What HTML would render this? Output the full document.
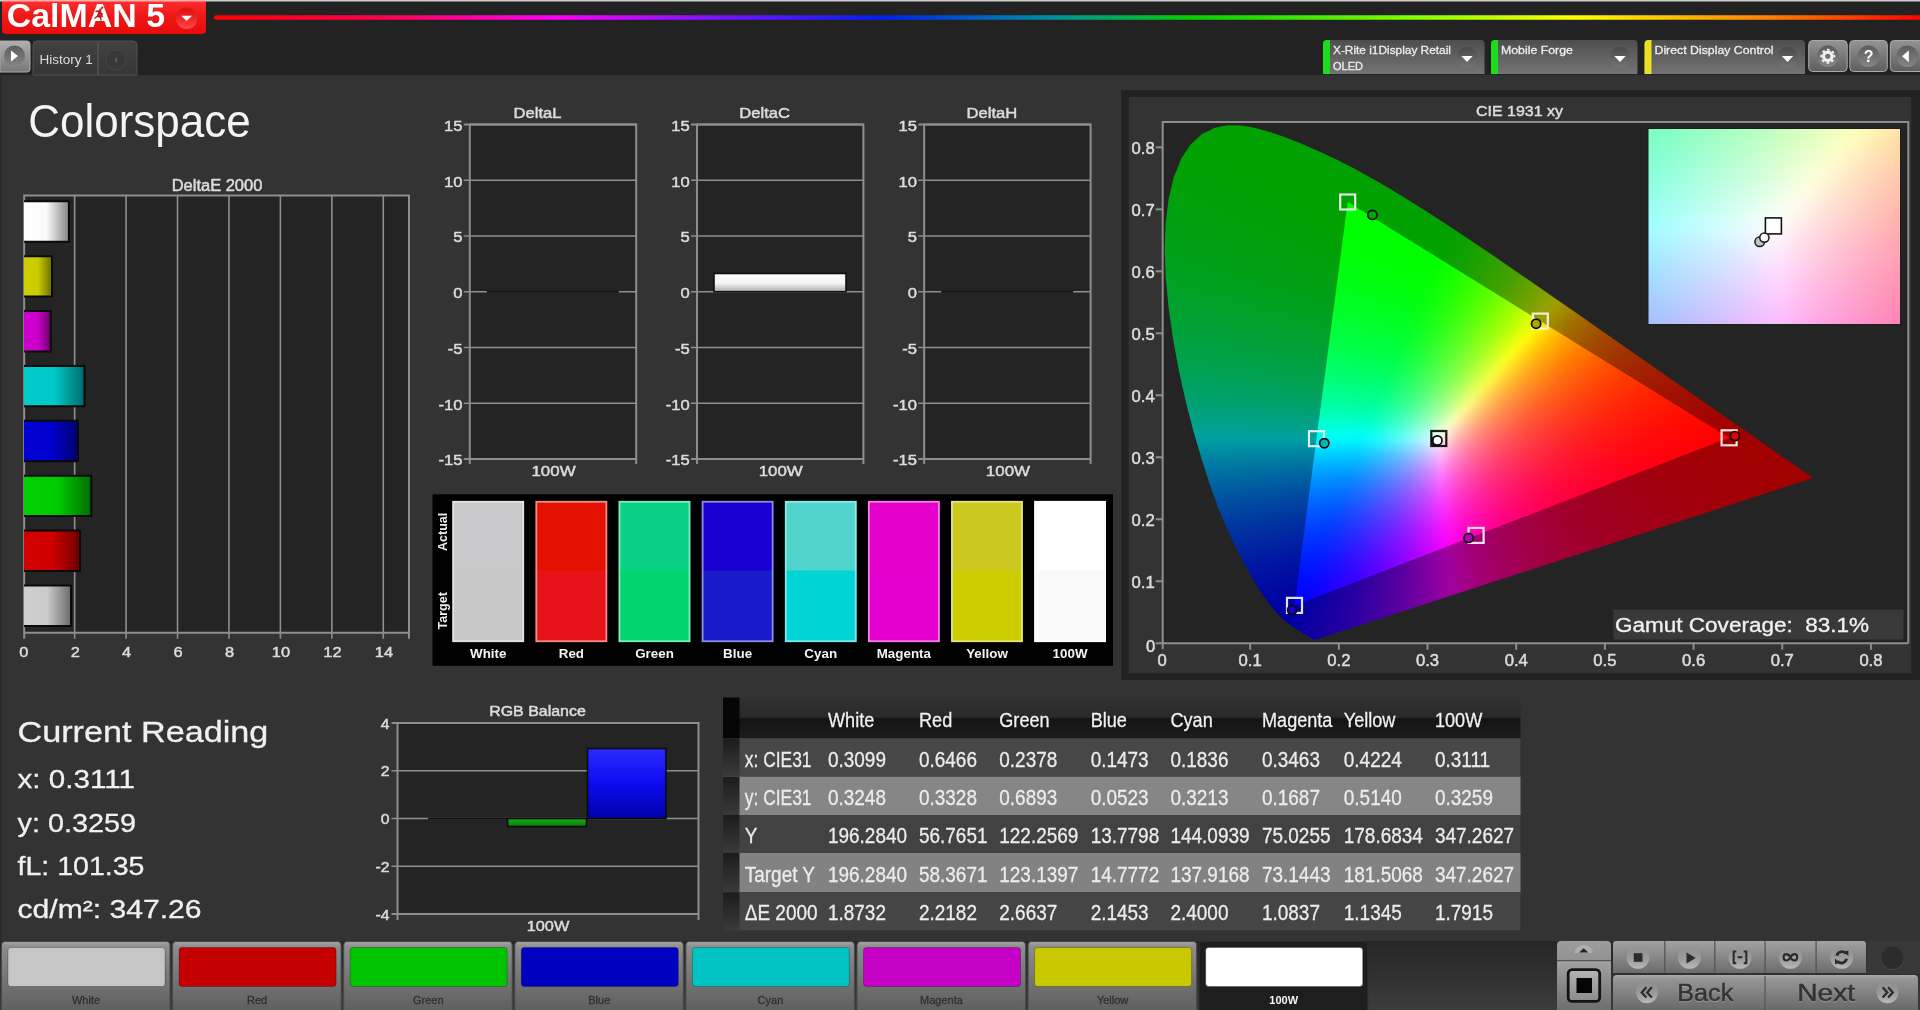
<!DOCTYPE html>
<html><head><meta charset="utf-8"><title>CalMAN 5 - Colorspace</title>
<style>
html,body{margin:0;padding:0;background:#333;overflow:hidden}
svg{display:block}
text{font-family:"Liberation Sans",sans-serif}
.cc rect{height:8.5px}
</style></head>
<body>
<svg width="1920" height="1010" viewBox="0 0 1920 1010">
<defs>
<linearGradient id="rb" x1="0" x2="1" y1="0" y2="0"><stop offset="0" stop-color="#f00"/><stop offset="0.10" stop-color="#ff0050"/><stop offset="0.20" stop-color="#f0f"/><stop offset="0.285" stop-color="#8a10ff"/><stop offset="0.39" stop-color="#0020f0"/><stop offset="0.49" stop-color="#0090a0"/><stop offset="0.57" stop-color="#00d000"/><stop offset="0.70" stop-color="#80ff00"/><stop offset="0.795" stop-color="#ff0"/><stop offset="0.91" stop-color="#ff8000"/><stop offset="1" stop-color="#f00"/></linearGradient>
<linearGradient id="lg" x1="0" x2="0" y1="0" y2="1"><stop offset="0" stop-color="#ff3030"/><stop offset="0.45" stop-color="#f01818"/><stop offset="1" stop-color="#e80c0c"/></linearGradient>
<linearGradient id="lgc" x1="0" x2="0" y1="0" y2="1"><stop offset="0" stop-color="#de0c0c"/><stop offset="1" stop-color="#ff4444"/></linearGradient>
<linearGradient id="gbtn" x1="0" x2="0" y1="0" y2="1"><stop offset="0" stop-color="#b0b0b0"/><stop offset="1" stop-color="#787878"/></linearGradient>
<linearGradient id="gtab" x1="0" x2="0" y1="0" y2="1"><stop offset="0" stop-color="#424242"/><stop offset="1" stop-color="#363636"/></linearGradient>
<linearGradient id="gbox" x1="0" x2="0" y1="0" y2="1"><stop offset="0" stop-color="#4e4e4e"/><stop offset="1" stop-color="#747474"/></linearGradient>
<linearGradient id="gdc" x1="0" x2="0" y1="0" y2="1"><stop offset="0" stop-color="#484848"/><stop offset="1" stop-color="#767676"/></linearGradient>
<linearGradient id="gb2" x1="0" x2="0" y1="0" y2="1"><stop offset="0" stop-color="#949494"/><stop offset="1" stop-color="#5e5e5e"/></linearGradient>
<linearGradient id="gci" x1="0" x2="0" y1="0" y2="1"><stop offset="0" stop-color="#5c5c5c"/><stop offset="1" stop-color="#868686"/></linearGradient>
<linearGradient id="be0" x1="0" x2="1" y1="0" y2="0"><stop offset="0" stop-color="#ffffff"/><stop offset="0.5" stop-color="#fafafa"/><stop offset="1" stop-color="#858585"/></linearGradient>
<linearGradient id="be1" x1="0" x2="1" y1="0" y2="0"><stop offset="0" stop-color="#cfcf00"/><stop offset="0.5" stop-color="#cbcb00"/><stop offset="1" stop-color="#6c6c00"/></linearGradient>
<linearGradient id="be2" x1="0" x2="1" y1="0" y2="0"><stop offset="0" stop-color="#d000d0"/><stop offset="0.5" stop-color="#cc00cc"/><stop offset="1" stop-color="#6c006c"/></linearGradient>
<linearGradient id="be3" x1="0" x2="1" y1="0" y2="0"><stop offset="0" stop-color="#00cccc"/><stop offset="0.5" stop-color="#00c8c8"/><stop offset="1" stop-color="#006a6a"/></linearGradient>
<linearGradient id="be4" x1="0" x2="1" y1="0" y2="0"><stop offset="0" stop-color="#0000d4"/><stop offset="0.5" stop-color="#0000d0"/><stop offset="1" stop-color="#00006e"/></linearGradient>
<linearGradient id="be5" x1="0" x2="1" y1="0" y2="0"><stop offset="0" stop-color="#00d000"/><stop offset="0.5" stop-color="#00cc00"/><stop offset="1" stop-color="#006c00"/></linearGradient>
<linearGradient id="be6" x1="0" x2="1" y1="0" y2="0"><stop offset="0" stop-color="#d40000"/><stop offset="0.5" stop-color="#d00000"/><stop offset="1" stop-color="#6e0000"/></linearGradient>
<linearGradient id="be7" x1="0" x2="1" y1="0" y2="0"><stop offset="0" stop-color="#cecece"/><stop offset="0.5" stop-color="#cacaca"/><stop offset="1" stop-color="#6b6b6b"/></linearGradient>
<linearGradient id="gbl" x1="0" x2="0" y1="0" y2="1"><stop offset="0" stop-color="#2a2aff"/><stop offset="0.5" stop-color="#0c0cf0"/><stop offset="1" stop-color="#0000a8"/></linearGradient>
<linearGradient id="ggr" x1="0" x2="0" y1="0" y2="1"><stop offset="0" stop-color="#18b018"/><stop offset="1" stop-color="#0a7a0a"/></linearGradient>
<linearGradient id="gwb" x1="0" x2="0" y1="0" y2="1"><stop offset="0" stop-color="#fff"/><stop offset="0.55" stop-color="#f4f4f4"/><stop offset="1" stop-color="#a8a8a8"/></linearGradient>
<linearGradient id="gth" x1="0" x2="0" y1="0" y2="1"><stop offset="0" stop-color="#303030"/><stop offset="0.48" stop-color="#2a2a2a"/><stop offset="0.52" stop-color="#141414"/><stop offset="1" stop-color="#1c1c1c"/></linearGradient>
<linearGradient id="gtl" x1="0" x2="0" y1="0" y2="1"><stop offset="0" stop-color="#1c1c1c"/><stop offset="1" stop-color="#3a3a3a"/></linearGradient>

<clipPath id="cl"><path d="M1315.9 639.5L1315.6 639.5L1315.2 639.6L1314.5 639.6L1313.5 639.4L1311.3 638.3L1307.3 635.9L1300.4 631.6L1298.5 630.5L1296.5 629.2L1294.2 627.7L1291.8 626.1L1289.2 624.2L1286.4 622.0L1283.3 619.4L1279.9 616.1L1276.0 611.9L1271.6 606.7L1266.8 600.5L1261.5 593.0L1255.7 584.0L1249.4 573.1L1242.5 560.3L1234.8 545.3L1226.6 527.8L1218.2 507.7L1210.0 484.9L1201.8 459.6L1193.6 431.7L1185.9 401.9L1179.0 371.0L1173.2 339.7L1168.7 308.5L1165.8 278.3L1164.7 249.8L1165.6 223.2L1168.6 198.7L1173.8 177.1L1181.2 158.8L1190.6 144.4L1201.7 134.2L1214.1 127.9L1227.4 125.2L1241.3 125.5L1255.5 128.1L1270.0 132.1L1284.5 137.0L1298.7 142.6L1312.5 148.4L1325.9 154.4L1339.1 160.8L1352.2 167.5L1365.1 174.5L1378.0 181.8L1390.8 189.3L1403.6 197.0L1416.3 205.0L1429.0 213.0L1441.7 221.2L1454.3 229.6L1467.0 238.0L1479.7 246.5L1492.4 255.1L1505.0 263.8L1517.7 272.4L1530.3 281.1L1542.8 289.8L1555.3 298.4L1567.7 307.0L1580.0 315.6L1592.1 324.0L1604.1 332.4L1616.0 340.7L1627.6 348.8L1639.0 356.7L1650.2 364.5L1661.0 372.0L1671.5 379.4L1681.7 386.5L1691.5 393.3L1700.7 399.7L1709.3 405.8L1717.6 411.5L1725.4 416.9L1732.8 422.1L1739.7 426.9L1746.0 431.3L1751.9 435.3L1757.3 439.1L1762.3 442.6L1766.8 445.7L1771.0 448.6L1774.7 451.3L1778.2 453.7L1781.3 455.9L1784.2 457.9L1786.8 459.7L1789.3 461.4L1799.1 468.3L1805.3 472.6L1808.8 475.0L1810.6 476.3L1811.9 477.2L1812.8 477.8L1813.0 478.0Z"/></clipPath>
<clipPath id="ct"><path d="M1729.1 437.8L1347.7 202.0L1294.5 605.4Z"/></clipPath>
<filter id="bl" x="-5%" y="-5%" width="110%" height="110%" color-interpolation-filters="sRGB"><feGaussianBlur stdDeviation="3.0"/></filter>

<clipPath id="ci"><rect x="1648.5" y="129" width="251.5" height="195"/></clipPath>
<filter id="bl2" x="-10%" y="-10%" width="120%" height="120%" color-interpolation-filters="sRGB"><feGaussianBlur stdDeviation="6"/></filter>
<linearGradient id="gbar" x1="0" x2="0" y1="0" y2="1"><stop offset="0" stop-color="#262626"/><stop offset="1" stop-color="#3c3c3c"/></linearGradient>
<linearGradient id="gsb" x1="0" x2="0" y1="0" y2="1"><stop offset="0" stop-color="#a4a4a4"/><stop offset="0.08" stop-color="#8c8c8c"/><stop offset="1" stop-color="#5e5e5e"/></linearGradient>
<linearGradient id="gct" x1="0" x2="0" y1="0" y2="1"><stop offset="0" stop-color="#a2a2a2"/><stop offset="1" stop-color="#6c6c6c"/></linearGradient>
<linearGradient id="gct2" x1="0" x2="0" y1="0" y2="1"><stop offset="0" stop-color="#9c9c9c"/><stop offset="1" stop-color="#787878"/></linearGradient>
<linearGradient id="gsq" x1="0" x2="0" y1="0" y2="1"><stop offset="0" stop-color="#b4b4b4"/><stop offset="1" stop-color="#8c8c8c"/></linearGradient>
<linearGradient id="grc" x1="0" x2="0" y1="0" y2="1"><stop offset="0" stop-color="#909090" stop-opacity="0.25"/><stop offset="0.5" stop-color="#a8a8a8" stop-opacity="0.6"/><stop offset="1" stop-color="#c8c8c8" stop-opacity="0.85"/></linearGradient>
<linearGradient id="gbn" x1="0" x2="0" y1="0" y2="1"><stop offset="0" stop-color="#ababab"/><stop offset="0.1" stop-color="#969696"/><stop offset="1" stop-color="#666"/></linearGradient>
</defs>
<g opacity="0.999">
<rect x="0.00" y="0.00" width="1920.00" height="1010.00" fill="#333" />
<rect x="0.00" y="0.00" width="1920.00" height="75.00" fill="#222" />
<rect x="0.00" y="0.00" width="1920.00" height="1.50" fill="#ccc" />
<rect x="0.00" y="75.00" width="2.00" height="866.00" fill="#2b2b2b" />
<rect x="214" y="15.2" width="1710" height="4.6" rx="2.3" fill="url(#rb)"/>
<path d="M2 0H206V30Q206 34 202 34H6Q2 34 2 30Z" fill="url(#lg)"/>
<rect x="2.00" y="0.00" width="204.00" height="1.50" fill="#ffb0b0" />
<text transform="translate(6.70 26.90) scale(1.0284 1)" font-size="33" fill="#fff" font-weight="bold" style="white-space:pre;filter:drop-shadow(0.8px 0.9px 0 rgba(110,0,0,.55))">CalMAN 5</text>
<path d="M101.500 8.5l-2.5 4l3.500 1.500M99 12.5l-1.500 3.500l-2.500 2M97.500 16l3 1.500l0.500 2.500M98.500 11l-2.500 0.500" fill="none" stroke="#b01818" stroke-width="1.3" stroke-linecap="round"/>
<circle cx="102.3" cy="7.6" r="1.1" fill="#b01818"/>
<circle cx="186.7" cy="18.3" r="10.8" fill="url(#lgc)"/>
<path d="M181.2 15.8h10.8l-5.400 5.200z" fill="#fff"/>
<path d="M0 41H27Q30 41 30 44V69Q30 72 27 72H0Z" fill="url(#gbtn)" stroke="#aaa" stroke-width="1"/>
<circle cx="14.5" cy="56" r="10.5" fill="url(#gci)"/>
<path d="M11 50.5l7 5.5l-7 5.5z" fill="#fff"/>
<path d="M33 75V45Q33 41 37 41H133Q137 41 137 45V75Z" fill="url(#gtab)" stroke="#505050" stroke-width="1"/>
<line x1="98.00" y1="42.00" x2="98.00" y2="75.00" stroke="#555" stroke-width="1.5" />
<text x="39.50" y="63.50" font-size="13.5" fill="#ddd">History 1</text>
<circle cx="116" cy="60" r="10" fill="#383838" stroke="#444" stroke-width="1"/>
<rect x="115.50" y="58.00" width="1.50" height="4.00" fill="#666" />
<path d="M1323 74V44Q1323 40 1327 40H1480.5Q1484.5 40 1484.5 44V74Z" fill="url(#gbox)"/>
<path d="M1323 74V44Q1323 40 1327 40H1330V74Z" fill="#1cde1c"/>
<text transform="translate(1333.00 53.50) scale(1.0316 1)" font-size="11.5" fill="#eee" stroke="#eee" stroke-width="0.3">X-Rite i1Display Retail</text>
<text transform="translate(1333.00 69.50) scale(0.9580 1)" font-size="11.5" fill="#eee" stroke="#eee" stroke-width="0.3">OLED</text>
<circle cx="1467.0" cy="57.5" r="10.5" fill="url(#gdc)"/>
<path d="M1461.3 56h11.4l-5.7 6z" fill="#fff"/>
<path d="M1491 74V44Q1491 40 1495 40H1633.5Q1637.5 40 1637.5 44V74Z" fill="url(#gbox)"/>
<path d="M1491 74V44Q1491 40 1495 40H1498V74Z" fill="#1cde1c"/>
<text transform="translate(1501.00 53.50) scale(1.0730 1)" font-size="11.5" fill="#eee" stroke="#eee" stroke-width="0.3">Mobile Forge</text>
<circle cx="1620.0" cy="57.5" r="10.5" fill="url(#gdc)"/>
<path d="M1614.3 56h11.4l-5.7 6z" fill="#fff"/>
<path d="M1644.5 74V44Q1644.5 40 1648.5 40H1801Q1805 40 1805 44V74Z" fill="url(#gbox)"/>
<path d="M1644.5 74V44Q1644.5 40 1648.5 40H1651.5V74Z" fill="#e8e020"/>
<text transform="translate(1654.50 53.50) scale(1.0703 1)" font-size="11.5" fill="#eee" stroke="#eee" stroke-width="0.3">Direct Display Control</text>
<circle cx="1787.5" cy="57.5" r="10.5" fill="url(#gdc)"/>
<path d="M1781.8 56h11.4l-5.7 6z" fill="#fff"/>
<rect x="1808.7" y="40.5" width="38.5" height="31" rx="4" fill="url(#gb2)" stroke="#aaa" stroke-width="1"/>
<rect x="1849.8" y="40.5" width="37.5" height="31" rx="4" fill="url(#gb2)" stroke="#aaa" stroke-width="1"/>
<rect x="1890.3" y="40.5" width="34.700000000000045" height="31" rx="4" fill="url(#gb2)" stroke="#aaa" stroke-width="1"/>
<circle cx="1827.8" cy="56.3" r="10.8" fill="url(#gci)"/>
<circle cx="1827.8" cy="56.3" r="4.2" fill="none" stroke="#f0f0f0" stroke-width="3.2"/>
<circle cx="1827.8" cy="56.3" r="6.5" fill="none" stroke="#f0f0f0" stroke-width="2" stroke-dasharray="2.6 2.505" transform="rotate(-14 1827.8 56.3)"/>
<circle cx="1868.5" cy="56.3" r="10.8" fill="url(#gci)"/>
<text x="1868.60" y="62.00" font-size="16" fill="#fff" font-weight="bold" text-anchor="middle">?</text>
<circle cx="1907.3" cy="56.3" r="10.8" fill="url(#gci)"/>
<path d="M1908.8 50.4v11.8l-6.8-5.9z" fill="#fff"/>
<text transform="translate(28.20 137.20) scale(0.9563 1)" font-size="46" fill="#f4f4f4">Colorspace</text>
<rect x="24.20" y="195.40" width="384.80" height="437.40" fill="#242424" />
<line x1="74.64" y1="195.40" x2="74.64" y2="632.80" stroke="#8e8e8e" stroke-width="1.6" />
<line x1="126.08" y1="195.40" x2="126.08" y2="632.80" stroke="#8e8e8e" stroke-width="1.6" />
<line x1="177.52" y1="195.40" x2="177.52" y2="632.80" stroke="#8e8e8e" stroke-width="1.6" />
<line x1="228.96" y1="195.40" x2="228.96" y2="632.80" stroke="#8e8e8e" stroke-width="1.6" />
<line x1="280.40" y1="195.40" x2="280.40" y2="632.80" stroke="#8e8e8e" stroke-width="1.6" />
<line x1="331.84" y1="195.40" x2="331.84" y2="632.80" stroke="#8e8e8e" stroke-width="1.6" />
<line x1="383.28" y1="195.40" x2="383.28" y2="632.80" stroke="#8e8e8e" stroke-width="1.6" />
<path d="M24.2 638.8V195.4H409V638.8M24.2 632.8H409" fill="none" stroke="#8e8e8e" stroke-width="2"/>
<line x1="74.64" y1="632.80" x2="74.64" y2="638.80" stroke="#8e8e8e" stroke-width="1.6" />
<line x1="126.08" y1="632.80" x2="126.08" y2="638.80" stroke="#8e8e8e" stroke-width="1.6" />
<line x1="177.52" y1="632.80" x2="177.52" y2="638.80" stroke="#8e8e8e" stroke-width="1.6" />
<line x1="228.96" y1="632.80" x2="228.96" y2="638.80" stroke="#8e8e8e" stroke-width="1.6" />
<line x1="280.40" y1="632.80" x2="280.40" y2="638.80" stroke="#8e8e8e" stroke-width="1.6" />
<line x1="331.84" y1="632.80" x2="331.84" y2="638.80" stroke="#8e8e8e" stroke-width="1.6" />
<line x1="383.28" y1="632.80" x2="383.28" y2="638.80" stroke="#8e8e8e" stroke-width="1.6" />
<text transform="translate(217.00 190.50) scale(1.0300 1)" font-size="16" fill="#dcdcdc" text-anchor="middle" stroke="#dcdcdc" stroke-width="0.5">DeltaE 2000</text>
<text transform="translate(23.80 657.00) scale(1.0600 1)" font-size="15.5" fill="#dcdcdc" text-anchor="middle" stroke="#dcdcdc" stroke-width="0.5">0</text>
<text transform="translate(75.24 657.00) scale(1.0600 1)" font-size="15.5" fill="#dcdcdc" text-anchor="middle" stroke="#dcdcdc" stroke-width="0.5">2</text>
<text transform="translate(126.68 657.00) scale(1.0600 1)" font-size="15.5" fill="#dcdcdc" text-anchor="middle" stroke="#dcdcdc" stroke-width="0.5">4</text>
<text transform="translate(178.12 657.00) scale(1.0600 1)" font-size="15.5" fill="#dcdcdc" text-anchor="middle" stroke="#dcdcdc" stroke-width="0.5">6</text>
<text transform="translate(229.56 657.00) scale(1.0600 1)" font-size="15.5" fill="#dcdcdc" text-anchor="middle" stroke="#dcdcdc" stroke-width="0.5">8</text>
<text transform="translate(281.00 657.00) scale(1.0600 1)" font-size="15.5" fill="#dcdcdc" text-anchor="middle" stroke="#dcdcdc" stroke-width="0.5">10</text>
<text transform="translate(332.44 657.00) scale(1.0600 1)" font-size="15.5" fill="#dcdcdc" text-anchor="middle" stroke="#dcdcdc" stroke-width="0.5">12</text>
<text transform="translate(383.88 657.00) scale(1.0600 1)" font-size="15.5" fill="#dcdcdc" text-anchor="middle" stroke="#dcdcdc" stroke-width="0.5">14</text>
<path d="M24.0 201.3H68.9V241.7H24.0" fill="url(#be0)" stroke="#0a0a0a" stroke-width="2" stroke-linejoin="round"/>
<path d="M24.0 256.2H52.0V296.6H24.0" fill="url(#be1)" stroke="#0a0a0a" stroke-width="2" stroke-linejoin="round"/>
<path d="M24.0 311.1H50.7V351.5H24.0" fill="url(#be2)" stroke="#0a0a0a" stroke-width="2" stroke-linejoin="round"/>
<path d="M24.0 365.9H84.5V406.3H24.0" fill="url(#be3)" stroke="#0a0a0a" stroke-width="2" stroke-linejoin="round"/>
<path d="M24.0 420.8H78.0V461.2H24.0" fill="url(#be4)" stroke="#0a0a0a" stroke-width="2" stroke-linejoin="round"/>
<path d="M24.0 475.7H91.3V516.1H24.0" fill="url(#be5)" stroke="#0a0a0a" stroke-width="2" stroke-linejoin="round"/>
<path d="M24.0 530.6H79.9V571.0H24.0" fill="url(#be6)" stroke="#0a0a0a" stroke-width="2" stroke-linejoin="round"/>
<path d="M24.0 585.5H71.0V625.9H24.0" fill="url(#be7)" stroke="#0a0a0a" stroke-width="2" stroke-linejoin="round"/>
<text transform="translate(17.50 741.70) scale(1.1403 1)" font-size="30" fill="#f0f0f0" stroke="#f0f0f0" stroke-width="0.3">Current Reading</text>
<text transform="translate(17.50 788.00) scale(1.1852 1)" font-size="25" fill="#f0f0f0" stroke="#f0f0f0" stroke-width="0.3">x: 0.3111</text>
<text transform="translate(17.50 831.50) scale(1.1522 1)" font-size="25" fill="#f0f0f0" stroke="#f0f0f0" stroke-width="0.3">y: 0.3259</text>
<text transform="translate(17.50 874.50) scale(1.1421 1)" font-size="25" fill="#f0f0f0" stroke="#f0f0f0" stroke-width="0.3">fL: 101.35</text>
<text transform="translate(17.50 918.00) scale(1.2038 1)" font-size="25" fill="#f0f0f0" stroke="#f0f0f0" stroke-width="0.3">cd/m²: 347.26</text>
<rect x="397.50" y="723.00" width="301.00" height="191.00" fill="#242424" />
<line x1="391.50" y1="723.00" x2="698.50" y2="723.00" stroke="#8e8e8e" stroke-width="2" />
<text transform="translate(389.50 728.50) scale(1.0500 1)" font-size="15" fill="#dcdcdc" text-anchor="end" stroke="#dcdcdc" stroke-width="0.5">4</text>
<line x1="391.50" y1="770.75" x2="698.50" y2="770.75" stroke="#8e8e8e" stroke-width="1.6" />
<text transform="translate(389.50 776.25) scale(1.0500 1)" font-size="15" fill="#dcdcdc" text-anchor="end" stroke="#dcdcdc" stroke-width="0.5">2</text>
<line x1="391.50" y1="818.50" x2="698.50" y2="818.50" stroke="#8e8e8e" stroke-width="1.6" />
<text transform="translate(389.50 824.00) scale(1.0500 1)" font-size="15" fill="#dcdcdc" text-anchor="end" stroke="#dcdcdc" stroke-width="0.5">0</text>
<line x1="391.50" y1="866.25" x2="698.50" y2="866.25" stroke="#8e8e8e" stroke-width="1.6" />
<text transform="translate(389.50 871.75) scale(1.0500 1)" font-size="15" fill="#dcdcdc" text-anchor="end" stroke="#dcdcdc" stroke-width="0.5">-2</text>
<line x1="391.50" y1="914.00" x2="698.50" y2="914.00" stroke="#8e8e8e" stroke-width="2" />
<text transform="translate(389.50 919.50) scale(1.0500 1)" font-size="15" fill="#dcdcdc" text-anchor="end" stroke="#dcdcdc" stroke-width="0.5">-4</text>
<path d="M397.5 920V723H698.5V920" fill="none" stroke="#8e8e8e" stroke-width="2"/>
<text transform="translate(537.50 716.00) scale(1.0300 1)" font-size="15.5" fill="#dcdcdc" text-anchor="middle" stroke="#dcdcdc" stroke-width="0.5">RGB Balance</text>
<text transform="translate(548.00 930.50) scale(1.0500 1)" font-size="15.5" fill="#dcdcdc" text-anchor="middle" stroke="#dcdcdc" stroke-width="0.5">100W</text>
<rect x="428" y="817.7" width="79" height="1.8" fill="#111"/>
<rect x="507.5" y="818.5" width="79" height="8" fill="url(#ggr)" stroke="#0a0a0a" stroke-width="1.6"/>
<rect x="587.5" y="748.5" width="78.5" height="70.0" fill="url(#gbl)" stroke="#0a0a0a" stroke-width="1.6"/>
<rect x="469.80" y="124.50" width="166.40" height="334.50" fill="#242424" />
<line x1="463.80" y1="124.50" x2="636.20" y2="124.50" stroke="#8e8e8e" stroke-width="2" />
<text transform="translate(462.50 130.90) scale(1.0700 1)" font-size="15.5" fill="#dcdcdc" text-anchor="end" stroke="#dcdcdc" stroke-width="0.5">15</text>
<line x1="463.80" y1="180.25" x2="636.20" y2="180.25" stroke="#8e8e8e" stroke-width="1.6" />
<text transform="translate(462.50 186.65) scale(1.0700 1)" font-size="15.5" fill="#dcdcdc" text-anchor="end" stroke="#dcdcdc" stroke-width="0.5">10</text>
<line x1="463.80" y1="236.00" x2="636.20" y2="236.00" stroke="#8e8e8e" stroke-width="1.6" />
<text transform="translate(462.50 242.40) scale(1.0700 1)" font-size="15.5" fill="#dcdcdc" text-anchor="end" stroke="#dcdcdc" stroke-width="0.5">5</text>
<line x1="463.80" y1="291.75" x2="636.20" y2="291.75" stroke="#8e8e8e" stroke-width="1.6" />
<text transform="translate(462.50 298.15) scale(1.0700 1)" font-size="15.5" fill="#dcdcdc" text-anchor="end" stroke="#dcdcdc" stroke-width="0.5">0</text>
<line x1="463.80" y1="347.50" x2="636.20" y2="347.50" stroke="#8e8e8e" stroke-width="1.6" />
<text transform="translate(462.50 353.90) scale(1.0700 1)" font-size="15.5" fill="#dcdcdc" text-anchor="end" stroke="#dcdcdc" stroke-width="0.5">-5</text>
<line x1="463.80" y1="403.25" x2="636.20" y2="403.25" stroke="#8e8e8e" stroke-width="1.6" />
<text transform="translate(462.50 409.65) scale(1.0700 1)" font-size="15.5" fill="#dcdcdc" text-anchor="end" stroke="#dcdcdc" stroke-width="0.5">-10</text>
<line x1="463.80" y1="459.00" x2="636.20" y2="459.00" stroke="#8e8e8e" stroke-width="2" />
<text transform="translate(462.50 465.40) scale(1.0700 1)" font-size="15.5" fill="#dcdcdc" text-anchor="end" stroke="#dcdcdc" stroke-width="0.5">-15</text>
<path d="M469.8 464V124.5H636.2V464" fill="none" stroke="#8e8e8e" stroke-width="2"/>
<text transform="translate(537.50 117.70) scale(1.0700 1)" font-size="15.5" fill="#dcdcdc" text-anchor="middle" stroke="#dcdcdc" stroke-width="0.5">DeltaL</text>
<text transform="translate(553.50 475.80) scale(1.0900 1)" font-size="15.5" fill="#dcdcdc" text-anchor="middle" stroke="#dcdcdc" stroke-width="0.5">100W</text>
<rect x="486.8" y="290.8" width="132" height="2" fill="#141414"/>
<rect x="697.00" y="124.50" width="166.40" height="334.50" fill="#242424" />
<line x1="691.00" y1="124.50" x2="863.40" y2="124.50" stroke="#8e8e8e" stroke-width="2" />
<text transform="translate(689.70 130.90) scale(1.0700 1)" font-size="15.5" fill="#dcdcdc" text-anchor="end" stroke="#dcdcdc" stroke-width="0.5">15</text>
<line x1="691.00" y1="180.25" x2="863.40" y2="180.25" stroke="#8e8e8e" stroke-width="1.6" />
<text transform="translate(689.70 186.65) scale(1.0700 1)" font-size="15.5" fill="#dcdcdc" text-anchor="end" stroke="#dcdcdc" stroke-width="0.5">10</text>
<line x1="691.00" y1="236.00" x2="863.40" y2="236.00" stroke="#8e8e8e" stroke-width="1.6" />
<text transform="translate(689.70 242.40) scale(1.0700 1)" font-size="15.5" fill="#dcdcdc" text-anchor="end" stroke="#dcdcdc" stroke-width="0.5">5</text>
<line x1="691.00" y1="291.75" x2="863.40" y2="291.75" stroke="#8e8e8e" stroke-width="1.6" />
<text transform="translate(689.70 298.15) scale(1.0700 1)" font-size="15.5" fill="#dcdcdc" text-anchor="end" stroke="#dcdcdc" stroke-width="0.5">0</text>
<line x1="691.00" y1="347.50" x2="863.40" y2="347.50" stroke="#8e8e8e" stroke-width="1.6" />
<text transform="translate(689.70 353.90) scale(1.0700 1)" font-size="15.5" fill="#dcdcdc" text-anchor="end" stroke="#dcdcdc" stroke-width="0.5">-5</text>
<line x1="691.00" y1="403.25" x2="863.40" y2="403.25" stroke="#8e8e8e" stroke-width="1.6" />
<text transform="translate(689.70 409.65) scale(1.0700 1)" font-size="15.5" fill="#dcdcdc" text-anchor="end" stroke="#dcdcdc" stroke-width="0.5">-10</text>
<line x1="691.00" y1="459.00" x2="863.40" y2="459.00" stroke="#8e8e8e" stroke-width="2" />
<text transform="translate(689.70 465.40) scale(1.0700 1)" font-size="15.5" fill="#dcdcdc" text-anchor="end" stroke="#dcdcdc" stroke-width="0.5">-15</text>
<path d="M697.0 464V124.5H863.4V464" fill="none" stroke="#8e8e8e" stroke-width="2"/>
<text transform="translate(764.70 117.70) scale(1.0700 1)" font-size="15.5" fill="#dcdcdc" text-anchor="middle" stroke="#dcdcdc" stroke-width="0.5">DeltaC</text>
<text transform="translate(780.70 475.80) scale(1.0900 1)" font-size="15.5" fill="#dcdcdc" text-anchor="middle" stroke="#dcdcdc" stroke-width="0.5">100W</text>
<rect x="714.0" y="273.5" width="132" height="18.2" fill="url(#gwb)" stroke="#101010" stroke-width="1.6"/>
<rect x="924.20" y="124.50" width="166.40" height="334.50" fill="#242424" />
<line x1="918.20" y1="124.50" x2="1090.60" y2="124.50" stroke="#8e8e8e" stroke-width="2" />
<text transform="translate(916.90 130.90) scale(1.0700 1)" font-size="15.5" fill="#dcdcdc" text-anchor="end" stroke="#dcdcdc" stroke-width="0.5">15</text>
<line x1="918.20" y1="180.25" x2="1090.60" y2="180.25" stroke="#8e8e8e" stroke-width="1.6" />
<text transform="translate(916.90 186.65) scale(1.0700 1)" font-size="15.5" fill="#dcdcdc" text-anchor="end" stroke="#dcdcdc" stroke-width="0.5">10</text>
<line x1="918.20" y1="236.00" x2="1090.60" y2="236.00" stroke="#8e8e8e" stroke-width="1.6" />
<text transform="translate(916.90 242.40) scale(1.0700 1)" font-size="15.5" fill="#dcdcdc" text-anchor="end" stroke="#dcdcdc" stroke-width="0.5">5</text>
<line x1="918.20" y1="291.75" x2="1090.60" y2="291.75" stroke="#8e8e8e" stroke-width="1.6" />
<text transform="translate(916.90 298.15) scale(1.0700 1)" font-size="15.5" fill="#dcdcdc" text-anchor="end" stroke="#dcdcdc" stroke-width="0.5">0</text>
<line x1="918.20" y1="347.50" x2="1090.60" y2="347.50" stroke="#8e8e8e" stroke-width="1.6" />
<text transform="translate(916.90 353.90) scale(1.0700 1)" font-size="15.5" fill="#dcdcdc" text-anchor="end" stroke="#dcdcdc" stroke-width="0.5">-5</text>
<line x1="918.20" y1="403.25" x2="1090.60" y2="403.25" stroke="#8e8e8e" stroke-width="1.6" />
<text transform="translate(916.90 409.65) scale(1.0700 1)" font-size="15.5" fill="#dcdcdc" text-anchor="end" stroke="#dcdcdc" stroke-width="0.5">-10</text>
<line x1="918.20" y1="459.00" x2="1090.60" y2="459.00" stroke="#8e8e8e" stroke-width="2" />
<text transform="translate(916.90 465.40) scale(1.0700 1)" font-size="15.5" fill="#dcdcdc" text-anchor="end" stroke="#dcdcdc" stroke-width="0.5">-15</text>
<path d="M924.2 464V124.5H1090.6V464" fill="none" stroke="#8e8e8e" stroke-width="2"/>
<text transform="translate(991.90 117.70) scale(1.0700 1)" font-size="15.5" fill="#dcdcdc" text-anchor="middle" stroke="#dcdcdc" stroke-width="0.5">DeltaH</text>
<text transform="translate(1007.90 475.80) scale(1.0900 1)" font-size="15.5" fill="#dcdcdc" text-anchor="middle" stroke="#dcdcdc" stroke-width="0.5">100W</text>
<rect x="941.2" y="290.8" width="132" height="2" fill="#141414"/>
<rect x="432.50" y="494.30" width="680.50" height="171.50" fill="#000" />
<rect x="452.50" y="501.00" width="71.50" height="70.00" fill="#c9c9cb" />
<rect x="452.50" y="570.50" width="71.50" height="71.50" fill="#c8c8c8" />
<rect x="453.25" y="501.75" width="70.0" height="139.5" fill="none" stroke="#e9e9e9" stroke-width="1.8" opacity="0.85"/>
<text transform="translate(488.25 657.80) scale(1.0300 1)" font-size="13" fill="#f4f4f4" font-weight="bold" text-anchor="middle">White</text>
<rect x="535.62" y="501.00" width="71.50" height="70.00" fill="#e41000" />
<rect x="535.62" y="570.50" width="71.50" height="71.50" fill="#e61419" />
<rect x="536.37" y="501.75" width="70.0" height="139.5" fill="none" stroke="#f5a1a3" stroke-width="1.8" opacity="0.85"/>
<text transform="translate(571.37 657.80) scale(1.0300 1)" font-size="13" fill="#f4f4f4" font-weight="bold" text-anchor="middle">Red</text>
<rect x="618.74" y="501.00" width="71.50" height="70.00" fill="#0ad085" />
<rect x="618.74" y="570.50" width="71.50" height="71.50" fill="#00d46e" />
<rect x="619.49" y="501.75" width="70.0" height="139.5" fill="none" stroke="#99edc5" stroke-width="1.8" opacity="0.85"/>
<text transform="translate(654.49 657.80) scale(1.0300 1)" font-size="13" fill="#f4f4f4" font-weight="bold" text-anchor="middle">Green</text>
<rect x="701.86" y="501.00" width="71.50" height="70.00" fill="#1800d0" />
<rect x="701.86" y="570.50" width="71.50" height="71.50" fill="#1a1ac8" />
<rect x="702.61" y="501.75" width="70.0" height="139.5" fill="none" stroke="#a3a3e9" stroke-width="1.8" opacity="0.85"/>
<text transform="translate(737.61 657.80) scale(1.0300 1)" font-size="13" fill="#f4f4f4" font-weight="bold" text-anchor="middle">Blue</text>
<rect x="784.98" y="501.00" width="71.50" height="70.00" fill="#50d4cc" />
<rect x="784.98" y="570.50" width="71.50" height="71.50" fill="#00d4d4" />
<rect x="785.73" y="501.75" width="70.0" height="139.5" fill="none" stroke="#99eded" stroke-width="1.8" opacity="0.85"/>
<text transform="translate(820.73 657.80) scale(1.0300 1)" font-size="13" fill="#f4f4f4" font-weight="bold" text-anchor="middle">Cyan</text>
<rect x="868.10" y="501.00" width="71.50" height="70.00" fill="#e600cc" />
<rect x="868.10" y="570.50" width="71.50" height="71.50" fill="#e600d0" />
<rect x="868.85" y="501.75" width="70.0" height="139.5" fill="none" stroke="#f599ec" stroke-width="1.8" opacity="0.85"/>
<text transform="translate(903.85 657.80) scale(1.0300 1)" font-size="13" fill="#f4f4f4" font-weight="bold" text-anchor="middle">Magenta</text>
<rect x="951.22" y="501.00" width="71.50" height="70.00" fill="#cbc820" />
<rect x="951.22" y="570.50" width="71.50" height="71.50" fill="#cccc00" />
<rect x="951.97" y="501.75" width="70.0" height="139.5" fill="none" stroke="#eaea99" stroke-width="1.8" opacity="0.85"/>
<text transform="translate(986.97 657.80) scale(1.0300 1)" font-size="13" fill="#f4f4f4" font-weight="bold" text-anchor="middle">Yellow</text>
<rect x="1034.34" y="501.00" width="71.50" height="70.00" fill="#ffffff" />
<rect x="1034.34" y="570.50" width="71.50" height="71.50" fill="#fafafa" />
<rect x="1035.09" y="501.75" width="70.0" height="139.5" fill="none" stroke="#fdfdfd" stroke-width="1.8" opacity="0.85"/>
<text transform="translate(1070.09 657.80) scale(1.0300 1)" font-size="13" fill="#f4f4f4" font-weight="bold" text-anchor="middle">100W</text>
<text transform="translate(447.3 531.9) rotate(-90)" font-size="12.5" font-weight="bold" fill="#f0f0f0" text-anchor="middle">Actual</text>
<text transform="translate(447.3 610.8) rotate(-90)" font-size="12.5" font-weight="bold" fill="#f0f0f0" text-anchor="middle">Target</text>
<rect x="723.00" y="697.50" width="797.50" height="40.80" fill="url(#gth)" />
<rect x="723.00" y="697.50" width="16.50" height="40.80" fill="#050505" />
<rect x="723.00" y="738.30" width="797.50" height="38.40" fill="#474747" />
<rect x="723.00" y="738.30" width="16.50" height="38.40" fill="url(#gtl)" />
<rect x="723.00" y="776.70" width="797.50" height="38.30" fill="#868686" />
<rect x="723.00" y="776.70" width="16.50" height="38.30" fill="url(#gtl)" />
<rect x="723.00" y="815.00" width="797.50" height="38.00" fill="#424242" />
<rect x="723.00" y="815.00" width="16.50" height="38.00" fill="url(#gtl)" />
<rect x="723.00" y="853.00" width="797.50" height="39.30" fill="#828282" />
<rect x="723.00" y="853.00" width="16.50" height="39.30" fill="url(#gtl)" />
<rect x="723.00" y="892.30" width="797.50" height="38.00" fill="#454545" />
<rect x="723.00" y="892.30" width="16.50" height="38.00" fill="url(#gtl)" />
<text transform="translate(828.00 726.70) scale(0.8620 1)" font-size="21" fill="#f2f2f2" stroke="#ececec" stroke-width="0.3">White</text>
<text transform="translate(919.00 726.70) scale(0.8620 1)" font-size="21" fill="#f2f2f2" stroke="#ececec" stroke-width="0.3">Red</text>
<text transform="translate(999.30 726.70) scale(0.8620 1)" font-size="21" fill="#f2f2f2" stroke="#ececec" stroke-width="0.3">Green</text>
<text transform="translate(1090.70 726.70) scale(0.8620 1)" font-size="21" fill="#f2f2f2" stroke="#ececec" stroke-width="0.3">Blue</text>
<text transform="translate(1170.50 726.70) scale(0.8620 1)" font-size="21" fill="#f2f2f2" stroke="#ececec" stroke-width="0.3">Cyan</text>
<text transform="translate(1262.00 726.70) scale(0.8620 1)" font-size="21" fill="#f2f2f2" stroke="#ececec" stroke-width="0.3">Magenta</text>
<text transform="translate(1343.80 726.70) scale(0.8620 1)" font-size="21" fill="#f2f2f2" stroke="#ececec" stroke-width="0.3">Yellow</text>
<text transform="translate(1435.00 726.70) scale(0.8620 1)" font-size="21" fill="#f2f2f2" stroke="#ececec" stroke-width="0.3">100W</text>
<text transform="translate(744.80 766.50) scale(0.7917 1)" font-size="22" fill="#ececec" stroke="#ececec" stroke-width="0.3">x: CIE31</text>
<text transform="translate(828.00 766.50) scale(0.8620 1)" font-size="22" fill="#ececec" stroke="#ececec" stroke-width="0.3">0.3099</text>
<text transform="translate(919.00 766.50) scale(0.8620 1)" font-size="22" fill="#ececec" stroke="#ececec" stroke-width="0.3">0.6466</text>
<text transform="translate(999.30 766.50) scale(0.8620 1)" font-size="22" fill="#ececec" stroke="#ececec" stroke-width="0.3">0.2378</text>
<text transform="translate(1090.70 766.50) scale(0.8620 1)" font-size="22" fill="#ececec" stroke="#ececec" stroke-width="0.3">0.1473</text>
<text transform="translate(1170.50 766.50) scale(0.8620 1)" font-size="22" fill="#ececec" stroke="#ececec" stroke-width="0.3">0.1836</text>
<text transform="translate(1262.00 766.50) scale(0.8620 1)" font-size="22" fill="#ececec" stroke="#ececec" stroke-width="0.3">0.3463</text>
<text transform="translate(1343.80 766.50) scale(0.8620 1)" font-size="22" fill="#ececec" stroke="#ececec" stroke-width="0.3">0.4224</text>
<text transform="translate(1435.00 766.50) scale(0.8620 1)" font-size="22" fill="#ececec" stroke="#ececec" stroke-width="0.3">0.3111</text>
<text transform="translate(744.80 804.80) scale(0.7917 1)" font-size="22" fill="#ececec" stroke="#ececec" stroke-width="0.3">y: CIE31</text>
<text transform="translate(828.00 804.80) scale(0.8620 1)" font-size="22" fill="#ececec" stroke="#ececec" stroke-width="0.3">0.3248</text>
<text transform="translate(919.00 804.80) scale(0.8620 1)" font-size="22" fill="#ececec" stroke="#ececec" stroke-width="0.3">0.3328</text>
<text transform="translate(999.30 804.80) scale(0.8620 1)" font-size="22" fill="#ececec" stroke="#ececec" stroke-width="0.3">0.6893</text>
<text transform="translate(1090.70 804.80) scale(0.8620 1)" font-size="22" fill="#ececec" stroke="#ececec" stroke-width="0.3">0.0523</text>
<text transform="translate(1170.50 804.80) scale(0.8620 1)" font-size="22" fill="#ececec" stroke="#ececec" stroke-width="0.3">0.3213</text>
<text transform="translate(1262.00 804.80) scale(0.8620 1)" font-size="22" fill="#ececec" stroke="#ececec" stroke-width="0.3">0.1687</text>
<text transform="translate(1343.80 804.80) scale(0.8620 1)" font-size="22" fill="#ececec" stroke="#ececec" stroke-width="0.3">0.5140</text>
<text transform="translate(1435.00 804.80) scale(0.8620 1)" font-size="22" fill="#ececec" stroke="#ececec" stroke-width="0.3">0.3259</text>
<text transform="translate(744.80 843.10) scale(0.8620 1)" font-size="22" fill="#ececec" stroke="#ececec" stroke-width="0.3">Y</text>
<text transform="translate(828.00 843.10) scale(0.8620 1)" font-size="22" fill="#ececec" stroke="#ececec" stroke-width="0.3">196.2840</text>
<text transform="translate(919.00 843.10) scale(0.8620 1)" font-size="22" fill="#ececec" stroke="#ececec" stroke-width="0.3">56.7651</text>
<text transform="translate(999.30 843.10) scale(0.8620 1)" font-size="22" fill="#ececec" stroke="#ececec" stroke-width="0.3">122.2569</text>
<text transform="translate(1090.70 843.10) scale(0.8620 1)" font-size="22" fill="#ececec" stroke="#ececec" stroke-width="0.3">13.7798</text>
<text transform="translate(1170.50 843.10) scale(0.8620 1)" font-size="22" fill="#ececec" stroke="#ececec" stroke-width="0.3">144.0939</text>
<text transform="translate(1262.00 843.10) scale(0.8620 1)" font-size="22" fill="#ececec" stroke="#ececec" stroke-width="0.3">75.0255</text>
<text transform="translate(1343.80 843.10) scale(0.8620 1)" font-size="22" fill="#ececec" stroke="#ececec" stroke-width="0.3">178.6834</text>
<text transform="translate(1435.00 843.10) scale(0.8620 1)" font-size="22" fill="#ececec" stroke="#ececec" stroke-width="0.3">347.2627</text>
<text transform="translate(744.80 881.50) scale(0.8620 1)" font-size="22" fill="#ececec" stroke="#ececec" stroke-width="0.3">Target Y</text>
<text transform="translate(828.00 881.50) scale(0.8620 1)" font-size="22" fill="#ececec" stroke="#ececec" stroke-width="0.3">196.2840</text>
<text transform="translate(919.00 881.50) scale(0.8620 1)" font-size="22" fill="#ececec" stroke="#ececec" stroke-width="0.3">58.3671</text>
<text transform="translate(999.30 881.50) scale(0.8620 1)" font-size="22" fill="#ececec" stroke="#ececec" stroke-width="0.3">123.1397</text>
<text transform="translate(1090.70 881.50) scale(0.8620 1)" font-size="22" fill="#ececec" stroke="#ececec" stroke-width="0.3">14.7772</text>
<text transform="translate(1170.50 881.50) scale(0.8620 1)" font-size="22" fill="#ececec" stroke="#ececec" stroke-width="0.3">137.9168</text>
<text transform="translate(1262.00 881.50) scale(0.8620 1)" font-size="22" fill="#ececec" stroke="#ececec" stroke-width="0.3">73.1443</text>
<text transform="translate(1343.80 881.50) scale(0.8620 1)" font-size="22" fill="#ececec" stroke="#ececec" stroke-width="0.3">181.5068</text>
<text transform="translate(1435.00 881.50) scale(0.8620 1)" font-size="22" fill="#ececec" stroke="#ececec" stroke-width="0.3">347.2627</text>
<text transform="translate(744.80 919.90) scale(0.8620 1)" font-size="22" fill="#ececec" stroke="#ececec" stroke-width="0.3">ΔE 2000</text>
<text transform="translate(828.00 919.90) scale(0.8620 1)" font-size="22" fill="#ececec" stroke="#ececec" stroke-width="0.3">1.8732</text>
<text transform="translate(919.00 919.90) scale(0.8620 1)" font-size="22" fill="#ececec" stroke="#ececec" stroke-width="0.3">2.2182</text>
<text transform="translate(999.30 919.90) scale(0.8620 1)" font-size="22" fill="#ececec" stroke="#ececec" stroke-width="0.3">2.6637</text>
<text transform="translate(1090.70 919.90) scale(0.8620 1)" font-size="22" fill="#ececec" stroke="#ececec" stroke-width="0.3">2.1453</text>
<text transform="translate(1170.50 919.90) scale(0.8620 1)" font-size="22" fill="#ececec" stroke="#ececec" stroke-width="0.3">2.4000</text>
<text transform="translate(1262.00 919.90) scale(0.8620 1)" font-size="22" fill="#ececec" stroke="#ececec" stroke-width="0.3">1.0837</text>
<text transform="translate(1343.80 919.90) scale(0.8620 1)" font-size="22" fill="#ececec" stroke="#ececec" stroke-width="0.3">1.1345</text>
<text transform="translate(1435.00 919.90) scale(0.8620 1)" font-size="22" fill="#ececec" stroke="#ececec" stroke-width="0.3">1.7915</text>
<rect x="1121.00" y="90.00" width="800.00" height="590.00" fill="#222" />
<rect x="1128.70" y="97.00" width="782.50" height="576.20" fill="#333" />
<rect x="1162.70" y="122.00" width="745.60" height="521.20" fill="#242424" />

<g clip-path="url(#cl)"><g filter="url(#bl)" class="cc">
<rect x="1205" y="117" width="64.5" fill="#00a100"/>
<rect x="1189" y="125" width="104.5" fill="#00a100"/>
<rect x="1181" y="133" width="128.5" fill="#00a100"/>
<rect x="1181" y="141" width="8.5" fill="#00a101"/>
<rect x="1189" y="141" width="144.5" fill="#00a100"/>
<rect x="1173" y="149" width="16.5" fill="#00a102"/>
<rect x="1189" y="149" width="16.5" fill="#00a101"/>
<rect x="1205" y="149" width="144.5" fill="#00a100"/>
<rect x="1173" y="157" width="8.5" fill="#00a104"/>
<rect x="1181" y="157" width="8.5" fill="#00a103"/>
<rect x="1189" y="157" width="16.5" fill="#00a102"/>
<rect x="1205" y="157" width="16.5" fill="#00a101"/>
<rect x="1221" y="157" width="144.5" fill="#00a100"/>
<rect x="1165" y="165" width="8.5" fill="#00a106"/>
<rect x="1173" y="165" width="8.5" fill="#00a105"/>
<rect x="1181" y="165" width="16.5" fill="#00a104"/>
<rect x="1197" y="165" width="8.5" fill="#00a103"/>
<rect x="1205" y="165" width="16.5" fill="#00a102"/>
<rect x="1221" y="165" width="16.5" fill="#00a101"/>
<rect x="1237" y="165" width="136.5" fill="#00a100"/>
<rect x="1165" y="173" width="8.5" fill="#00a107"/>
<rect x="1173" y="173" width="16.5" fill="#00a106"/>
<rect x="1189" y="173" width="8.5" fill="#00a105"/>
<rect x="1197" y="173" width="16.5" fill="#00a104"/>
<rect x="1213" y="173" width="8.5" fill="#00a103"/>
<rect x="1221" y="173" width="16.5" fill="#00a102"/>
<rect x="1237" y="173" width="16.5" fill="#00a101"/>
<rect x="1253" y="173" width="136.5" fill="#00a100"/>
<rect x="1165" y="181" width="16.5" fill="#00a108"/>
<rect x="1181" y="181" width="8.5" fill="#00a107"/>
<rect x="1189" y="181" width="16.5" fill="#00a106"/>
<rect x="1205" y="181" width="8.5" fill="#00a105"/>
<rect x="1213" y="181" width="16.5" fill="#00a104"/>
<rect x="1229" y="181" width="8.5" fill="#00a103"/>
<rect x="1237" y="181" width="16.5" fill="#00a102"/>
<rect x="1253" y="181" width="16.5" fill="#00a101"/>
<rect x="1269" y="181" width="136.5" fill="#00a100"/>
<rect x="1157" y="189" width="8.5" fill="#00a10b"/>
<rect x="1165" y="189" width="8.5" fill="#00a10a"/>
<rect x="1173" y="189" width="16.5" fill="#00a109"/>
<rect x="1189" y="189" width="8.5" fill="#00a108"/>
<rect x="1197" y="189" width="8.5" fill="#00a107"/>
<rect x="1205" y="189" width="16.5" fill="#00a106"/>
<rect x="1221" y="189" width="8.5" fill="#00a105"/>
<rect x="1229" y="189" width="16.5" fill="#00a104"/>
<rect x="1245" y="189" width="8.5" fill="#00a103"/>
<rect x="1253" y="189" width="16.5" fill="#00a102"/>
<rect x="1269" y="189" width="8.5" fill="#00a101"/>
<rect x="1277" y="189" width="136.5" fill="#00a100"/>
<rect x="1157" y="197" width="8.5" fill="#00a10d"/>
<rect x="1165" y="197" width="8.5" fill="#00a10c"/>
<rect x="1173" y="197" width="8.5" fill="#00a10b"/>
<rect x="1181" y="197" width="16.5" fill="#00a10a"/>
<rect x="1197" y="197" width="8.5" fill="#00a109"/>
<rect x="1205" y="197" width="8.5" fill="#00a108"/>
<rect x="1213" y="197" width="16.5" fill="#00a107"/>
<rect x="1229" y="197" width="8.5" fill="#00a106"/>
<rect x="1237" y="197" width="8.5" fill="#00a105"/>
<rect x="1245" y="197" width="16.5" fill="#00a104"/>
<rect x="1261" y="197" width="8.5" fill="#00a103"/>
<rect x="1269" y="197" width="16.5" fill="#00a102"/>
<rect x="1285" y="197" width="8.5" fill="#00a101"/>
<rect x="1293" y="197" width="136.5" fill="#00a100"/>
<rect x="1157" y="205" width="16.5" fill="#00a10e"/>
<rect x="1173" y="205" width="8.5" fill="#00a10d"/>
<rect x="1181" y="205" width="8.5" fill="#00a10c"/>
<rect x="1189" y="205" width="16.5" fill="#00a10b"/>
<rect x="1205" y="205" width="8.5" fill="#00a10a"/>
<rect x="1213" y="205" width="8.5" fill="#00a109"/>
<rect x="1221" y="205" width="8.5" fill="#00a108"/>
<rect x="1229" y="205" width="16.5" fill="#00a107"/>
<rect x="1245" y="205" width="8.5" fill="#00a106"/>
<rect x="1253" y="205" width="8.5" fill="#00a105"/>
<rect x="1261" y="205" width="16.5" fill="#00a104"/>
<rect x="1277" y="205" width="8.5" fill="#00a103"/>
<rect x="1285" y="205" width="8.5" fill="#00a102"/>
<rect x="1293" y="205" width="16.5" fill="#00a101"/>
<rect x="1309" y="205" width="136.5" fill="#00a100"/>
<rect x="1157" y="213" width="16.5" fill="#00a110"/>
<rect x="1173" y="213" width="8.5" fill="#00a10f"/>
<rect x="1181" y="213" width="8.5" fill="#00a10e"/>
<rect x="1189" y="213" width="8.5" fill="#00a10d"/>
<rect x="1197" y="213" width="16.5" fill="#00a10c"/>
<rect x="1213" y="213" width="8.5" fill="#00a10b"/>
<rect x="1221" y="213" width="8.5" fill="#00a10a"/>
<rect x="1229" y="213" width="8.5" fill="#00a109"/>
<rect x="1237" y="213" width="16.5" fill="#00a108"/>
<rect x="1253" y="213" width="8.5" fill="#00a107"/>
<rect x="1261" y="213" width="8.5" fill="#00a106"/>
<rect x="1269" y="213" width="8.5" fill="#00a105"/>
<rect x="1277" y="213" width="16.5" fill="#00a104"/>
<rect x="1293" y="213" width="8.5" fill="#00a103"/>
<rect x="1301" y="213" width="8.5" fill="#00a102"/>
<rect x="1309" y="213" width="16.5" fill="#00a101"/>
<rect x="1325" y="213" width="128.5" fill="#00a100"/>
<rect x="1157" y="221" width="16.5" fill="#00a112"/>
<rect x="1173" y="221" width="8.5" fill="#00a111"/>
<rect x="1181" y="221" width="8.5" fill="#00a110"/>
<rect x="1189" y="221" width="8.5" fill="#00a10f"/>
<rect x="1197" y="221" width="16.5" fill="#00a10e"/>
<rect x="1213" y="221" width="8.5" fill="#00a10d"/>
<rect x="1221" y="221" width="8.5" fill="#00a10c"/>
<rect x="1229" y="221" width="8.5" fill="#00a10b"/>
<rect x="1237" y="221" width="8.5" fill="#00a10a"/>
<rect x="1245" y="221" width="16.5" fill="#00a109"/>
<rect x="1261" y="221" width="8.5" fill="#00a108"/>
<rect x="1269" y="221" width="8.5" fill="#00a107"/>
<rect x="1277" y="221" width="8.5" fill="#00a106"/>
<rect x="1285" y="221" width="8.5" fill="#00a105"/>
<rect x="1293" y="221" width="16.5" fill="#00a104"/>
<rect x="1309" y="221" width="8.5" fill="#00a103"/>
<rect x="1317" y="221" width="8.5" fill="#00a102"/>
<rect x="1325" y="221" width="16.5" fill="#00a101"/>
<rect x="1341" y="221" width="16.5" fill="#00a100"/>
<rect x="1365" y="221" width="80.5" fill="#00a100"/>
<rect x="1445" y="221" width="8.5" fill="#01a100"/>
<rect x="1453" y="221" width="8.5" fill="#04a100"/>
<rect x="1461" y="221" width="8.5" fill="#09a100"/>
<rect x="1157" y="229" width="8.5" fill="#00a115"/>
<rect x="1165" y="229" width="8.5" fill="#00a114"/>
<rect x="1173" y="229" width="8.5" fill="#00a113"/>
<rect x="1181" y="229" width="8.5" fill="#00a112"/>
<rect x="1189" y="229" width="8.5" fill="#00a111"/>
<rect x="1197" y="229" width="16.5" fill="#00a110"/>
<rect x="1213" y="229" width="8.5" fill="#00a10f"/>
<rect x="1221" y="229" width="8.5" fill="#00a10e"/>
<rect x="1229" y="229" width="8.5" fill="#00a10d"/>
<rect x="1237" y="229" width="8.5" fill="#00a10c"/>
<rect x="1245" y="229" width="8.5" fill="#00a10b"/>
<rect x="1253" y="229" width="16.5" fill="#00a10a"/>
<rect x="1269" y="229" width="8.5" fill="#00a109"/>
<rect x="1277" y="229" width="8.5" fill="#00a108"/>
<rect x="1285" y="229" width="8.5" fill="#00a107"/>
<rect x="1293" y="229" width="8.5" fill="#00a106"/>
<rect x="1301" y="229" width="8.5" fill="#00a105"/>
<rect x="1309" y="229" width="16.5" fill="#00a104"/>
<rect x="1325" y="229" width="8.5" fill="#00a103"/>
<rect x="1333" y="229" width="8.5" fill="#00a102"/>
<rect x="1341" y="229" width="16.5" fill="#00a101"/>
<rect x="1373" y="229" width="72.5" fill="#00a100"/>
<rect x="1445" y="229" width="8.5" fill="#02a100"/>
<rect x="1453" y="229" width="8.5" fill="#06a100"/>
<rect x="1461" y="229" width="8.5" fill="#0ba100"/>
<rect x="1469" y="229" width="8.5" fill="#10a100"/>
<rect x="1157" y="237" width="8.5" fill="#00a117"/>
<rect x="1165" y="237" width="8.5" fill="#00a116"/>
<rect x="1173" y="237" width="8.5" fill="#00a115"/>
<rect x="1181" y="237" width="16.5" fill="#00a114"/>
<rect x="1197" y="237" width="8.5" fill="#00a113"/>
<rect x="1205" y="237" width="8.5" fill="#00a112"/>
<rect x="1213" y="237" width="8.5" fill="#00a111"/>
<rect x="1221" y="237" width="8.5" fill="#00a110"/>
<rect x="1229" y="237" width="8.5" fill="#00a10f"/>
<rect x="1237" y="237" width="8.5" fill="#00a10e"/>
<rect x="1245" y="237" width="16.5" fill="#00a10d"/>
<rect x="1261" y="237" width="8.5" fill="#00a10c"/>
<rect x="1269" y="237" width="8.5" fill="#00a10b"/>
<rect x="1277" y="237" width="8.5" fill="#00a10a"/>
<rect x="1285" y="237" width="8.5" fill="#00a109"/>
<rect x="1293" y="237" width="8.5" fill="#00a108"/>
<rect x="1301" y="237" width="8.5" fill="#00a107"/>
<rect x="1309" y="237" width="8.5" fill="#00a106"/>
<rect x="1317" y="237" width="8.5" fill="#00a105"/>
<rect x="1325" y="237" width="16.5" fill="#00a104"/>
<rect x="1341" y="237" width="8.5" fill="#00a103"/>
<rect x="1349" y="237" width="8.5" fill="#00a102"/>
<rect x="1389" y="237" width="56.5" fill="#00a100"/>
<rect x="1445" y="237" width="8.5" fill="#04a100"/>
<rect x="1453" y="237" width="8.5" fill="#08a100"/>
<rect x="1461" y="237" width="8.5" fill="#0da100"/>
<rect x="1469" y="237" width="8.5" fill="#12a100"/>
<rect x="1477" y="237" width="8.5" fill="#18a100"/>
<rect x="1485" y="237" width="8.5" fill="#1ea100"/>
<rect x="1157" y="245" width="8.5" fill="#00a119"/>
<rect x="1165" y="245" width="16.5" fill="#00a118"/>
<rect x="1181" y="245" width="8.5" fill="#00a117"/>
<rect x="1189" y="245" width="8.5" fill="#00a116"/>
<rect x="1197" y="245" width="8.5" fill="#00a115"/>
<rect x="1205" y="245" width="8.5" fill="#00a114"/>
<rect x="1213" y="245" width="8.5" fill="#00a113"/>
<rect x="1221" y="245" width="16.5" fill="#00a112"/>
<rect x="1237" y="245" width="8.5" fill="#00a111"/>
<rect x="1245" y="245" width="8.5" fill="#00a110"/>
<rect x="1253" y="245" width="8.5" fill="#00a10f"/>
<rect x="1261" y="245" width="8.5" fill="#00a10e"/>
<rect x="1269" y="245" width="8.5" fill="#00a10d"/>
<rect x="1277" y="245" width="8.5" fill="#00a10c"/>
<rect x="1285" y="245" width="8.5" fill="#00a10b"/>
<rect x="1293" y="245" width="8.5" fill="#00a10a"/>
<rect x="1301" y="245" width="8.5" fill="#00a109"/>
<rect x="1309" y="245" width="8.5" fill="#00a108"/>
<rect x="1317" y="245" width="8.5" fill="#00a107"/>
<rect x="1325" y="245" width="8.5" fill="#00a106"/>
<rect x="1333" y="245" width="16.5" fill="#00a105"/>
<rect x="1349" y="245" width="8.5" fill="#00a104"/>
<rect x="1405" y="245" width="32.5" fill="#00a100"/>
<rect x="1437" y="245" width="8.5" fill="#02a100"/>
<rect x="1445" y="245" width="8.5" fill="#06a100"/>
<rect x="1453" y="245" width="8.5" fill="#0aa100"/>
<rect x="1461" y="245" width="8.5" fill="#0fa100"/>
<rect x="1469" y="245" width="8.5" fill="#15a100"/>
<rect x="1477" y="245" width="8.5" fill="#1ba100"/>
<rect x="1485" y="245" width="8.5" fill="#21a100"/>
<rect x="1493" y="245" width="8.5" fill="#28a100"/>
<rect x="1157" y="253" width="8.5" fill="#00a11c"/>
<rect x="1165" y="253" width="8.5" fill="#00a11b"/>
<rect x="1173" y="253" width="8.5" fill="#00a11a"/>
<rect x="1181" y="253" width="8.5" fill="#00a119"/>
<rect x="1189" y="253" width="16.5" fill="#00a118"/>
<rect x="1205" y="253" width="8.5" fill="#00a117"/>
<rect x="1213" y="253" width="8.5" fill="#00a116"/>
<rect x="1221" y="253" width="8.5" fill="#00a115"/>
<rect x="1229" y="253" width="8.5" fill="#00a114"/>
<rect x="1237" y="253" width="8.5" fill="#00a113"/>
<rect x="1245" y="253" width="8.5" fill="#00a112"/>
<rect x="1253" y="253" width="8.5" fill="#00a111"/>
<rect x="1261" y="253" width="8.5" fill="#00a110"/>
<rect x="1269" y="253" width="8.5" fill="#00a10f"/>
<rect x="1277" y="253" width="8.5" fill="#00a10e"/>
<rect x="1285" y="253" width="8.5" fill="#00a10d"/>
<rect x="1293" y="253" width="8.5" fill="#00a10c"/>
<rect x="1301" y="253" width="8.5" fill="#00a10b"/>
<rect x="1309" y="253" width="8.5" fill="#00a10a"/>
<rect x="1317" y="253" width="8.5" fill="#00a109"/>
<rect x="1325" y="253" width="8.5" fill="#00a108"/>
<rect x="1333" y="253" width="8.5" fill="#00a107"/>
<rect x="1341" y="253" width="8.5" fill="#00a106"/>
<rect x="1413" y="253" width="24.5" fill="#00a100"/>
<rect x="1437" y="253" width="8.5" fill="#03a100"/>
<rect x="1445" y="253" width="8.5" fill="#08a100"/>
<rect x="1453" y="253" width="8.5" fill="#0da100"/>
<rect x="1461" y="253" width="8.5" fill="#12a100"/>
<rect x="1469" y="253" width="8.5" fill="#18a100"/>
<rect x="1477" y="253" width="8.5" fill="#1ea100"/>
<rect x="1485" y="253" width="8.5" fill="#25a100"/>
<rect x="1493" y="253" width="8.5" fill="#2ca100"/>
<rect x="1501" y="253" width="8.5" fill="#33a100"/>
<rect x="1509" y="253" width="8.5" fill="#3ba100"/>
<rect x="1157" y="261" width="8.5" fill="#00a11f"/>
<rect x="1165" y="261" width="8.5" fill="#00a11e"/>
<rect x="1173" y="261" width="8.5" fill="#00a11d"/>
<rect x="1181" y="261" width="8.5" fill="#00a11c"/>
<rect x="1189" y="261" width="8.5" fill="#00a11b"/>
<rect x="1197" y="261" width="8.5" fill="#00a11a"/>
<rect x="1205" y="261" width="8.5" fill="#00a119"/>
<rect x="1213" y="261" width="16.5" fill="#00a118"/>
<rect x="1229" y="261" width="8.5" fill="#00a117"/>
<rect x="1237" y="261" width="8.5" fill="#00a116"/>
<rect x="1245" y="261" width="8.5" fill="#00a115"/>
<rect x="1253" y="261" width="8.5" fill="#00a114"/>
<rect x="1261" y="261" width="8.5" fill="#00a113"/>
<rect x="1269" y="261" width="8.5" fill="#00a112"/>
<rect x="1277" y="261" width="8.5" fill="#00a111"/>
<rect x="1285" y="261" width="8.5" fill="#00a110"/>
<rect x="1293" y="261" width="8.5" fill="#00a10f"/>
<rect x="1301" y="261" width="8.5" fill="#00a10e"/>
<rect x="1309" y="261" width="8.5" fill="#00a10d"/>
<rect x="1317" y="261" width="8.5" fill="#00a10c"/>
<rect x="1325" y="261" width="8.5" fill="#00a10b"/>
<rect x="1333" y="261" width="8.5" fill="#00a10a"/>
<rect x="1341" y="261" width="8.5" fill="#00a109"/>
<rect x="1429" y="261" width="8.5" fill="#01a100"/>
<rect x="1437" y="261" width="8.5" fill="#05a100"/>
<rect x="1445" y="261" width="8.5" fill="#0aa100"/>
<rect x="1453" y="261" width="8.5" fill="#0fa100"/>
<rect x="1461" y="261" width="8.5" fill="#15a100"/>
<rect x="1469" y="261" width="8.5" fill="#1ba100"/>
<rect x="1477" y="261" width="8.5" fill="#22a100"/>
<rect x="1485" y="261" width="8.5" fill="#29a100"/>
<rect x="1493" y="261" width="8.5" fill="#30a100"/>
<rect x="1501" y="261" width="8.5" fill="#38a100"/>
<rect x="1509" y="261" width="8.5" fill="#40a100"/>
<rect x="1517" y="261" width="8.5" fill="#48a100"/>
<rect x="1157" y="269" width="8.5" fill="#00a122"/>
<rect x="1165" y="269" width="8.5" fill="#00a121"/>
<rect x="1173" y="269" width="8.5" fill="#00a120"/>
<rect x="1181" y="269" width="8.5" fill="#00a11f"/>
<rect x="1189" y="269" width="8.5" fill="#00a11e"/>
<rect x="1197" y="269" width="8.5" fill="#00a11d"/>
<rect x="1205" y="269" width="8.5" fill="#00a11c"/>
<rect x="1213" y="269" width="8.5" fill="#00a11b"/>
<rect x="1221" y="269" width="8.5" fill="#00a11a"/>
<rect x="1229" y="269" width="8.5" fill="#00a119"/>
<rect x="1237" y="269" width="8.5" fill="#00a118"/>
<rect x="1245" y="269" width="8.5" fill="#00a117"/>
<rect x="1253" y="269" width="8.5" fill="#00a116"/>
<rect x="1261" y="269" width="8.5" fill="#00a115"/>
<rect x="1269" y="269" width="8.5" fill="#00a114"/>
<rect x="1277" y="269" width="8.5" fill="#00a113"/>
<rect x="1285" y="269" width="8.5" fill="#00a112"/>
<rect x="1293" y="269" width="8.5" fill="#00a111"/>
<rect x="1301" y="269" width="8.5" fill="#00a110"/>
<rect x="1309" y="269" width="8.5" fill="#00a10f"/>
<rect x="1317" y="269" width="8.5" fill="#00a10e"/>
<rect x="1325" y="269" width="8.5" fill="#00a10d"/>
<rect x="1333" y="269" width="8.5" fill="#00a10c"/>
<rect x="1341" y="269" width="8.5" fill="#00a10b"/>
<rect x="1437" y="269" width="8.5" fill="#07a100"/>
<rect x="1445" y="269" width="8.5" fill="#0ca100"/>
<rect x="1453" y="269" width="8.5" fill="#12a100"/>
<rect x="1461" y="269" width="8.5" fill="#18a100"/>
<rect x="1469" y="269" width="8.5" fill="#1fa100"/>
<rect x="1477" y="269" width="8.5" fill="#26a100"/>
<rect x="1485" y="269" width="8.5" fill="#2da100"/>
<rect x="1493" y="269" width="8.5" fill="#35a100"/>
<rect x="1501" y="269" width="8.5" fill="#3da100"/>
<rect x="1509" y="269" width="8.5" fill="#45a100"/>
<rect x="1517" y="269" width="8.5" fill="#4ea100"/>
<rect x="1525" y="269" width="8.5" fill="#58a100"/>
<rect x="1157" y="277" width="8.5" fill="#00a125"/>
<rect x="1165" y="277" width="8.5" fill="#00a124"/>
<rect x="1173" y="277" width="8.5" fill="#00a123"/>
<rect x="1181" y="277" width="8.5" fill="#00a122"/>
<rect x="1189" y="277" width="8.5" fill="#00a121"/>
<rect x="1197" y="277" width="8.5" fill="#00a120"/>
<rect x="1205" y="277" width="8.5" fill="#00a11f"/>
<rect x="1213" y="277" width="8.5" fill="#00a11e"/>
<rect x="1221" y="277" width="8.5" fill="#00a11d"/>
<rect x="1229" y="277" width="8.5" fill="#00a11c"/>
<rect x="1237" y="277" width="8.5" fill="#00a11b"/>
<rect x="1245" y="277" width="8.5" fill="#00a11a"/>
<rect x="1253" y="277" width="8.5" fill="#00a119"/>
<rect x="1261" y="277" width="8.5" fill="#00a118"/>
<rect x="1269" y="277" width="8.5" fill="#00a117"/>
<rect x="1277" y="277" width="8.5" fill="#00a116"/>
<rect x="1285" y="277" width="8.5" fill="#00a115"/>
<rect x="1293" y="277" width="8.5" fill="#00a114"/>
<rect x="1301" y="277" width="8.5" fill="#00a113"/>
<rect x="1309" y="277" width="8.5" fill="#00a112"/>
<rect x="1317" y="277" width="8.5" fill="#00a111"/>
<rect x="1325" y="277" width="8.5" fill="#00a110"/>
<rect x="1333" y="277" width="8.5" fill="#00a10f"/>
<rect x="1341" y="277" width="8.5" fill="#00a10e"/>
<rect x="1453" y="277" width="8.5" fill="#15a100"/>
<rect x="1461" y="277" width="8.5" fill="#1ba100"/>
<rect x="1469" y="277" width="8.5" fill="#22a100"/>
<rect x="1477" y="277" width="8.5" fill="#2aa100"/>
<rect x="1485" y="277" width="8.5" fill="#31a100"/>
<rect x="1493" y="277" width="8.5" fill="#3aa100"/>
<rect x="1501" y="277" width="8.5" fill="#42a100"/>
<rect x="1509" y="277" width="8.5" fill="#4ba100"/>
<rect x="1517" y="277" width="8.5" fill="#55a100"/>
<rect x="1525" y="277" width="8.5" fill="#5fa100"/>
<rect x="1533" y="277" width="8.5" fill="#69a100"/>
<rect x="1541" y="277" width="8.5" fill="#74a100"/>
<rect x="1157" y="285" width="8.5" fill="#00a128"/>
<rect x="1165" y="285" width="8.5" fill="#00a127"/>
<rect x="1173" y="285" width="8.5" fill="#00a126"/>
<rect x="1181" y="285" width="8.5" fill="#00a125"/>
<rect x="1189" y="285" width="8.5" fill="#00a124"/>
<rect x="1197" y="285" width="8.5" fill="#00a123"/>
<rect x="1205" y="285" width="8.5" fill="#00a122"/>
<rect x="1213" y="285" width="8.5" fill="#00a121"/>
<rect x="1221" y="285" width="8.5" fill="#00a120"/>
<rect x="1229" y="285" width="16.5" fill="#00a11f"/>
<rect x="1245" y="285" width="8.5" fill="#00a11e"/>
<rect x="1253" y="285" width="8.5" fill="#00a11c"/>
<rect x="1261" y="285" width="8.5" fill="#00a11b"/>
<rect x="1269" y="285" width="8.5" fill="#00a11a"/>
<rect x="1277" y="285" width="8.5" fill="#00a119"/>
<rect x="1285" y="285" width="8.5" fill="#00a118"/>
<rect x="1293" y="285" width="8.5" fill="#00a117"/>
<rect x="1301" y="285" width="8.5" fill="#00a116"/>
<rect x="1309" y="285" width="8.5" fill="#00a115"/>
<rect x="1317" y="285" width="8.5" fill="#00a114"/>
<rect x="1325" y="285" width="8.5" fill="#00a113"/>
<rect x="1333" y="285" width="8.5" fill="#00a112"/>
<rect x="1341" y="285" width="8.5" fill="#00a111"/>
<rect x="1469" y="285" width="8.5" fill="#26a100"/>
<rect x="1477" y="285" width="8.5" fill="#2ea100"/>
<rect x="1485" y="285" width="8.5" fill="#36a100"/>
<rect x="1493" y="285" width="8.5" fill="#3fa100"/>
<rect x="1501" y="285" width="8.5" fill="#48a100"/>
<rect x="1509" y="285" width="8.5" fill="#52a100"/>
<rect x="1517" y="285" width="8.5" fill="#5ca100"/>
<rect x="1525" y="285" width="8.5" fill="#66a100"/>
<rect x="1533" y="285" width="8.5" fill="#71a100"/>
<rect x="1541" y="285" width="8.5" fill="#7da100"/>
<rect x="1549" y="285" width="8.5" fill="#89a100"/>
<rect x="1157" y="293" width="8.5" fill="#00a12b"/>
<rect x="1165" y="293" width="8.5" fill="#00a12a"/>
<rect x="1173" y="293" width="16.5" fill="#00a129"/>
<rect x="1189" y="293" width="8.5" fill="#00a128"/>
<rect x="1197" y="293" width="8.5" fill="#00a127"/>
<rect x="1205" y="293" width="8.5" fill="#00a126"/>
<rect x="1213" y="293" width="8.5" fill="#00a125"/>
<rect x="1221" y="293" width="8.5" fill="#00a124"/>
<rect x="1229" y="293" width="8.5" fill="#00a123"/>
<rect x="1237" y="293" width="8.5" fill="#00a122"/>
<rect x="1245" y="293" width="8.5" fill="#00a121"/>
<rect x="1253" y="293" width="8.5" fill="#00a120"/>
<rect x="1261" y="293" width="8.5" fill="#00a11f"/>
<rect x="1269" y="293" width="8.5" fill="#00a11e"/>
<rect x="1277" y="293" width="8.5" fill="#00a11d"/>
<rect x="1285" y="293" width="8.5" fill="#00a11c"/>
<rect x="1293" y="293" width="8.5" fill="#00a11b"/>
<rect x="1301" y="293" width="8.5" fill="#00a119"/>
<rect x="1309" y="293" width="8.5" fill="#00a118"/>
<rect x="1317" y="293" width="8.5" fill="#00a117"/>
<rect x="1325" y="293" width="8.5" fill="#00a116"/>
<rect x="1333" y="293" width="8.5" fill="#00a115"/>
<rect x="1341" y="293" width="8.5" fill="#00a114"/>
<rect x="1477" y="293" width="8.5" fill="#33a100"/>
<rect x="1485" y="293" width="8.5" fill="#3ca100"/>
<rect x="1493" y="293" width="8.5" fill="#45a100"/>
<rect x="1501" y="293" width="8.5" fill="#4fa100"/>
<rect x="1509" y="293" width="8.5" fill="#59a100"/>
<rect x="1517" y="293" width="8.5" fill="#63a100"/>
<rect x="1525" y="293" width="8.5" fill="#6fa100"/>
<rect x="1533" y="293" width="8.5" fill="#7aa100"/>
<rect x="1541" y="293" width="8.5" fill="#86a100"/>
<rect x="1549" y="293" width="8.5" fill="#93a100"/>
<rect x="1557" y="293" width="8.5" fill="#a0a100"/>
<rect x="1565" y="293" width="8.5" fill="#a19400"/>
<rect x="1157" y="301" width="8.5" fill="#00a12f"/>
<rect x="1165" y="301" width="8.5" fill="#00a12e"/>
<rect x="1173" y="301" width="8.5" fill="#00a12d"/>
<rect x="1181" y="301" width="8.5" fill="#00a12c"/>
<rect x="1189" y="301" width="8.5" fill="#00a12b"/>
<rect x="1197" y="301" width="8.5" fill="#00a12a"/>
<rect x="1205" y="301" width="8.5" fill="#00a129"/>
<rect x="1213" y="301" width="8.5" fill="#00a128"/>
<rect x="1221" y="301" width="8.5" fill="#00a127"/>
<rect x="1229" y="301" width="8.5" fill="#00a126"/>
<rect x="1237" y="301" width="8.5" fill="#00a125"/>
<rect x="1245" y="301" width="8.5" fill="#00a124"/>
<rect x="1253" y="301" width="8.5" fill="#00a123"/>
<rect x="1261" y="301" width="8.5" fill="#00a122"/>
<rect x="1269" y="301" width="8.5" fill="#00a121"/>
<rect x="1277" y="301" width="8.5" fill="#00a120"/>
<rect x="1285" y="301" width="8.5" fill="#00a11f"/>
<rect x="1293" y="301" width="8.5" fill="#00a11e"/>
<rect x="1301" y="301" width="8.5" fill="#00a11d"/>
<rect x="1309" y="301" width="8.5" fill="#00a11c"/>
<rect x="1317" y="301" width="8.5" fill="#00a11b"/>
<rect x="1325" y="301" width="8.5" fill="#00a119"/>
<rect x="1333" y="301" width="8.5" fill="#00a118"/>
<rect x="1341" y="301" width="8.5" fill="#00a117"/>
<rect x="1493" y="301" width="8.5" fill="#4ca100"/>
<rect x="1501" y="301" width="8.5" fill="#56a100"/>
<rect x="1509" y="301" width="8.5" fill="#61a100"/>
<rect x="1517" y="301" width="8.5" fill="#6ca100"/>
<rect x="1525" y="301" width="8.5" fill="#78a100"/>
<rect x="1533" y="301" width="8.5" fill="#84a100"/>
<rect x="1541" y="301" width="8.5" fill="#91a100"/>
<rect x="1549" y="301" width="8.5" fill="#9ea100"/>
<rect x="1557" y="301" width="8.5" fill="#a19500"/>
<rect x="1565" y="301" width="8.5" fill="#a18a00"/>
<rect x="1573" y="301" width="8.5" fill="#a17f00"/>
<rect x="1157" y="309" width="8.5" fill="#00a133"/>
<rect x="1165" y="309" width="8.5" fill="#00a132"/>
<rect x="1173" y="309" width="8.5" fill="#00a131"/>
<rect x="1181" y="309" width="8.5" fill="#00a130"/>
<rect x="1189" y="309" width="8.5" fill="#00a12f"/>
<rect x="1197" y="309" width="8.5" fill="#00a12e"/>
<rect x="1205" y="309" width="8.5" fill="#00a12d"/>
<rect x="1213" y="309" width="8.5" fill="#00a12c"/>
<rect x="1221" y="309" width="8.5" fill="#00a12b"/>
<rect x="1229" y="309" width="8.5" fill="#00a12a"/>
<rect x="1237" y="309" width="8.5" fill="#00a129"/>
<rect x="1245" y="309" width="8.5" fill="#00a128"/>
<rect x="1253" y="309" width="8.5" fill="#00a127"/>
<rect x="1261" y="309" width="8.5" fill="#00a126"/>
<rect x="1269" y="309" width="8.5" fill="#00a125"/>
<rect x="1277" y="309" width="8.5" fill="#00a124"/>
<rect x="1285" y="309" width="8.5" fill="#00a123"/>
<rect x="1293" y="309" width="8.5" fill="#00a122"/>
<rect x="1301" y="309" width="8.5" fill="#00a121"/>
<rect x="1309" y="309" width="8.5" fill="#00a120"/>
<rect x="1317" y="309" width="8.5" fill="#00a11e"/>
<rect x="1325" y="309" width="8.5" fill="#00a11d"/>
<rect x="1333" y="309" width="8.5" fill="#00a11c"/>
<rect x="1341" y="309" width="8.5" fill="#00a11b"/>
<rect x="1501" y="309" width="8.5" fill="#5da100"/>
<rect x="1509" y="309" width="8.5" fill="#69a100"/>
<rect x="1517" y="309" width="8.5" fill="#75a100"/>
<rect x="1525" y="309" width="8.5" fill="#81a100"/>
<rect x="1533" y="309" width="8.5" fill="#8fa100"/>
<rect x="1541" y="309" width="8.5" fill="#9ca100"/>
<rect x="1549" y="309" width="8.5" fill="#a19700"/>
<rect x="1557" y="309" width="8.5" fill="#a18b00"/>
<rect x="1565" y="309" width="8.5" fill="#a18000"/>
<rect x="1573" y="309" width="8.5" fill="#a17600"/>
<rect x="1581" y="309" width="8.5" fill="#a16d00"/>
<rect x="1589" y="309" width="8.5" fill="#a16500"/>
<rect x="1157" y="317" width="8.5" fill="#00a137"/>
<rect x="1165" y="317" width="8.5" fill="#00a136"/>
<rect x="1173" y="317" width="8.5" fill="#00a135"/>
<rect x="1181" y="317" width="8.5" fill="#00a134"/>
<rect x="1189" y="317" width="8.5" fill="#00a133"/>
<rect x="1197" y="317" width="8.5" fill="#00a132"/>
<rect x="1205" y="317" width="8.5" fill="#00a131"/>
<rect x="1213" y="317" width="8.5" fill="#00a130"/>
<rect x="1221" y="317" width="8.5" fill="#00a12f"/>
<rect x="1229" y="317" width="8.5" fill="#00a12e"/>
<rect x="1237" y="317" width="8.5" fill="#00a12d"/>
<rect x="1245" y="317" width="8.5" fill="#00a12c"/>
<rect x="1253" y="317" width="8.5" fill="#00a12b"/>
<rect x="1261" y="317" width="8.5" fill="#00a12a"/>
<rect x="1269" y="317" width="8.5" fill="#00a129"/>
<rect x="1277" y="317" width="8.5" fill="#00a128"/>
<rect x="1285" y="317" width="8.5" fill="#00a127"/>
<rect x="1293" y="317" width="8.5" fill="#00a126"/>
<rect x="1301" y="317" width="8.5" fill="#00a125"/>
<rect x="1309" y="317" width="8.5" fill="#00a124"/>
<rect x="1317" y="317" width="8.5" fill="#00a122"/>
<rect x="1325" y="317" width="8.5" fill="#00a121"/>
<rect x="1333" y="317" width="8.5" fill="#00a120"/>
<rect x="1517" y="317" width="8.5" fill="#7fa100"/>
<rect x="1525" y="317" width="8.5" fill="#8ca100"/>
<rect x="1533" y="317" width="8.5" fill="#9aa100"/>
<rect x="1541" y="317" width="8.5" fill="#a19900"/>
<rect x="1549" y="317" width="8.5" fill="#a18c00"/>
<rect x="1557" y="317" width="8.5" fill="#a18000"/>
<rect x="1565" y="317" width="8.5" fill="#a17600"/>
<rect x="1573" y="317" width="8.5" fill="#a16d00"/>
<rect x="1581" y="317" width="8.5" fill="#a16500"/>
<rect x="1589" y="317" width="8.5" fill="#a15e00"/>
<rect x="1597" y="317" width="8.5" fill="#a15700"/>
<rect x="1165" y="325" width="8.5" fill="#00a13a"/>
<rect x="1173" y="325" width="8.5" fill="#00a139"/>
<rect x="1181" y="325" width="16.5" fill="#00a138"/>
<rect x="1197" y="325" width="8.5" fill="#00a137"/>
<rect x="1205" y="325" width="8.5" fill="#00a136"/>
<rect x="1213" y="325" width="8.5" fill="#00a135"/>
<rect x="1221" y="325" width="8.5" fill="#00a134"/>
<rect x="1229" y="325" width="8.5" fill="#00a133"/>
<rect x="1237" y="325" width="8.5" fill="#00a132"/>
<rect x="1245" y="325" width="8.5" fill="#00a131"/>
<rect x="1253" y="325" width="8.5" fill="#00a130"/>
<rect x="1261" y="325" width="8.5" fill="#00a12f"/>
<rect x="1269" y="325" width="8.5" fill="#00a12e"/>
<rect x="1277" y="325" width="8.5" fill="#00a12d"/>
<rect x="1285" y="325" width="8.5" fill="#00a12b"/>
<rect x="1293" y="325" width="8.5" fill="#00a12a"/>
<rect x="1301" y="325" width="8.5" fill="#00a129"/>
<rect x="1309" y="325" width="8.5" fill="#00a128"/>
<rect x="1317" y="325" width="8.5" fill="#00a127"/>
<rect x="1325" y="325" width="8.5" fill="#00a126"/>
<rect x="1333" y="325" width="8.5" fill="#00a124"/>
<rect x="1533" y="325" width="8.5" fill="#a19a00"/>
<rect x="1541" y="325" width="8.5" fill="#a18d00"/>
<rect x="1549" y="325" width="8.5" fill="#a18100"/>
<rect x="1557" y="325" width="8.5" fill="#a17700"/>
<rect x="1565" y="325" width="8.5" fill="#a16d00"/>
<rect x="1573" y="325" width="8.5" fill="#a16500"/>
<rect x="1581" y="325" width="8.5" fill="#a15e00"/>
<rect x="1589" y="325" width="8.5" fill="#a15700"/>
<rect x="1597" y="325" width="8.5" fill="#a15100"/>
<rect x="1605" y="325" width="8.5" fill="#a14b00"/>
<rect x="1613" y="325" width="8.5" fill="#a14600"/>
<rect x="1165" y="333" width="8.5" fill="#00a13f"/>
<rect x="1173" y="333" width="8.5" fill="#00a13e"/>
<rect x="1181" y="333" width="8.5" fill="#00a13d"/>
<rect x="1189" y="333" width="8.5" fill="#00a13c"/>
<rect x="1197" y="333" width="8.5" fill="#00a13b"/>
<rect x="1205" y="333" width="8.5" fill="#00a13a"/>
<rect x="1213" y="333" width="8.5" fill="#00a139"/>
<rect x="1221" y="333" width="16.5" fill="#00a138"/>
<rect x="1237" y="333" width="8.5" fill="#00a137"/>
<rect x="1245" y="333" width="8.5" fill="#00a135"/>
<rect x="1253" y="333" width="8.5" fill="#00a134"/>
<rect x="1261" y="333" width="8.5" fill="#00a133"/>
<rect x="1269" y="333" width="8.5" fill="#00a132"/>
<rect x="1277" y="333" width="8.5" fill="#00a131"/>
<rect x="1285" y="333" width="8.5" fill="#00a130"/>
<rect x="1293" y="333" width="8.5" fill="#00a12f"/>
<rect x="1301" y="333" width="8.5" fill="#00a12e"/>
<rect x="1309" y="333" width="8.5" fill="#00a12d"/>
<rect x="1317" y="333" width="8.5" fill="#00a12b"/>
<rect x="1325" y="333" width="8.5" fill="#00a12a"/>
<rect x="1333" y="333" width="8.5" fill="#00a129"/>
<rect x="1541" y="333" width="8.5" fill="#a18200"/>
<rect x="1549" y="333" width="8.5" fill="#a17700"/>
<rect x="1557" y="333" width="8.5" fill="#a16d00"/>
<rect x="1565" y="333" width="8.5" fill="#a16500"/>
<rect x="1573" y="333" width="8.5" fill="#a15d00"/>
<rect x="1581" y="333" width="8.5" fill="#a15600"/>
<rect x="1589" y="333" width="8.5" fill="#a15000"/>
<rect x="1597" y="333" width="8.5" fill="#a14a00"/>
<rect x="1605" y="333" width="8.5" fill="#a14500"/>
<rect x="1613" y="333" width="8.5" fill="#a14100"/>
<rect x="1621" y="333" width="8.5" fill="#a13c00"/>
<rect x="1165" y="341" width="8.5" fill="#00a144"/>
<rect x="1173" y="341" width="8.5" fill="#00a143"/>
<rect x="1181" y="341" width="8.5" fill="#00a142"/>
<rect x="1189" y="341" width="8.5" fill="#00a141"/>
<rect x="1197" y="341" width="8.5" fill="#00a140"/>
<rect x="1205" y="341" width="8.5" fill="#00a13f"/>
<rect x="1213" y="341" width="16.5" fill="#00a13e"/>
<rect x="1229" y="341" width="8.5" fill="#00a13d"/>
<rect x="1237" y="341" width="8.5" fill="#00a13c"/>
<rect x="1245" y="341" width="8.5" fill="#00a13b"/>
<rect x="1253" y="341" width="8.5" fill="#00a13a"/>
<rect x="1261" y="341" width="8.5" fill="#00a138"/>
<rect x="1269" y="341" width="8.5" fill="#00a137"/>
<rect x="1277" y="341" width="8.5" fill="#00a136"/>
<rect x="1285" y="341" width="8.5" fill="#00a135"/>
<rect x="1293" y="341" width="8.5" fill="#00a134"/>
<rect x="1301" y="341" width="8.5" fill="#00a133"/>
<rect x="1309" y="341" width="8.5" fill="#00a132"/>
<rect x="1317" y="341" width="8.5" fill="#00a131"/>
<rect x="1325" y="341" width="8.5" fill="#00a12f"/>
<rect x="1333" y="341" width="8.5" fill="#00a12e"/>
<rect x="1557" y="341" width="8.5" fill="#a16500"/>
<rect x="1565" y="341" width="8.5" fill="#a15d00"/>
<rect x="1573" y="341" width="8.5" fill="#a15600"/>
<rect x="1581" y="341" width="8.5" fill="#a14f00"/>
<rect x="1589" y="341" width="8.5" fill="#a14a00"/>
<rect x="1597" y="341" width="8.5" fill="#a14400"/>
<rect x="1605" y="341" width="8.5" fill="#a14000"/>
<rect x="1613" y="341" width="8.5" fill="#a13b00"/>
<rect x="1621" y="341" width="8.5" fill="#a13700"/>
<rect x="1629" y="341" width="8.5" fill="#a13300"/>
<rect x="1165" y="349" width="8.5" fill="#00a149"/>
<rect x="1173" y="349" width="8.5" fill="#00a148"/>
<rect x="1181" y="349" width="16.5" fill="#00a147"/>
<rect x="1197" y="349" width="8.5" fill="#00a146"/>
<rect x="1205" y="349" width="8.5" fill="#00a145"/>
<rect x="1213" y="349" width="8.5" fill="#00a144"/>
<rect x="1221" y="349" width="8.5" fill="#00a143"/>
<rect x="1229" y="349" width="8.5" fill="#00a142"/>
<rect x="1237" y="349" width="8.5" fill="#00a141"/>
<rect x="1245" y="349" width="8.5" fill="#00a140"/>
<rect x="1253" y="349" width="8.5" fill="#00a13f"/>
<rect x="1261" y="349" width="8.5" fill="#00a13e"/>
<rect x="1269" y="349" width="8.5" fill="#00a13d"/>
<rect x="1277" y="349" width="8.5" fill="#00a13c"/>
<rect x="1285" y="349" width="8.5" fill="#00a13b"/>
<rect x="1293" y="349" width="8.5" fill="#00a13a"/>
<rect x="1301" y="349" width="8.5" fill="#00a139"/>
<rect x="1309" y="349" width="8.5" fill="#00a137"/>
<rect x="1317" y="349" width="8.5" fill="#00a136"/>
<rect x="1325" y="349" width="8.5" fill="#00a135"/>
<rect x="1333" y="349" width="8.5" fill="#00a134"/>
<rect x="1573" y="349" width="8.5" fill="#a14f00"/>
<rect x="1581" y="349" width="8.5" fill="#a14900"/>
<rect x="1589" y="349" width="8.5" fill="#a14400"/>
<rect x="1597" y="349" width="8.5" fill="#a13f00"/>
<rect x="1605" y="349" width="8.5" fill="#a13a00"/>
<rect x="1613" y="349" width="8.5" fill="#a13600"/>
<rect x="1621" y="349" width="8.5" fill="#a13200"/>
<rect x="1629" y="349" width="8.5" fill="#a12f00"/>
<rect x="1637" y="349" width="8.5" fill="#a12c00"/>
<rect x="1645" y="349" width="8.5" fill="#a12900"/>
<rect x="1165" y="357" width="8.5" fill="#00a14f"/>
<rect x="1173" y="357" width="8.5" fill="#00a14e"/>
<rect x="1181" y="357" width="8.5" fill="#00a14d"/>
<rect x="1189" y="357" width="8.5" fill="#00a14c"/>
<rect x="1197" y="357" width="8.5" fill="#00a14b"/>
<rect x="1205" y="357" width="16.5" fill="#00a14a"/>
<rect x="1221" y="357" width="8.5" fill="#00a149"/>
<rect x="1229" y="357" width="8.5" fill="#00a148"/>
<rect x="1237" y="357" width="8.5" fill="#00a147"/>
<rect x="1245" y="357" width="8.5" fill="#00a146"/>
<rect x="1253" y="357" width="8.5" fill="#00a145"/>
<rect x="1261" y="357" width="8.5" fill="#00a144"/>
<rect x="1269" y="357" width="8.5" fill="#00a143"/>
<rect x="1277" y="357" width="8.5" fill="#00a142"/>
<rect x="1285" y="357" width="8.5" fill="#00a141"/>
<rect x="1293" y="357" width="8.5" fill="#00a140"/>
<rect x="1301" y="357" width="8.5" fill="#00a13f"/>
<rect x="1309" y="357" width="8.5" fill="#00a13d"/>
<rect x="1317" y="357" width="8.5" fill="#00a13c"/>
<rect x="1325" y="357" width="8.5" fill="#00a13b"/>
<rect x="1333" y="357" width="8.5" fill="#00a13a"/>
<rect x="1581" y="357" width="8.5" fill="#a14301"/>
<rect x="1589" y="357" width="8.5" fill="#a13e00"/>
<rect x="1597" y="357" width="8.5" fill="#a13900"/>
<rect x="1605" y="357" width="8.5" fill="#a13500"/>
<rect x="1613" y="357" width="8.5" fill="#a13100"/>
<rect x="1621" y="357" width="8.5" fill="#a12e00"/>
<rect x="1629" y="357" width="8.5" fill="#a12b00"/>
<rect x="1637" y="357" width="8.5" fill="#a12800"/>
<rect x="1645" y="357" width="8.5" fill="#a12500"/>
<rect x="1653" y="357" width="8.5" fill="#a12200"/>
<rect x="1165" y="365" width="8.5" fill="#00a155"/>
<rect x="1173" y="365" width="8.5" fill="#00a154"/>
<rect x="1181" y="365" width="8.5" fill="#00a153"/>
<rect x="1189" y="365" width="8.5" fill="#00a152"/>
<rect x="1197" y="365" width="16.5" fill="#00a151"/>
<rect x="1213" y="365" width="8.5" fill="#00a150"/>
<rect x="1221" y="365" width="8.5" fill="#00a14f"/>
<rect x="1229" y="365" width="8.5" fill="#00a14e"/>
<rect x="1237" y="365" width="8.5" fill="#00a14d"/>
<rect x="1245" y="365" width="8.5" fill="#00a14c"/>
<rect x="1253" y="365" width="8.5" fill="#00a14b"/>
<rect x="1261" y="365" width="8.5" fill="#00a14a"/>
<rect x="1269" y="365" width="8.5" fill="#00a149"/>
<rect x="1277" y="365" width="8.5" fill="#00a148"/>
<rect x="1285" y="365" width="8.5" fill="#00a147"/>
<rect x="1293" y="365" width="8.5" fill="#00a146"/>
<rect x="1301" y="365" width="8.5" fill="#00a145"/>
<rect x="1309" y="365" width="8.5" fill="#00a144"/>
<rect x="1317" y="365" width="8.5" fill="#00a143"/>
<rect x="1325" y="365" width="8.5" fill="#00a142"/>
<rect x="1333" y="365" width="8.5" fill="#00a140"/>
<rect x="1597" y="365" width="8.5" fill="#a13400"/>
<rect x="1605" y="365" width="8.5" fill="#a13000"/>
<rect x="1613" y="365" width="8.5" fill="#a12d00"/>
<rect x="1621" y="365" width="8.5" fill="#a12900"/>
<rect x="1629" y="365" width="8.5" fill="#a12600"/>
<rect x="1637" y="365" width="8.5" fill="#a12400"/>
<rect x="1645" y="365" width="8.5" fill="#a12100"/>
<rect x="1653" y="365" width="8.5" fill="#a11f00"/>
<rect x="1661" y="365" width="8.5" fill="#a11d00"/>
<rect x="1669" y="365" width="8.5" fill="#a11a00"/>
<rect x="1173" y="373" width="16.5" fill="#00a15a"/>
<rect x="1189" y="373" width="8.5" fill="#00a159"/>
<rect x="1197" y="373" width="8.5" fill="#00a158"/>
<rect x="1205" y="373" width="8.5" fill="#00a157"/>
<rect x="1213" y="373" width="16.5" fill="#00a156"/>
<rect x="1229" y="373" width="8.5" fill="#00a155"/>
<rect x="1237" y="373" width="8.5" fill="#00a154"/>
<rect x="1245" y="373" width="8.5" fill="#00a153"/>
<rect x="1253" y="373" width="8.5" fill="#00a152"/>
<rect x="1261" y="373" width="8.5" fill="#00a151"/>
<rect x="1269" y="373" width="8.5" fill="#00a150"/>
<rect x="1277" y="373" width="8.5" fill="#00a14f"/>
<rect x="1285" y="373" width="8.5" fill="#00a14e"/>
<rect x="1293" y="373" width="8.5" fill="#00a14d"/>
<rect x="1301" y="373" width="8.5" fill="#00a14c"/>
<rect x="1309" y="373" width="8.5" fill="#00a14b"/>
<rect x="1317" y="373" width="8.5" fill="#00a14a"/>
<rect x="1325" y="373" width="8.5" fill="#00a149"/>
<rect x="1605" y="373" width="8.5" fill="#a12b01"/>
<rect x="1613" y="373" width="8.5" fill="#a12800"/>
<rect x="1621" y="373" width="8.5" fill="#a12500"/>
<rect x="1629" y="373" width="8.5" fill="#a12200"/>
<rect x="1637" y="373" width="8.5" fill="#a12000"/>
<rect x="1645" y="373" width="8.5" fill="#a11e00"/>
<rect x="1653" y="373" width="8.5" fill="#a11b00"/>
<rect x="1661" y="373" width="8.5" fill="#a11900"/>
<rect x="1669" y="373" width="8.5" fill="#a11700"/>
<rect x="1677" y="373" width="8.5" fill="#a11600"/>
<rect x="1173" y="381" width="16.5" fill="#00a161"/>
<rect x="1189" y="381" width="8.5" fill="#00a160"/>
<rect x="1197" y="381" width="8.5" fill="#00a15f"/>
<rect x="1205" y="381" width="16.5" fill="#00a15e"/>
<rect x="1221" y="381" width="8.5" fill="#00a15d"/>
<rect x="1229" y="381" width="8.5" fill="#00a15c"/>
<rect x="1237" y="381" width="8.5" fill="#00a15b"/>
<rect x="1245" y="381" width="16.5" fill="#00a15a"/>
<rect x="1261" y="381" width="8.5" fill="#00a159"/>
<rect x="1269" y="381" width="8.5" fill="#00a158"/>
<rect x="1277" y="381" width="8.5" fill="#00a157"/>
<rect x="1285" y="381" width="8.5" fill="#00a156"/>
<rect x="1293" y="381" width="8.5" fill="#00a155"/>
<rect x="1301" y="381" width="8.5" fill="#00a154"/>
<rect x="1309" y="381" width="8.5" fill="#00a153"/>
<rect x="1317" y="381" width="8.5" fill="#00a152"/>
<rect x="1325" y="381" width="8.5" fill="#00a151"/>
<rect x="1621" y="381" width="8.5" fill="#a12101"/>
<rect x="1629" y="381" width="8.5" fill="#a11f00"/>
<rect x="1637" y="381" width="8.5" fill="#a11c00"/>
<rect x="1645" y="381" width="8.5" fill="#a11a00"/>
<rect x="1653" y="381" width="8.5" fill="#a11800"/>
<rect x="1661" y="381" width="8.5" fill="#a11600"/>
<rect x="1669" y="381" width="8.5" fill="#a11400"/>
<rect x="1677" y="381" width="8.5" fill="#a11300"/>
<rect x="1685" y="381" width="8.5" fill="#a11100"/>
<rect x="1693" y="381" width="8.5" fill="#a11000"/>
<rect x="1173" y="389" width="8.5" fill="#00a169"/>
<rect x="1181" y="389" width="8.5" fill="#00a168"/>
<rect x="1189" y="389" width="16.5" fill="#00a167"/>
<rect x="1205" y="389" width="8.5" fill="#00a166"/>
<rect x="1213" y="389" width="16.5" fill="#00a165"/>
<rect x="1229" y="389" width="8.5" fill="#00a164"/>
<rect x="1237" y="389" width="8.5" fill="#00a163"/>
<rect x="1245" y="389" width="16.5" fill="#00a162"/>
<rect x="1261" y="389" width="8.5" fill="#00a161"/>
<rect x="1269" y="389" width="8.5" fill="#00a160"/>
<rect x="1277" y="389" width="8.5" fill="#00a15f"/>
<rect x="1285" y="389" width="8.5" fill="#00a15e"/>
<rect x="1293" y="389" width="8.5" fill="#00a15d"/>
<rect x="1301" y="389" width="16.5" fill="#00a15c"/>
<rect x="1317" y="389" width="8.5" fill="#00a15b"/>
<rect x="1325" y="389" width="8.5" fill="#00a15a"/>
<rect x="1637" y="389" width="8.5" fill="#a11901"/>
<rect x="1645" y="389" width="8.5" fill="#a11700"/>
<rect x="1653" y="389" width="8.5" fill="#a11500"/>
<rect x="1661" y="389" width="8.5" fill="#a11300"/>
<rect x="1669" y="389" width="8.5" fill="#a11200"/>
<rect x="1677" y="389" width="8.5" fill="#a11000"/>
<rect x="1685" y="389" width="8.5" fill="#a10f00"/>
<rect x="1693" y="389" width="8.5" fill="#a10d00"/>
<rect x="1701" y="389" width="8.5" fill="#a10c00"/>
<rect x="1173" y="397" width="8.5" fill="#00a171"/>
<rect x="1181" y="397" width="16.5" fill="#00a170"/>
<rect x="1197" y="397" width="8.5" fill="#00a16f"/>
<rect x="1205" y="397" width="16.5" fill="#00a16e"/>
<rect x="1221" y="397" width="16.5" fill="#00a16d"/>
<rect x="1237" y="397" width="8.5" fill="#00a16c"/>
<rect x="1245" y="397" width="8.5" fill="#00a16b"/>
<rect x="1253" y="397" width="16.5" fill="#00a16a"/>
<rect x="1269" y="397" width="8.5" fill="#00a169"/>
<rect x="1277" y="397" width="8.5" fill="#00a168"/>
<rect x="1285" y="397" width="16.5" fill="#00a167"/>
<rect x="1301" y="397" width="8.5" fill="#00a166"/>
<rect x="1309" y="397" width="8.5" fill="#00a165"/>
<rect x="1317" y="397" width="8.5" fill="#00a164"/>
<rect x="1325" y="397" width="8.5" fill="#00a163"/>
<rect x="1645" y="397" width="8.5" fill="#a11401"/>
<rect x="1653" y="397" width="8.5" fill="#a11200"/>
<rect x="1661" y="397" width="8.5" fill="#a11000"/>
<rect x="1669" y="397" width="8.5" fill="#a10f00"/>
<rect x="1677" y="397" width="8.5" fill="#a10e00"/>
<rect x="1685" y="397" width="8.5" fill="#a10c00"/>
<rect x="1693" y="397" width="8.5" fill="#a10b00"/>
<rect x="1701" y="397" width="8.5" fill="#a10a00"/>
<rect x="1709" y="397" width="8.5" fill="#a10900"/>
<rect x="1181" y="405" width="8.5" fill="#00a179"/>
<rect x="1189" y="405" width="16.5" fill="#00a178"/>
<rect x="1205" y="405" width="16.5" fill="#00a177"/>
<rect x="1221" y="405" width="16.5" fill="#00a176"/>
<rect x="1237" y="405" width="16.5" fill="#00a175"/>
<rect x="1253" y="405" width="8.5" fill="#00a174"/>
<rect x="1261" y="405" width="16.5" fill="#00a173"/>
<rect x="1277" y="405" width="16.5" fill="#00a172"/>
<rect x="1293" y="405" width="8.5" fill="#00a171"/>
<rect x="1301" y="405" width="8.5" fill="#00a170"/>
<rect x="1309" y="405" width="16.5" fill="#00a16f"/>
<rect x="1325" y="405" width="8.5" fill="#00a16e"/>
<rect x="1661" y="405" width="8.5" fill="#a10e01"/>
<rect x="1669" y="405" width="8.5" fill="#a10c00"/>
<rect x="1677" y="405" width="8.5" fill="#a10b00"/>
<rect x="1685" y="405" width="8.5" fill="#a10a00"/>
<rect x="1693" y="405" width="8.5" fill="#a10900"/>
<rect x="1701" y="405" width="8.5" fill="#a10800"/>
<rect x="1709" y="405" width="8.5" fill="#a10700"/>
<rect x="1717" y="405" width="8.5" fill="#a10600"/>
<rect x="1725" y="405" width="8.5" fill="#a10500"/>
<rect x="1181" y="413" width="24.5" fill="#00a182"/>
<rect x="1205" y="413" width="16.5" fill="#00a181"/>
<rect x="1221" y="413" width="24.5" fill="#00a180"/>
<rect x="1245" y="413" width="16.5" fill="#00a17f"/>
<rect x="1261" y="413" width="16.5" fill="#00a17e"/>
<rect x="1277" y="413" width="16.5" fill="#00a17d"/>
<rect x="1293" y="413" width="8.5" fill="#00a17c"/>
<rect x="1301" y="413" width="16.5" fill="#00a17b"/>
<rect x="1317" y="413" width="16.5" fill="#00a17a"/>
<rect x="1677" y="413" width="8.5" fill="#a10901"/>
<rect x="1685" y="413" width="8.5" fill="#a10800"/>
<rect x="1693" y="413" width="8.5" fill="#a10700"/>
<rect x="1701" y="413" width="8.5" fill="#a10600"/>
<rect x="1709" y="413" width="8.5" fill="#a10500"/>
<rect x="1717" y="413" width="8.5" fill="#a10400"/>
<rect x="1725" y="413" width="16.5" fill="#a10300"/>
<rect x="1181" y="421" width="8.5" fill="#00a18d"/>
<rect x="1189" y="421" width="32.5" fill="#00a18c"/>
<rect x="1221" y="421" width="32.5" fill="#00a18b"/>
<rect x="1253" y="421" width="24.5" fill="#00a18a"/>
<rect x="1277" y="421" width="16.5" fill="#00a189"/>
<rect x="1293" y="421" width="24.5" fill="#00a188"/>
<rect x="1317" y="421" width="16.5" fill="#00a187"/>
<rect x="1685" y="421" width="8.5" fill="#a10601"/>
<rect x="1693" y="421" width="8.5" fill="#a10500"/>
<rect x="1701" y="421" width="8.5" fill="#a10400"/>
<rect x="1709" y="421" width="16.5" fill="#a10300"/>
<rect x="1725" y="421" width="8.5" fill="#a10200"/>
<rect x="1733" y="421" width="16.5" fill="#a10100"/>
<rect x="1749" y="421" width="8.5" fill="#a10000"/>
<rect x="1181" y="429" width="40.5" fill="#00a198"/>
<rect x="1221" y="429" width="64.5" fill="#00a197"/>
<rect x="1285" y="429" width="48.5" fill="#00a196"/>
<rect x="1701" y="429" width="8.5" fill="#a10201"/>
<rect x="1709" y="429" width="8.5" fill="#a10200"/>
<rect x="1717" y="429" width="16.5" fill="#a10100"/>
<rect x="1733" y="429" width="32.5" fill="#a10000"/>
<rect x="1189" y="437" width="56.5" fill="#009da1"/>
<rect x="1245" y="437" width="72.5" fill="#009ca1"/>
<rect x="1317" y="437" width="8.5" fill="#009ba1"/>
<rect x="1685" y="437" width="8.5" fill="#a10203"/>
<rect x="1693" y="437" width="16.5" fill="#a10102"/>
<rect x="1709" y="437" width="16.5" fill="#a10001"/>
<rect x="1725" y="437" width="56.5" fill="#a10000"/>
<rect x="1189" y="445" width="24.5" fill="#0091a1"/>
<rect x="1213" y="445" width="24.5" fill="#0090a1"/>
<rect x="1237" y="445" width="32.5" fill="#008fa1"/>
<rect x="1269" y="445" width="24.5" fill="#008ea1"/>
<rect x="1293" y="445" width="16.5" fill="#008da1"/>
<rect x="1309" y="445" width="16.5" fill="#008ca1"/>
<rect x="1669" y="445" width="8.5" fill="#a10206"/>
<rect x="1677" y="445" width="8.5" fill="#a10105"/>
<rect x="1685" y="445" width="8.5" fill="#a10104"/>
<rect x="1693" y="445" width="8.5" fill="#a10004"/>
<rect x="1701" y="445" width="8.5" fill="#a10003"/>
<rect x="1709" y="445" width="16.5" fill="#a10002"/>
<rect x="1725" y="445" width="16.5" fill="#a10001"/>
<rect x="1741" y="445" width="48.5" fill="#a10000"/>
<rect x="1189" y="453" width="8.5" fill="#0086a1"/>
<rect x="1197" y="453" width="24.5" fill="#0085a1"/>
<rect x="1221" y="453" width="16.5" fill="#0084a1"/>
<rect x="1237" y="453" width="16.5" fill="#0083a1"/>
<rect x="1253" y="453" width="16.5" fill="#0082a1"/>
<rect x="1269" y="453" width="16.5" fill="#0081a1"/>
<rect x="1285" y="453" width="16.5" fill="#0080a1"/>
<rect x="1301" y="453" width="8.5" fill="#007fa1"/>
<rect x="1309" y="453" width="16.5" fill="#007ea1"/>
<rect x="1645" y="453" width="8.5" fill="#a1020b"/>
<rect x="1653" y="453" width="8.5" fill="#a10109"/>
<rect x="1661" y="453" width="8.5" fill="#a10108"/>
<rect x="1669" y="453" width="8.5" fill="#a10007"/>
<rect x="1677" y="453" width="16.5" fill="#a10006"/>
<rect x="1693" y="453" width="8.5" fill="#a10005"/>
<rect x="1701" y="453" width="8.5" fill="#a10004"/>
<rect x="1709" y="453" width="16.5" fill="#a10003"/>
<rect x="1725" y="453" width="8.5" fill="#a10002"/>
<rect x="1733" y="453" width="16.5" fill="#a10001"/>
<rect x="1749" y="453" width="56.5" fill="#a10000"/>
<rect x="1197" y="461" width="8.5" fill="#007ba1"/>
<rect x="1205" y="461" width="16.5" fill="#007aa1"/>
<rect x="1221" y="461" width="8.5" fill="#0079a1"/>
<rect x="1229" y="461" width="16.5" fill="#0078a1"/>
<rect x="1245" y="461" width="16.5" fill="#0077a1"/>
<rect x="1261" y="461" width="8.5" fill="#0076a1"/>
<rect x="1269" y="461" width="16.5" fill="#0075a1"/>
<rect x="1285" y="461" width="8.5" fill="#0074a1"/>
<rect x="1293" y="461" width="8.5" fill="#0073a1"/>
<rect x="1301" y="461" width="8.5" fill="#0072a1"/>
<rect x="1309" y="461" width="16.5" fill="#0071a1"/>
<rect x="1621" y="461" width="8.5" fill="#a10310"/>
<rect x="1629" y="461" width="8.5" fill="#a1020f"/>
<rect x="1637" y="461" width="8.5" fill="#a1010d"/>
<rect x="1645" y="461" width="8.5" fill="#a1010c"/>
<rect x="1653" y="461" width="8.5" fill="#a1000b"/>
<rect x="1661" y="461" width="8.5" fill="#a1000a"/>
<rect x="1669" y="461" width="8.5" fill="#a10009"/>
<rect x="1677" y="461" width="8.5" fill="#a10008"/>
<rect x="1685" y="461" width="8.5" fill="#a10007"/>
<rect x="1693" y="461" width="8.5" fill="#a10006"/>
<rect x="1701" y="461" width="8.5" fill="#a10005"/>
<rect x="1709" y="461" width="16.5" fill="#a10004"/>
<rect x="1725" y="461" width="8.5" fill="#a10003"/>
<rect x="1733" y="461" width="16.5" fill="#a10002"/>
<rect x="1749" y="461" width="16.5" fill="#a10001"/>
<rect x="1765" y="461" width="48.5" fill="#a10000"/>
<rect x="1197" y="469" width="8.5" fill="#0071a1"/>
<rect x="1205" y="469" width="8.5" fill="#0070a1"/>
<rect x="1213" y="469" width="16.5" fill="#006fa1"/>
<rect x="1229" y="469" width="8.5" fill="#006ea1"/>
<rect x="1237" y="469" width="8.5" fill="#006da1"/>
<rect x="1245" y="469" width="16.5" fill="#006ca1"/>
<rect x="1261" y="469" width="8.5" fill="#006ba1"/>
<rect x="1269" y="469" width="8.5" fill="#006aa1"/>
<rect x="1277" y="469" width="8.5" fill="#0069a1"/>
<rect x="1285" y="469" width="8.5" fill="#0068a1"/>
<rect x="1293" y="469" width="16.5" fill="#0067a1"/>
<rect x="1309" y="469" width="8.5" fill="#0066a1"/>
<rect x="1317" y="469" width="8.5" fill="#0065a1"/>
<rect x="1605" y="469" width="8.5" fill="#a10216"/>
<rect x="1613" y="469" width="8.5" fill="#a10214"/>
<rect x="1621" y="469" width="8.5" fill="#a10112"/>
<rect x="1629" y="469" width="8.5" fill="#a10010"/>
<rect x="1637" y="469" width="8.5" fill="#a1000f"/>
<rect x="1645" y="469" width="8.5" fill="#a1000e"/>
<rect x="1653" y="469" width="8.5" fill="#a1000c"/>
<rect x="1661" y="469" width="8.5" fill="#a1000b"/>
<rect x="1669" y="469" width="8.5" fill="#a1000a"/>
<rect x="1677" y="469" width="8.5" fill="#a10009"/>
<rect x="1685" y="469" width="8.5" fill="#a10008"/>
<rect x="1693" y="469" width="8.5" fill="#a10007"/>
<rect x="1701" y="469" width="8.5" fill="#a10006"/>
<rect x="1709" y="469" width="16.5" fill="#a10005"/>
<rect x="1725" y="469" width="8.5" fill="#a10004"/>
<rect x="1733" y="469" width="16.5" fill="#a10003"/>
<rect x="1749" y="469" width="16.5" fill="#a10002"/>
<rect x="1765" y="469" width="16.5" fill="#a10001"/>
<rect x="1781" y="469" width="40.5" fill="#a10000"/>
<rect x="1197" y="477" width="16.5" fill="#0067a1"/>
<rect x="1213" y="477" width="8.5" fill="#0066a1"/>
<rect x="1221" y="477" width="8.5" fill="#0065a1"/>
<rect x="1229" y="477" width="8.5" fill="#0064a1"/>
<rect x="1237" y="477" width="8.5" fill="#0063a1"/>
<rect x="1245" y="477" width="16.5" fill="#0062a1"/>
<rect x="1261" y="477" width="8.5" fill="#0061a1"/>
<rect x="1269" y="477" width="8.5" fill="#0060a1"/>
<rect x="1277" y="477" width="8.5" fill="#005fa1"/>
<rect x="1285" y="477" width="8.5" fill="#005ea1"/>
<rect x="1293" y="477" width="8.5" fill="#005da1"/>
<rect x="1301" y="477" width="8.5" fill="#005ca1"/>
<rect x="1309" y="477" width="8.5" fill="#005ba1"/>
<rect x="1317" y="477" width="8.5" fill="#0059a1"/>
<rect x="1581" y="477" width="8.5" fill="#a1031e"/>
<rect x="1589" y="477" width="8.5" fill="#a1021c"/>
<rect x="1597" y="477" width="8.5" fill="#a10119"/>
<rect x="1605" y="477" width="8.5" fill="#a10017"/>
<rect x="1613" y="477" width="8.5" fill="#a10015"/>
<rect x="1621" y="477" width="8.5" fill="#a10014"/>
<rect x="1629" y="477" width="8.5" fill="#a10012"/>
<rect x="1637" y="477" width="8.5" fill="#a10011"/>
<rect x="1645" y="477" width="8.5" fill="#a1000f"/>
<rect x="1653" y="477" width="8.5" fill="#a1000e"/>
<rect x="1661" y="477" width="8.5" fill="#a1000c"/>
<rect x="1669" y="477" width="8.5" fill="#a1000b"/>
<rect x="1677" y="477" width="8.5" fill="#a1000a"/>
<rect x="1685" y="477" width="8.5" fill="#a10009"/>
<rect x="1693" y="477" width="8.5" fill="#a10008"/>
<rect x="1701" y="477" width="8.5" fill="#a10007"/>
<rect x="1709" y="477" width="16.5" fill="#a10006"/>
<rect x="1725" y="477" width="8.5" fill="#a10005"/>
<rect x="1733" y="477" width="16.5" fill="#a10004"/>
<rect x="1749" y="477" width="8.5" fill="#a10003"/>
<rect x="1757" y="477" width="16.5" fill="#a10002"/>
<rect x="1773" y="477" width="24.5" fill="#a10001"/>
<rect x="1797" y="477" width="40.5" fill="#a10000"/>
<rect x="1205" y="485" width="8.5" fill="#005ea1"/>
<rect x="1213" y="485" width="8.5" fill="#005da1"/>
<rect x="1221" y="485" width="8.5" fill="#005ca1"/>
<rect x="1229" y="485" width="8.5" fill="#005ba1"/>
<rect x="1237" y="485" width="8.5" fill="#005aa1"/>
<rect x="1245" y="485" width="8.5" fill="#0059a1"/>
<rect x="1253" y="485" width="8.5" fill="#0058a1"/>
<rect x="1261" y="485" width="8.5" fill="#0057a1"/>
<rect x="1269" y="485" width="8.5" fill="#0056a1"/>
<rect x="1277" y="485" width="8.5" fill="#0055a1"/>
<rect x="1285" y="485" width="8.5" fill="#0054a1"/>
<rect x="1293" y="485" width="8.5" fill="#0053a1"/>
<rect x="1301" y="485" width="8.5" fill="#0052a1"/>
<rect x="1309" y="485" width="8.5" fill="#0050a1"/>
<rect x="1317" y="485" width="8.5" fill="#004fa1"/>
<rect x="1565" y="485" width="8.5" fill="#a10325"/>
<rect x="1573" y="485" width="8.5" fill="#a10223"/>
<rect x="1581" y="485" width="8.5" fill="#a10120"/>
<rect x="1589" y="485" width="8.5" fill="#a1001d"/>
<rect x="1597" y="485" width="8.5" fill="#a1001b"/>
<rect x="1605" y="485" width="8.5" fill="#a10019"/>
<rect x="1613" y="485" width="8.5" fill="#a10017"/>
<rect x="1621" y="485" width="8.5" fill="#a10015"/>
<rect x="1629" y="485" width="8.5" fill="#a10014"/>
<rect x="1637" y="485" width="8.5" fill="#a10012"/>
<rect x="1645" y="485" width="8.5" fill="#a10011"/>
<rect x="1653" y="485" width="8.5" fill="#a1000f"/>
<rect x="1661" y="485" width="8.5" fill="#a1000e"/>
<rect x="1669" y="485" width="8.5" fill="#a1000d"/>
<rect x="1677" y="485" width="8.5" fill="#a1000b"/>
<rect x="1685" y="485" width="8.5" fill="#a1000a"/>
<rect x="1693" y="485" width="8.5" fill="#a10009"/>
<rect x="1701" y="485" width="16.5" fill="#a10008"/>
<rect x="1717" y="485" width="8.5" fill="#a10007"/>
<rect x="1725" y="485" width="8.5" fill="#a10006"/>
<rect x="1733" y="485" width="16.5" fill="#a10005"/>
<rect x="1749" y="485" width="8.5" fill="#a10004"/>
<rect x="1757" y="485" width="16.5" fill="#a10003"/>
<rect x="1773" y="485" width="16.5" fill="#a10002"/>
<rect x="1789" y="485" width="16.5" fill="#a10001"/>
<rect x="1805" y="485" width="8.5" fill="#a10000"/>
<rect x="1205" y="493" width="8.5" fill="#0055a1"/>
<rect x="1213" y="493" width="8.5" fill="#0054a1"/>
<rect x="1221" y="493" width="8.5" fill="#0053a1"/>
<rect x="1229" y="493" width="8.5" fill="#0052a1"/>
<rect x="1237" y="493" width="8.5" fill="#0051a1"/>
<rect x="1245" y="493" width="8.5" fill="#0050a1"/>
<rect x="1253" y="493" width="8.5" fill="#004fa1"/>
<rect x="1261" y="493" width="8.5" fill="#004ea1"/>
<rect x="1269" y="493" width="8.5" fill="#004da1"/>
<rect x="1277" y="493" width="8.5" fill="#004ca1"/>
<rect x="1285" y="493" width="8.5" fill="#004ba1"/>
<rect x="1293" y="493" width="8.5" fill="#0049a1"/>
<rect x="1301" y="493" width="8.5" fill="#0048a1"/>
<rect x="1309" y="493" width="8.5" fill="#0047a1"/>
<rect x="1317" y="493" width="8.5" fill="#0046a1"/>
<rect x="1541" y="493" width="8.5" fill="#a10332"/>
<rect x="1549" y="493" width="8.5" fill="#a1022e"/>
<rect x="1557" y="493" width="8.5" fill="#a1012a"/>
<rect x="1565" y="493" width="8.5" fill="#a10027"/>
<rect x="1573" y="493" width="8.5" fill="#a10024"/>
<rect x="1581" y="493" width="8.5" fill="#a10022"/>
<rect x="1589" y="493" width="8.5" fill="#a1001f"/>
<rect x="1597" y="493" width="8.5" fill="#a1001d"/>
<rect x="1605" y="493" width="8.5" fill="#a1001b"/>
<rect x="1613" y="493" width="8.5" fill="#a10019"/>
<rect x="1621" y="493" width="8.5" fill="#a10017"/>
<rect x="1629" y="493" width="8.5" fill="#a10015"/>
<rect x="1637" y="493" width="8.5" fill="#a10013"/>
<rect x="1645" y="493" width="8.5" fill="#a10012"/>
<rect x="1653" y="493" width="8.5" fill="#a10011"/>
<rect x="1661" y="493" width="8.5" fill="#a1000f"/>
<rect x="1669" y="493" width="8.5" fill="#a1000e"/>
<rect x="1677" y="493" width="8.5" fill="#a1000d"/>
<rect x="1685" y="493" width="8.5" fill="#a1000c"/>
<rect x="1693" y="493" width="8.5" fill="#a1000b"/>
<rect x="1701" y="493" width="8.5" fill="#a1000a"/>
<rect x="1709" y="493" width="8.5" fill="#a10009"/>
<rect x="1717" y="493" width="8.5" fill="#a10008"/>
<rect x="1725" y="493" width="8.5" fill="#a10007"/>
<rect x="1733" y="493" width="8.5" fill="#a10006"/>
<rect x="1741" y="493" width="16.5" fill="#a10005"/>
<rect x="1757" y="493" width="16.5" fill="#a10004"/>
<rect x="1773" y="493" width="8.5" fill="#a10003"/>
<rect x="1781" y="493" width="8.5" fill="#a10002"/>
<rect x="1205" y="501" width="8.5" fill="#004da1"/>
<rect x="1213" y="501" width="8.5" fill="#004ca1"/>
<rect x="1221" y="501" width="8.5" fill="#004ba1"/>
<rect x="1229" y="501" width="8.5" fill="#004aa1"/>
<rect x="1237" y="501" width="8.5" fill="#0049a1"/>
<rect x="1245" y="501" width="8.5" fill="#0048a1"/>
<rect x="1253" y="501" width="8.5" fill="#0047a1"/>
<rect x="1261" y="501" width="8.5" fill="#0046a1"/>
<rect x="1269" y="501" width="8.5" fill="#0045a1"/>
<rect x="1277" y="501" width="8.5" fill="#0043a1"/>
<rect x="1285" y="501" width="8.5" fill="#0042a1"/>
<rect x="1293" y="501" width="8.5" fill="#0041a1"/>
<rect x="1301" y="501" width="8.5" fill="#0040a1"/>
<rect x="1309" y="501" width="8.5" fill="#003ea1"/>
<rect x="1525" y="501" width="8.5" fill="#a1033c"/>
<rect x="1533" y="501" width="8.5" fill="#a10238"/>
<rect x="1541" y="501" width="8.5" fill="#a10134"/>
<rect x="1549" y="501" width="8.5" fill="#a10030"/>
<rect x="1557" y="501" width="8.5" fill="#a1002c"/>
<rect x="1565" y="501" width="8.5" fill="#a10029"/>
<rect x="1573" y="501" width="8.5" fill="#a10026"/>
<rect x="1581" y="501" width="8.5" fill="#a10023"/>
<rect x="1589" y="501" width="8.5" fill="#a10021"/>
<rect x="1597" y="501" width="8.5" fill="#a1001f"/>
<rect x="1605" y="501" width="8.5" fill="#a1001c"/>
<rect x="1613" y="501" width="8.5" fill="#a1001a"/>
<rect x="1621" y="501" width="8.5" fill="#a10018"/>
<rect x="1629" y="501" width="8.5" fill="#a10017"/>
<rect x="1637" y="501" width="8.5" fill="#a10015"/>
<rect x="1645" y="501" width="8.5" fill="#a10013"/>
<rect x="1653" y="501" width="8.5" fill="#a10012"/>
<rect x="1661" y="501" width="8.5" fill="#a10011"/>
<rect x="1669" y="501" width="8.5" fill="#a1000f"/>
<rect x="1677" y="501" width="8.5" fill="#a1000e"/>
<rect x="1685" y="501" width="8.5" fill="#a1000d"/>
<rect x="1693" y="501" width="8.5" fill="#a1000c"/>
<rect x="1701" y="501" width="8.5" fill="#a1000b"/>
<rect x="1709" y="501" width="8.5" fill="#a1000a"/>
<rect x="1717" y="501" width="8.5" fill="#a10009"/>
<rect x="1725" y="501" width="8.5" fill="#a10008"/>
<rect x="1733" y="501" width="8.5" fill="#a10007"/>
<rect x="1741" y="501" width="16.5" fill="#a10006"/>
<rect x="1757" y="501" width="8.5" fill="#a10005"/>
<rect x="1213" y="509" width="8.5" fill="#0045a1"/>
<rect x="1221" y="509" width="8.5" fill="#0044a1"/>
<rect x="1229" y="509" width="8.5" fill="#0043a1"/>
<rect x="1237" y="509" width="8.5" fill="#0042a1"/>
<rect x="1245" y="509" width="8.5" fill="#0040a1"/>
<rect x="1253" y="509" width="8.5" fill="#003fa1"/>
<rect x="1261" y="509" width="8.5" fill="#003ea1"/>
<rect x="1269" y="509" width="8.5" fill="#003da1"/>
<rect x="1277" y="509" width="8.5" fill="#003ba1"/>
<rect x="1285" y="509" width="8.5" fill="#003aa1"/>
<rect x="1293" y="509" width="8.5" fill="#0039a1"/>
<rect x="1301" y="509" width="8.5" fill="#0037a1"/>
<rect x="1309" y="509" width="8.5" fill="#0036a1"/>
<rect x="1501" y="509" width="8.5" fill="#a1044f"/>
<rect x="1509" y="509" width="8.5" fill="#a10249"/>
<rect x="1517" y="509" width="8.5" fill="#a10144"/>
<rect x="1525" y="509" width="8.5" fill="#a1003f"/>
<rect x="1533" y="509" width="8.5" fill="#a1003a"/>
<rect x="1541" y="509" width="8.5" fill="#a10036"/>
<rect x="1549" y="509" width="8.5" fill="#a10032"/>
<rect x="1557" y="509" width="8.5" fill="#a1002e"/>
<rect x="1565" y="509" width="8.5" fill="#a1002b"/>
<rect x="1573" y="509" width="8.5" fill="#a10028"/>
<rect x="1581" y="509" width="8.5" fill="#a10025"/>
<rect x="1589" y="509" width="8.5" fill="#a10023"/>
<rect x="1597" y="509" width="8.5" fill="#a10020"/>
<rect x="1605" y="509" width="8.5" fill="#a1001e"/>
<rect x="1613" y="509" width="8.5" fill="#a1001c"/>
<rect x="1621" y="509" width="8.5" fill="#a1001a"/>
<rect x="1629" y="509" width="8.5" fill="#a10018"/>
<rect x="1637" y="509" width="8.5" fill="#a10016"/>
<rect x="1645" y="509" width="8.5" fill="#a10015"/>
<rect x="1653" y="509" width="8.5" fill="#a10013"/>
<rect x="1661" y="509" width="8.5" fill="#a10012"/>
<rect x="1669" y="509" width="8.5" fill="#a10011"/>
<rect x="1677" y="509" width="8.5" fill="#a1000f"/>
<rect x="1685" y="509" width="8.5" fill="#a1000e"/>
<rect x="1693" y="509" width="8.5" fill="#a1000d"/>
<rect x="1701" y="509" width="8.5" fill="#a1000c"/>
<rect x="1709" y="509" width="8.5" fill="#a1000b"/>
<rect x="1717" y="509" width="8.5" fill="#a1000a"/>
<rect x="1725" y="509" width="8.5" fill="#a10009"/>
<rect x="1733" y="509" width="8.5" fill="#a10008"/>
<rect x="1213" y="517" width="8.5" fill="#003ea1"/>
<rect x="1221" y="517" width="8.5" fill="#003da1"/>
<rect x="1229" y="517" width="8.5" fill="#003ca1"/>
<rect x="1237" y="517" width="8.5" fill="#003aa1"/>
<rect x="1245" y="517" width="8.5" fill="#0039a1"/>
<rect x="1253" y="517" width="8.5" fill="#0038a1"/>
<rect x="1261" y="517" width="8.5" fill="#0037a1"/>
<rect x="1269" y="517" width="8.5" fill="#0035a1"/>
<rect x="1277" y="517" width="8.5" fill="#0034a1"/>
<rect x="1285" y="517" width="8.5" fill="#0033a1"/>
<rect x="1293" y="517" width="8.5" fill="#0031a1"/>
<rect x="1301" y="517" width="8.5" fill="#0030a1"/>
<rect x="1309" y="517" width="8.5" fill="#002fa1"/>
<rect x="1477" y="517" width="8.5" fill="#a10568"/>
<rect x="1485" y="517" width="8.5" fill="#a10360"/>
<rect x="1493" y="517" width="8.5" fill="#a10258"/>
<rect x="1501" y="517" width="8.5" fill="#a10151"/>
<rect x="1509" y="517" width="8.5" fill="#a1004b"/>
<rect x="1517" y="517" width="8.5" fill="#a10046"/>
<rect x="1525" y="517" width="8.5" fill="#a10040"/>
<rect x="1533" y="517" width="8.5" fill="#a1003c"/>
<rect x="1541" y="517" width="8.5" fill="#a10038"/>
<rect x="1549" y="517" width="8.5" fill="#a10034"/>
<rect x="1557" y="517" width="8.5" fill="#a10030"/>
<rect x="1565" y="517" width="8.5" fill="#a1002d"/>
<rect x="1573" y="517" width="8.5" fill="#a1002a"/>
<rect x="1581" y="517" width="8.5" fill="#a10027"/>
<rect x="1589" y="517" width="8.5" fill="#a10024"/>
<rect x="1597" y="517" width="8.5" fill="#a10022"/>
<rect x="1605" y="517" width="8.5" fill="#a10020"/>
<rect x="1613" y="517" width="8.5" fill="#a1001d"/>
<rect x="1621" y="517" width="8.5" fill="#a1001b"/>
<rect x="1629" y="517" width="8.5" fill="#a1001a"/>
<rect x="1637" y="517" width="8.5" fill="#a10018"/>
<rect x="1645" y="517" width="8.5" fill="#a10016"/>
<rect x="1653" y="517" width="8.5" fill="#a10015"/>
<rect x="1661" y="517" width="8.5" fill="#a10013"/>
<rect x="1669" y="517" width="8.5" fill="#a10012"/>
<rect x="1677" y="517" width="8.5" fill="#a10011"/>
<rect x="1685" y="517" width="8.5" fill="#a1000f"/>
<rect x="1693" y="517" width="8.5" fill="#a1000e"/>
<rect x="1701" y="517" width="8.5" fill="#a1000d"/>
<rect x="1213" y="525" width="8.5" fill="#0037a1"/>
<rect x="1221" y="525" width="8.5" fill="#0036a1"/>
<rect x="1229" y="525" width="8.5" fill="#0035a1"/>
<rect x="1237" y="525" width="8.5" fill="#0034a1"/>
<rect x="1245" y="525" width="8.5" fill="#0032a1"/>
<rect x="1253" y="525" width="8.5" fill="#0031a1"/>
<rect x="1261" y="525" width="8.5" fill="#0030a1"/>
<rect x="1269" y="525" width="8.5" fill="#002fa1"/>
<rect x="1277" y="525" width="8.5" fill="#002da1"/>
<rect x="1285" y="525" width="8.5" fill="#002ca1"/>
<rect x="1293" y="525" width="8.5" fill="#002ba1"/>
<rect x="1301" y="525" width="8.5" fill="#0029a1"/>
<rect x="1309" y="525" width="8.5" fill="#0028a1"/>
<rect x="1461" y="525" width="8.5" fill="#a1057f"/>
<rect x="1469" y="525" width="8.5" fill="#a10374"/>
<rect x="1477" y="525" width="8.5" fill="#a1016a"/>
<rect x="1485" y="525" width="8.5" fill="#a10062"/>
<rect x="1493" y="525" width="8.5" fill="#a1005a"/>
<rect x="1501" y="525" width="8.5" fill="#a10053"/>
<rect x="1509" y="525" width="8.5" fill="#a1004d"/>
<rect x="1517" y="525" width="8.5" fill="#a10048"/>
<rect x="1525" y="525" width="8.5" fill="#a10042"/>
<rect x="1533" y="525" width="8.5" fill="#a1003e"/>
<rect x="1541" y="525" width="8.5" fill="#a10039"/>
<rect x="1549" y="525" width="8.5" fill="#a10036"/>
<rect x="1557" y="525" width="8.5" fill="#a10032"/>
<rect x="1565" y="525" width="8.5" fill="#a1002f"/>
<rect x="1573" y="525" width="8.5" fill="#a1002c"/>
<rect x="1581" y="525" width="8.5" fill="#a10029"/>
<rect x="1589" y="525" width="8.5" fill="#a10026"/>
<rect x="1597" y="525" width="8.5" fill="#a10023"/>
<rect x="1605" y="525" width="8.5" fill="#a10021"/>
<rect x="1613" y="525" width="8.5" fill="#a1001f"/>
<rect x="1621" y="525" width="8.5" fill="#a1001d"/>
<rect x="1629" y="525" width="8.5" fill="#a1001b"/>
<rect x="1637" y="525" width="8.5" fill="#a10019"/>
<rect x="1645" y="525" width="8.5" fill="#a10018"/>
<rect x="1653" y="525" width="8.5" fill="#a10016"/>
<rect x="1661" y="525" width="8.5" fill="#a10015"/>
<rect x="1669" y="525" width="8.5" fill="#a10013"/>
<rect x="1677" y="525" width="8.5" fill="#a10012"/>
<rect x="1221" y="533" width="8.5" fill="#0030a1"/>
<rect x="1229" y="533" width="8.5" fill="#002fa1"/>
<rect x="1237" y="533" width="8.5" fill="#002da1"/>
<rect x="1245" y="533" width="8.5" fill="#002ca1"/>
<rect x="1253" y="533" width="8.5" fill="#002ba1"/>
<rect x="1261" y="533" width="8.5" fill="#002aa1"/>
<rect x="1269" y="533" width="8.5" fill="#0028a1"/>
<rect x="1277" y="533" width="8.5" fill="#0027a1"/>
<rect x="1285" y="533" width="8.5" fill="#0026a1"/>
<rect x="1293" y="533" width="8.5" fill="#0024a1"/>
<rect x="1301" y="533" width="8.5" fill="#0023a1"/>
<rect x="1309" y="533" width="8.5" fill="#0021a1"/>
<rect x="1437" y="533" width="8.5" fill="#9706a1"/>
<rect x="1445" y="533" width="8.5" fill="#a1049a"/>
<rect x="1453" y="533" width="8.5" fill="#a1028c"/>
<rect x="1461" y="533" width="8.5" fill="#a10180"/>
<rect x="1469" y="533" width="8.5" fill="#a10076"/>
<rect x="1477" y="533" width="8.5" fill="#a1006c"/>
<rect x="1485" y="533" width="8.5" fill="#a10064"/>
<rect x="1493" y="533" width="8.5" fill="#a1005c"/>
<rect x="1501" y="533" width="8.5" fill="#a10055"/>
<rect x="1509" y="533" width="8.5" fill="#a1004f"/>
<rect x="1517" y="533" width="8.5" fill="#a10049"/>
<rect x="1525" y="533" width="8.5" fill="#a10044"/>
<rect x="1533" y="533" width="8.5" fill="#a10040"/>
<rect x="1541" y="533" width="8.5" fill="#a1003b"/>
<rect x="1549" y="533" width="8.5" fill="#a10037"/>
<rect x="1557" y="533" width="8.5" fill="#a10034"/>
<rect x="1565" y="533" width="8.5" fill="#a10030"/>
<rect x="1573" y="533" width="8.5" fill="#a1002d"/>
<rect x="1581" y="533" width="8.5" fill="#a1002a"/>
<rect x="1589" y="533" width="8.5" fill="#a10028"/>
<rect x="1597" y="533" width="8.5" fill="#a10025"/>
<rect x="1605" y="533" width="8.5" fill="#a10023"/>
<rect x="1613" y="533" width="8.5" fill="#a10021"/>
<rect x="1621" y="533" width="8.5" fill="#a1001e"/>
<rect x="1629" y="533" width="8.5" fill="#a1001d"/>
<rect x="1637" y="533" width="8.5" fill="#a1001b"/>
<rect x="1645" y="533" width="8.5" fill="#a10019"/>
<rect x="1653" y="533" width="8.5" fill="#a10017"/>
<rect x="1221" y="541" width="8.5" fill="#002aa1"/>
<rect x="1229" y="541" width="8.5" fill="#0029a1"/>
<rect x="1237" y="541" width="8.5" fill="#0028a1"/>
<rect x="1245" y="541" width="8.5" fill="#0026a1"/>
<rect x="1253" y="541" width="8.5" fill="#0025a1"/>
<rect x="1261" y="541" width="8.5" fill="#0024a1"/>
<rect x="1269" y="541" width="8.5" fill="#0022a1"/>
<rect x="1277" y="541" width="8.5" fill="#0021a1"/>
<rect x="1285" y="541" width="8.5" fill="#0020a1"/>
<rect x="1293" y="541" width="8.5" fill="#001ea1"/>
<rect x="1301" y="541" width="8.5" fill="#001da1"/>
<rect x="1309" y="541" width="8.5" fill="#001ba1"/>
<rect x="1421" y="541" width="8.5" fill="#7b05a1"/>
<rect x="1429" y="541" width="8.5" fill="#8803a1"/>
<rect x="1437" y="541" width="8.5" fill="#9702a1"/>
<rect x="1445" y="541" width="8.5" fill="#a1009c"/>
<rect x="1453" y="541" width="8.5" fill="#a1008e"/>
<rect x="1461" y="541" width="8.5" fill="#a10082"/>
<rect x="1469" y="541" width="8.5" fill="#a10077"/>
<rect x="1477" y="541" width="8.5" fill="#a1006e"/>
<rect x="1485" y="541" width="8.5" fill="#a10065"/>
<rect x="1493" y="541" width="8.5" fill="#a1005e"/>
<rect x="1501" y="541" width="8.5" fill="#a10057"/>
<rect x="1509" y="541" width="8.5" fill="#a10051"/>
<rect x="1517" y="541" width="8.5" fill="#a1004b"/>
<rect x="1525" y="541" width="8.5" fill="#a10046"/>
<rect x="1533" y="541" width="8.5" fill="#a10041"/>
<rect x="1541" y="541" width="8.5" fill="#a1003d"/>
<rect x="1549" y="541" width="8.5" fill="#a10039"/>
<rect x="1557" y="541" width="8.5" fill="#a10035"/>
<rect x="1565" y="541" width="8.5" fill="#a10032"/>
<rect x="1573" y="541" width="8.5" fill="#a1002f"/>
<rect x="1581" y="541" width="8.5" fill="#a1002c"/>
<rect x="1589" y="541" width="8.5" fill="#a10029"/>
<rect x="1597" y="541" width="8.5" fill="#a10027"/>
<rect x="1605" y="541" width="8.5" fill="#a10024"/>
<rect x="1613" y="541" width="8.5" fill="#a10022"/>
<rect x="1621" y="541" width="8.5" fill="#a10020"/>
<rect x="1629" y="541" width="8.5" fill="#a1001e"/>
<rect x="1229" y="549" width="8.5" fill="#0023a1"/>
<rect x="1237" y="549" width="8.5" fill="#0022a1"/>
<rect x="1245" y="549" width="8.5" fill="#0021a1"/>
<rect x="1253" y="549" width="8.5" fill="#001fa1"/>
<rect x="1261" y="549" width="8.5" fill="#001ea1"/>
<rect x="1269" y="549" width="8.5" fill="#001da1"/>
<rect x="1277" y="549" width="8.5" fill="#001ba1"/>
<rect x="1285" y="549" width="8.5" fill="#001aa1"/>
<rect x="1293" y="549" width="8.5" fill="#0019a1"/>
<rect x="1301" y="549" width="8.5" fill="#0017a1"/>
<rect x="1309" y="549" width="8.5" fill="#0016a1"/>
<rect x="1397" y="549" width="8.5" fill="#5605a1"/>
<rect x="1405" y="549" width="8.5" fill="#6203a1"/>
<rect x="1413" y="549" width="8.5" fill="#6e02a1"/>
<rect x="1421" y="549" width="8.5" fill="#7b01a1"/>
<rect x="1429" y="549" width="8.5" fill="#8800a1"/>
<rect x="1437" y="549" width="8.5" fill="#9600a1"/>
<rect x="1445" y="549" width="8.5" fill="#a1009d"/>
<rect x="1453" y="549" width="8.5" fill="#a1008f"/>
<rect x="1461" y="549" width="8.5" fill="#a10083"/>
<rect x="1469" y="549" width="8.5" fill="#a10079"/>
<rect x="1477" y="549" width="8.5" fill="#a10070"/>
<rect x="1485" y="549" width="8.5" fill="#a10067"/>
<rect x="1493" y="549" width="8.5" fill="#a10060"/>
<rect x="1501" y="549" width="8.5" fill="#a10059"/>
<rect x="1509" y="549" width="8.5" fill="#a10053"/>
<rect x="1517" y="549" width="8.5" fill="#a1004d"/>
<rect x="1525" y="549" width="8.5" fill="#a10048"/>
<rect x="1533" y="549" width="8.5" fill="#a10043"/>
<rect x="1541" y="549" width="8.5" fill="#a1003f"/>
<rect x="1549" y="549" width="8.5" fill="#a1003b"/>
<rect x="1557" y="549" width="8.5" fill="#a10037"/>
<rect x="1565" y="549" width="8.5" fill="#a10034"/>
<rect x="1573" y="549" width="8.5" fill="#a10031"/>
<rect x="1581" y="549" width="8.5" fill="#a1002e"/>
<rect x="1589" y="549" width="8.5" fill="#a1002b"/>
<rect x="1597" y="549" width="8.5" fill="#a10028"/>
<rect x="1605" y="549" width="8.5" fill="#a10026"/>
<rect x="1229" y="557" width="8.5" fill="#001ea1"/>
<rect x="1237" y="557" width="8.5" fill="#001da1"/>
<rect x="1245" y="557" width="8.5" fill="#001ca1"/>
<rect x="1253" y="557" width="8.5" fill="#001aa1"/>
<rect x="1261" y="557" width="8.5" fill="#0019a1"/>
<rect x="1269" y="557" width="8.5" fill="#0018a1"/>
<rect x="1277" y="557" width="8.5" fill="#0016a1"/>
<rect x="1285" y="557" width="8.5" fill="#0015a1"/>
<rect x="1293" y="557" width="8.5" fill="#0014a1"/>
<rect x="1301" y="557" width="8.5" fill="#0012a1"/>
<rect x="1373" y="557" width="8.5" fill="#3905a1"/>
<rect x="1381" y="557" width="8.5" fill="#4204a1"/>
<rect x="1389" y="557" width="8.5" fill="#4d02a1"/>
<rect x="1397" y="557" width="8.5" fill="#5701a1"/>
<rect x="1405" y="557" width="8.5" fill="#6300a1"/>
<rect x="1413" y="557" width="8.5" fill="#6e00a1"/>
<rect x="1421" y="557" width="8.5" fill="#7b00a1"/>
<rect x="1429" y="557" width="8.5" fill="#8800a1"/>
<rect x="1437" y="557" width="8.5" fill="#9500a1"/>
<rect x="1445" y="557" width="8.5" fill="#a1009e"/>
<rect x="1453" y="557" width="8.5" fill="#a10090"/>
<rect x="1461" y="557" width="8.5" fill="#a10085"/>
<rect x="1469" y="557" width="8.5" fill="#a1007a"/>
<rect x="1477" y="557" width="8.5" fill="#a10071"/>
<rect x="1485" y="557" width="8.5" fill="#a10069"/>
<rect x="1493" y="557" width="8.5" fill="#a10061"/>
<rect x="1501" y="557" width="8.5" fill="#a1005b"/>
<rect x="1509" y="557" width="8.5" fill="#a10054"/>
<rect x="1517" y="557" width="8.5" fill="#a1004f"/>
<rect x="1525" y="557" width="8.5" fill="#a1004a"/>
<rect x="1533" y="557" width="8.5" fill="#a10045"/>
<rect x="1541" y="557" width="8.5" fill="#a10041"/>
<rect x="1549" y="557" width="8.5" fill="#a1003d"/>
<rect x="1557" y="557" width="8.5" fill="#a10039"/>
<rect x="1565" y="557" width="8.5" fill="#a10035"/>
<rect x="1573" y="557" width="8.5" fill="#a10032"/>
<rect x="1581" y="557" width="8.5" fill="#a1002f"/>
<rect x="1237" y="565" width="8.5" fill="#0018a1"/>
<rect x="1245" y="565" width="8.5" fill="#0017a1"/>
<rect x="1253" y="565" width="8.5" fill="#0016a1"/>
<rect x="1261" y="565" width="8.5" fill="#0014a1"/>
<rect x="1269" y="565" width="8.5" fill="#0013a1"/>
<rect x="1277" y="565" width="8.5" fill="#0012a1"/>
<rect x="1285" y="565" width="8.5" fill="#0010a1"/>
<rect x="1293" y="565" width="8.5" fill="#000fa1"/>
<rect x="1301" y="565" width="8.5" fill="#000ea1"/>
<rect x="1357" y="565" width="8.5" fill="#2904a1"/>
<rect x="1365" y="565" width="8.5" fill="#3103a1"/>
<rect x="1373" y="565" width="8.5" fill="#3a01a1"/>
<rect x="1381" y="565" width="8.5" fill="#4400a1"/>
<rect x="1389" y="565" width="8.5" fill="#4e00a1"/>
<rect x="1397" y="565" width="8.5" fill="#5800a1"/>
<rect x="1405" y="565" width="8.5" fill="#6300a1"/>
<rect x="1413" y="565" width="8.5" fill="#6f00a1"/>
<rect x="1421" y="565" width="8.5" fill="#7b00a1"/>
<rect x="1429" y="565" width="8.5" fill="#8800a1"/>
<rect x="1437" y="565" width="8.5" fill="#9500a1"/>
<rect x="1445" y="565" width="8.5" fill="#a1009f"/>
<rect x="1453" y="565" width="8.5" fill="#a10092"/>
<rect x="1461" y="565" width="8.5" fill="#a10086"/>
<rect x="1469" y="565" width="8.5" fill="#a1007c"/>
<rect x="1477" y="565" width="8.5" fill="#a10073"/>
<rect x="1485" y="565" width="8.5" fill="#a1006b"/>
<rect x="1493" y="565" width="8.5" fill="#a10063"/>
<rect x="1501" y="565" width="8.5" fill="#a1005c"/>
<rect x="1509" y="565" width="8.5" fill="#a10056"/>
<rect x="1517" y="565" width="8.5" fill="#a10051"/>
<rect x="1525" y="565" width="8.5" fill="#a1004b"/>
<rect x="1533" y="565" width="8.5" fill="#a10047"/>
<rect x="1541" y="565" width="8.5" fill="#a10042"/>
<rect x="1549" y="565" width="8.5" fill="#a1003e"/>
<rect x="1557" y="565" width="8.5" fill="#a1003a"/>
<rect x="1237" y="573" width="8.5" fill="#0014a1"/>
<rect x="1245" y="573" width="8.5" fill="#0012a1"/>
<rect x="1253" y="573" width="8.5" fill="#0011a1"/>
<rect x="1261" y="573" width="8.5" fill="#0010a1"/>
<rect x="1269" y="573" width="8.5" fill="#000fa1"/>
<rect x="1277" y="573" width="8.5" fill="#000da1"/>
<rect x="1285" y="573" width="8.5" fill="#000ca1"/>
<rect x="1293" y="573" width="8.5" fill="#000ba1"/>
<rect x="1301" y="573" width="8.5" fill="#0009a1"/>
<rect x="1333" y="573" width="8.5" fill="#1504a1"/>
<rect x="1341" y="573" width="8.5" fill="#1b03a1"/>
<rect x="1349" y="573" width="8.5" fill="#2302a1"/>
<rect x="1357" y="573" width="8.5" fill="#2b01a1"/>
<rect x="1365" y="573" width="8.5" fill="#3300a1"/>
<rect x="1373" y="573" width="8.5" fill="#3c00a1"/>
<rect x="1381" y="573" width="8.5" fill="#4500a1"/>
<rect x="1389" y="573" width="8.5" fill="#4f00a1"/>
<rect x="1397" y="573" width="8.5" fill="#5900a1"/>
<rect x="1405" y="573" width="8.5" fill="#6400a1"/>
<rect x="1413" y="573" width="8.5" fill="#6f00a1"/>
<rect x="1421" y="573" width="8.5" fill="#7b00a1"/>
<rect x="1429" y="573" width="8.5" fill="#8700a1"/>
<rect x="1437" y="573" width="8.5" fill="#9400a1"/>
<rect x="1445" y="573" width="8.5" fill="#a100a0"/>
<rect x="1453" y="573" width="8.5" fill="#a10093"/>
<rect x="1461" y="573" width="8.5" fill="#a10087"/>
<rect x="1469" y="573" width="8.5" fill="#a1007d"/>
<rect x="1477" y="573" width="8.5" fill="#a10074"/>
<rect x="1485" y="573" width="8.5" fill="#a1006c"/>
<rect x="1493" y="573" width="8.5" fill="#a10065"/>
<rect x="1501" y="573" width="8.5" fill="#a1005e"/>
<rect x="1509" y="573" width="8.5" fill="#a10058"/>
<rect x="1517" y="573" width="8.5" fill="#a10052"/>
<rect x="1525" y="573" width="8.5" fill="#a1004d"/>
<rect x="1533" y="573" width="8.5" fill="#a10048"/>
<rect x="1245" y="581" width="8.5" fill="#000ea1"/>
<rect x="1253" y="581" width="8.5" fill="#000da1"/>
<rect x="1261" y="581" width="8.5" fill="#000ca1"/>
<rect x="1269" y="581" width="8.5" fill="#000ba1"/>
<rect x="1277" y="581" width="8.5" fill="#0009a1"/>
<rect x="1285" y="581" width="8.5" fill="#0008a1"/>
<rect x="1293" y="581" width="8.5" fill="#0007a1"/>
<rect x="1301" y="581" width="8.5" fill="#0106a1"/>
<rect x="1317" y="581" width="8.5" fill="#0a03a1"/>
<rect x="1325" y="581" width="8.5" fill="#1002a1"/>
<rect x="1333" y="581" width="8.5" fill="#1601a1"/>
<rect x="1341" y="581" width="8.5" fill="#1d00a1"/>
<rect x="1349" y="581" width="8.5" fill="#2500a1"/>
<rect x="1357" y="581" width="8.5" fill="#2c00a1"/>
<rect x="1365" y="581" width="8.5" fill="#3500a1"/>
<rect x="1373" y="581" width="8.5" fill="#3d00a1"/>
<rect x="1381" y="581" width="8.5" fill="#4700a1"/>
<rect x="1389" y="581" width="8.5" fill="#5000a1"/>
<rect x="1397" y="581" width="8.5" fill="#5a00a1"/>
<rect x="1405" y="581" width="8.5" fill="#6500a1"/>
<rect x="1413" y="581" width="8.5" fill="#7000a1"/>
<rect x="1421" y="581" width="8.5" fill="#7b00a1"/>
<rect x="1429" y="581" width="8.5" fill="#8700a1"/>
<rect x="1437" y="581" width="8.5" fill="#9400a1"/>
<rect x="1445" y="581" width="8.5" fill="#a100a1"/>
<rect x="1453" y="581" width="8.5" fill="#a10094"/>
<rect x="1461" y="581" width="8.5" fill="#a10089"/>
<rect x="1469" y="581" width="8.5" fill="#a1007f"/>
<rect x="1477" y="581" width="8.5" fill="#a10076"/>
<rect x="1485" y="581" width="8.5" fill="#a1006e"/>
<rect x="1493" y="581" width="8.5" fill="#a10066"/>
<rect x="1501" y="581" width="8.5" fill="#a10060"/>
<rect x="1509" y="581" width="8.5" fill="#a10059"/>
<rect x="1253" y="589" width="8.5" fill="#0009a1"/>
<rect x="1261" y="589" width="8.5" fill="#0008a1"/>
<rect x="1269" y="589" width="8.5" fill="#0007a1"/>
<rect x="1277" y="589" width="8.5" fill="#0006a1"/>
<rect x="1285" y="589" width="8.5" fill="#0005a1"/>
<rect x="1293" y="589" width="8.5" fill="#0004a1"/>
<rect x="1301" y="589" width="8.5" fill="#0202a1"/>
<rect x="1309" y="589" width="8.5" fill="#0701a1"/>
<rect x="1317" y="589" width="8.5" fill="#0c00a1"/>
<rect x="1325" y="589" width="8.5" fill="#1200a1"/>
<rect x="1333" y="589" width="8.5" fill="#1800a1"/>
<rect x="1341" y="589" width="8.5" fill="#1f00a1"/>
<rect x="1349" y="589" width="8.5" fill="#2600a1"/>
<rect x="1357" y="589" width="8.5" fill="#2e00a1"/>
<rect x="1365" y="589" width="8.5" fill="#3600a1"/>
<rect x="1373" y="589" width="8.5" fill="#3f00a1"/>
<rect x="1381" y="589" width="8.5" fill="#4800a1"/>
<rect x="1389" y="589" width="8.5" fill="#5100a1"/>
<rect x="1397" y="589" width="8.5" fill="#5b00a1"/>
<rect x="1405" y="589" width="8.5" fill="#6500a1"/>
<rect x="1413" y="589" width="8.5" fill="#7000a1"/>
<rect x="1421" y="589" width="8.5" fill="#7b00a1"/>
<rect x="1429" y="589" width="8.5" fill="#8700a1"/>
<rect x="1437" y="589" width="8.5" fill="#9300a1"/>
<rect x="1445" y="589" width="8.5" fill="#a000a1"/>
<rect x="1453" y="589" width="8.5" fill="#a10095"/>
<rect x="1461" y="589" width="8.5" fill="#a1008a"/>
<rect x="1469" y="589" width="8.5" fill="#a10080"/>
<rect x="1477" y="589" width="8.5" fill="#a10077"/>
<rect x="1485" y="589" width="8.5" fill="#a1006f"/>
<rect x="1253" y="597" width="8.5" fill="#0006a1"/>
<rect x="1261" y="597" width="8.5" fill="#0005a1"/>
<rect x="1269" y="597" width="8.5" fill="#0004a1"/>
<rect x="1277" y="597" width="8.5" fill="#0003a1"/>
<rect x="1285" y="597" width="8.5" fill="#0002a1"/>
<rect x="1293" y="597" width="8.5" fill="#0001a1"/>
<rect x="1301" y="597" width="8.5" fill="#0400a1"/>
<rect x="1309" y="597" width="8.5" fill="#0900a1"/>
<rect x="1317" y="597" width="8.5" fill="#0e00a1"/>
<rect x="1325" y="597" width="8.5" fill="#1400a1"/>
<rect x="1333" y="597" width="8.5" fill="#1a00a1"/>
<rect x="1341" y="597" width="8.5" fill="#2100a1"/>
<rect x="1349" y="597" width="8.5" fill="#2800a1"/>
<rect x="1357" y="597" width="8.5" fill="#3000a1"/>
<rect x="1365" y="597" width="8.5" fill="#3800a1"/>
<rect x="1373" y="597" width="8.5" fill="#4000a1"/>
<rect x="1381" y="597" width="8.5" fill="#4900a1"/>
<rect x="1389" y="597" width="8.5" fill="#5200a1"/>
<rect x="1397" y="597" width="8.5" fill="#5c00a1"/>
<rect x="1405" y="597" width="8.5" fill="#6600a1"/>
<rect x="1413" y="597" width="8.5" fill="#7000a1"/>
<rect x="1421" y="597" width="8.5" fill="#7b00a1"/>
<rect x="1429" y="597" width="8.5" fill="#8700a1"/>
<rect x="1437" y="597" width="8.5" fill="#9300a1"/>
<rect x="1445" y="597" width="8.5" fill="#9f00a1"/>
<rect x="1453" y="597" width="8.5" fill="#a10096"/>
<rect x="1461" y="597" width="8.5" fill="#a1008b"/>
<rect x="1261" y="605" width="8.5" fill="#0002a1"/>
<rect x="1269" y="605" width="8.5" fill="#0001a1"/>
<rect x="1277" y="605" width="16.5" fill="#0000a1"/>
<rect x="1293" y="605" width="8.5" fill="#0100a1"/>
<rect x="1301" y="605" width="8.5" fill="#0500a1"/>
<rect x="1309" y="605" width="8.5" fill="#0a00a1"/>
<rect x="1317" y="605" width="8.5" fill="#1000a1"/>
<rect x="1325" y="605" width="8.5" fill="#1600a1"/>
<rect x="1333" y="605" width="8.5" fill="#1c00a1"/>
<rect x="1341" y="605" width="8.5" fill="#2300a1"/>
<rect x="1349" y="605" width="8.5" fill="#2a00a1"/>
<rect x="1357" y="605" width="8.5" fill="#3100a1"/>
<rect x="1365" y="605" width="8.5" fill="#3900a1"/>
<rect x="1373" y="605" width="8.5" fill="#4100a1"/>
<rect x="1381" y="605" width="8.5" fill="#4a00a1"/>
<rect x="1389" y="605" width="8.5" fill="#5300a1"/>
<rect x="1397" y="605" width="8.5" fill="#5d00a1"/>
<rect x="1405" y="605" width="8.5" fill="#6600a1"/>
<rect x="1413" y="605" width="8.5" fill="#7100a1"/>
<rect x="1421" y="605" width="8.5" fill="#7b00a1"/>
<rect x="1429" y="605" width="8.5" fill="#8700a1"/>
<rect x="1437" y="605" width="8.5" fill="#9200a1"/>
<rect x="1269" y="613" width="24.5" fill="#0000a1"/>
<rect x="1293" y="613" width="8.5" fill="#0300a1"/>
<rect x="1301" y="613" width="8.5" fill="#0700a1"/>
<rect x="1309" y="613" width="8.5" fill="#0c00a1"/>
<rect x="1317" y="613" width="8.5" fill="#1200a1"/>
<rect x="1325" y="613" width="8.5" fill="#1700a1"/>
<rect x="1333" y="613" width="8.5" fill="#1e00a1"/>
<rect x="1341" y="613" width="8.5" fill="#2400a1"/>
<rect x="1349" y="613" width="8.5" fill="#2b00a1"/>
<rect x="1357" y="613" width="8.5" fill="#3300a1"/>
<rect x="1365" y="613" width="8.5" fill="#3b00a1"/>
<rect x="1373" y="613" width="8.5" fill="#4300a1"/>
<rect x="1381" y="613" width="8.5" fill="#4b00a1"/>
<rect x="1389" y="613" width="8.5" fill="#5400a1"/>
<rect x="1397" y="613" width="8.5" fill="#5d00a1"/>
<rect x="1405" y="613" width="8.5" fill="#6700a1"/>
<rect x="1413" y="613" width="8.5" fill="#7100a1"/>
<rect x="1277" y="621" width="8.5" fill="#0000a1"/>
<rect x="1285" y="621" width="8.5" fill="#0100a1"/>
<rect x="1293" y="621" width="8.5" fill="#0400a1"/>
<rect x="1301" y="621" width="8.5" fill="#0900a1"/>
<rect x="1309" y="621" width="8.5" fill="#0e00a1"/>
<rect x="1317" y="621" width="8.5" fill="#1300a1"/>
<rect x="1325" y="621" width="8.5" fill="#1900a1"/>
<rect x="1333" y="621" width="8.5" fill="#1f00a1"/>
<rect x="1341" y="621" width="8.5" fill="#2600a1"/>
<rect x="1349" y="621" width="8.5" fill="#2d00a1"/>
<rect x="1357" y="621" width="8.5" fill="#3400a1"/>
<rect x="1365" y="621" width="8.5" fill="#3c00a1"/>
<rect x="1373" y="621" width="8.5" fill="#4400a1"/>
<rect x="1381" y="621" width="8.5" fill="#4c00a1"/>
<rect x="1285" y="629" width="8.5" fill="#0200a1"/>
<rect x="1293" y="629" width="8.5" fill="#0600a1"/>
<rect x="1301" y="629" width="8.5" fill="#0a00a1"/>
<rect x="1309" y="629" width="8.5" fill="#0f00a1"/>
<rect x="1317" y="629" width="8.5" fill="#1500a1"/>
<rect x="1325" y="629" width="8.5" fill="#1b00a1"/>
<rect x="1333" y="629" width="8.5" fill="#2100a1"/>
<rect x="1341" y="629" width="8.5" fill="#2800a1"/>
<rect x="1349" y="629" width="8.5" fill="#2e00a1"/>
<rect x="1357" y="629" width="8.5" fill="#3600a1"/>
<rect x="1301" y="637" width="8.5" fill="#0c00a1"/>
<rect x="1309" y="637" width="8.5" fill="#1100a1"/>
<rect x="1317" y="637" width="8.5" fill="#1700a1"/>
<rect x="1325" y="637" width="8.5" fill="#1c00a1"/>
<rect x="1333" y="637" width="8.5" fill="#2300a1"/>
<rect x="1309" y="645" width="8.5" fill="#1100a1"/>
</g></g>
<g clip-path="url(#ct)"><g filter="url(#bl)" class="cc">
<rect x="1341" y="189" width="8.5" fill="#0f0"/>
<rect x="1341" y="197" width="24.5" fill="#0f0"/>
<rect x="1333" y="205" width="48.5" fill="#0f0"/>
<rect x="1333" y="213" width="56.5" fill="#0f0"/>
<rect x="1333" y="221" width="8.5" fill="#00ff01"/>
<rect x="1341" y="221" width="64.5" fill="#0f0"/>
<rect x="1333" y="229" width="8.5" fill="#00ff03"/>
<rect x="1341" y="229" width="8.5" fill="#00ff02"/>
<rect x="1349" y="229" width="8.5" fill="#00ff01"/>
<rect x="1357" y="229" width="64.5" fill="#0f0"/>
<rect x="1333" y="237" width="8.5" fill="#00ff06"/>
<rect x="1341" y="237" width="8.5" fill="#00ff04"/>
<rect x="1349" y="237" width="8.5" fill="#00ff03"/>
<rect x="1357" y="237" width="8.5" fill="#00ff02"/>
<rect x="1365" y="237" width="8.5" fill="#00ff01"/>
<rect x="1373" y="237" width="56.5" fill="#0f0"/>
<rect x="1333" y="245" width="8.5" fill="#00ff09"/>
<rect x="1341" y="245" width="8.5" fill="#00ff07"/>
<rect x="1349" y="245" width="8.5" fill="#00ff06"/>
<rect x="1357" y="245" width="8.5" fill="#00ff04"/>
<rect x="1365" y="245" width="8.5" fill="#00ff03"/>
<rect x="1373" y="245" width="8.5" fill="#00ff02"/>
<rect x="1381" y="245" width="8.5" fill="#00ff01"/>
<rect x="1389" y="245" width="48.5" fill="#0f0"/>
<rect x="1437" y="245" width="8.5" fill="#03ff00"/>
<rect x="1333" y="253" width="8.5" fill="#00ff0c"/>
<rect x="1341" y="253" width="8.5" fill="#00ff0a"/>
<rect x="1349" y="253" width="8.5" fill="#00ff09"/>
<rect x="1357" y="253" width="8.5" fill="#00ff07"/>
<rect x="1365" y="253" width="8.5" fill="#00ff06"/>
<rect x="1373" y="253" width="8.5" fill="#00ff04"/>
<rect x="1381" y="253" width="8.5" fill="#00ff03"/>
<rect x="1389" y="253" width="8.5" fill="#00ff02"/>
<rect x="1397" y="253" width="40.5" fill="#0f0"/>
<rect x="1437" y="253" width="8.5" fill="#05ff00"/>
<rect x="1445" y="253" width="8.5" fill="#0cff00"/>
<rect x="1333" y="261" width="8.5" fill="#00ff0f"/>
<rect x="1341" y="261" width="8.5" fill="#00ff0e"/>
<rect x="1349" y="261" width="8.5" fill="#00ff0c"/>
<rect x="1357" y="261" width="8.5" fill="#00ff0a"/>
<rect x="1365" y="261" width="8.5" fill="#00ff09"/>
<rect x="1373" y="261" width="8.5" fill="#00ff07"/>
<rect x="1381" y="261" width="8.5" fill="#00ff06"/>
<rect x="1389" y="261" width="8.5" fill="#00ff04"/>
<rect x="1397" y="261" width="8.5" fill="#00ff03"/>
<rect x="1405" y="261" width="8.5" fill="#00ff01"/>
<rect x="1413" y="261" width="16.5" fill="#0f0"/>
<rect x="1429" y="261" width="8.5" fill="#02ff00"/>
<rect x="1437" y="261" width="8.5" fill="#08ff00"/>
<rect x="1445" y="261" width="8.5" fill="#10ff00"/>
<rect x="1453" y="261" width="8.5" fill="#18ff00"/>
<rect x="1461" y="261" width="8.5" fill="#21ff00"/>
<rect x="1325" y="269" width="8.5" fill="#00ff15"/>
<rect x="1333" y="269" width="8.5" fill="#00ff13"/>
<rect x="1341" y="269" width="8.5" fill="#00ff12"/>
<rect x="1349" y="269" width="8.5" fill="#00ff10"/>
<rect x="1357" y="269" width="8.5" fill="#00ff0e"/>
<rect x="1365" y="269" width="8.5" fill="#00ff0c"/>
<rect x="1373" y="269" width="8.5" fill="#00ff0b"/>
<rect x="1381" y="269" width="8.5" fill="#00ff09"/>
<rect x="1389" y="269" width="8.5" fill="#00ff07"/>
<rect x="1397" y="269" width="8.5" fill="#00ff06"/>
<rect x="1405" y="269" width="8.5" fill="#00ff04"/>
<rect x="1413" y="269" width="8.5" fill="#00ff03"/>
<rect x="1421" y="269" width="8.5" fill="#00ff01"/>
<rect x="1429" y="269" width="8.5" fill="#04ff00"/>
<rect x="1437" y="269" width="8.5" fill="#0bff00"/>
<rect x="1445" y="269" width="8.5" fill="#13ff00"/>
<rect x="1453" y="269" width="8.5" fill="#1cff00"/>
<rect x="1461" y="269" width="8.5" fill="#26ff00"/>
<rect x="1469" y="269" width="8.5" fill="#31ff00"/>
<rect x="1477" y="269" width="8.5" fill="#3cff00"/>
<rect x="1325" y="277" width="8.5" fill="#00ff19"/>
<rect x="1333" y="277" width="8.5" fill="#00ff17"/>
<rect x="1341" y="277" width="8.5" fill="#00ff16"/>
<rect x="1349" y="277" width="8.5" fill="#00ff14"/>
<rect x="1357" y="277" width="8.5" fill="#00ff12"/>
<rect x="1365" y="277" width="8.5" fill="#00ff10"/>
<rect x="1373" y="277" width="8.5" fill="#00ff0f"/>
<rect x="1381" y="277" width="8.5" fill="#00ff0d"/>
<rect x="1389" y="277" width="8.5" fill="#00ff0b"/>
<rect x="1397" y="277" width="8.5" fill="#00ff09"/>
<rect x="1405" y="277" width="8.5" fill="#00ff07"/>
<rect x="1413" y="277" width="8.5" fill="#00ff06"/>
<rect x="1421" y="277" width="8.5" fill="#01ff04"/>
<rect x="1429" y="277" width="8.5" fill="#07ff02"/>
<rect x="1437" y="277" width="8.5" fill="#0fff01"/>
<rect x="1445" y="277" width="8.5" fill="#18ff00"/>
<rect x="1453" y="277" width="8.5" fill="#21ff00"/>
<rect x="1461" y="277" width="8.5" fill="#2cff00"/>
<rect x="1469" y="277" width="8.5" fill="#37ff00"/>
<rect x="1477" y="277" width="8.5" fill="#42ff00"/>
<rect x="1485" y="277" width="8.5" fill="#4fff00"/>
<rect x="1325" y="285" width="8.5" fill="#00ff1e"/>
<rect x="1333" y="285" width="8.5" fill="#00ff1c"/>
<rect x="1341" y="285" width="8.5" fill="#00ff1a"/>
<rect x="1349" y="285" width="8.5" fill="#00ff18"/>
<rect x="1357" y="285" width="8.5" fill="#00ff17"/>
<rect x="1365" y="285" width="8.5" fill="#00ff15"/>
<rect x="1373" y="285" width="8.5" fill="#00ff13"/>
<rect x="1381" y="285" width="8.5" fill="#0f1"/>
<rect x="1389" y="285" width="8.5" fill="#00ff0f"/>
<rect x="1397" y="285" width="8.5" fill="#00ff0d"/>
<rect x="1405" y="285" width="8.5" fill="#00ff0b"/>
<rect x="1413" y="285" width="8.5" fill="#00ff09"/>
<rect x="1421" y="285" width="8.5" fill="#03ff08"/>
<rect x="1429" y="285" width="8.5" fill="#0aff06"/>
<rect x="1437" y="285" width="8.5" fill="#13ff04"/>
<rect x="1445" y="285" width="8.5" fill="#1cff02"/>
<rect x="1453" y="285" width="8.5" fill="#26ff01"/>
<rect x="1461" y="285" width="8.5" fill="#31ff00"/>
<rect x="1469" y="285" width="8.5" fill="#3dff00"/>
<rect x="1477" y="285" width="8.5" fill="#49ff00"/>
<rect x="1485" y="285" width="8.5" fill="#56ff00"/>
<rect x="1493" y="285" width="8.5" fill="#64ff00"/>
<rect x="1501" y="285" width="8.5" fill="#73ff00"/>
<rect x="1325" y="293" width="8.5" fill="#00ff23"/>
<rect x="1333" y="293" width="8.5" fill="#00ff21"/>
<rect x="1341" y="293" width="8.5" fill="#00ff1f"/>
<rect x="1349" y="293" width="8.5" fill="#00ff1d"/>
<rect x="1357" y="293" width="8.5" fill="#00ff1b"/>
<rect x="1365" y="293" width="8.5" fill="#00ff19"/>
<rect x="1373" y="293" width="8.5" fill="#00ff18"/>
<rect x="1381" y="293" width="8.5" fill="#00ff16"/>
<rect x="1389" y="293" width="8.5" fill="#00ff14"/>
<rect x="1397" y="293" width="8.5" fill="#00ff12"/>
<rect x="1405" y="293" width="8.5" fill="#00ff10"/>
<rect x="1413" y="293" width="8.5" fill="#00ff0e"/>
<rect x="1421" y="293" width="8.5" fill="#06ff0c"/>
<rect x="1429" y="293" width="8.5" fill="#0eff0a"/>
<rect x="1437" y="293" width="8.5" fill="#17ff08"/>
<rect x="1445" y="293" width="8.5" fill="#21ff06"/>
<rect x="1453" y="293" width="8.5" fill="#2cff04"/>
<rect x="1461" y="293" width="8.5" fill="#38ff02"/>
<rect x="1469" y="293" width="8.5" fill="#4f0"/>
<rect x="1477" y="293" width="8.5" fill="#51ff00"/>
<rect x="1485" y="293" width="8.5" fill="#5fff00"/>
<rect x="1493" y="293" width="8.5" fill="#6eff00"/>
<rect x="1501" y="293" width="8.5" fill="#7dff00"/>
<rect x="1509" y="293" width="8.5" fill="#8dff00"/>
<rect x="1325" y="301" width="8.5" fill="#00ff28"/>
<rect x="1333" y="301" width="8.5" fill="#00ff26"/>
<rect x="1341" y="301" width="8.5" fill="#00ff25"/>
<rect x="1349" y="301" width="8.5" fill="#00ff23"/>
<rect x="1357" y="301" width="8.5" fill="#00ff21"/>
<rect x="1365" y="301" width="8.5" fill="#00ff1f"/>
<rect x="1373" y="301" width="8.5" fill="#00ff1d"/>
<rect x="1381" y="301" width="8.5" fill="#00ff1b"/>
<rect x="1389" y="301" width="8.5" fill="#00ff19"/>
<rect x="1397" y="301" width="8.5" fill="#00ff16"/>
<rect x="1405" y="301" width="8.5" fill="#00ff14"/>
<rect x="1413" y="301" width="8.5" fill="#02ff12"/>
<rect x="1421" y="301" width="8.5" fill="#09ff10"/>
<rect x="1429" y="301" width="8.5" fill="#12ff0e"/>
<rect x="1437" y="301" width="8.5" fill="#1cff0c"/>
<rect x="1445" y="301" width="8.5" fill="#27ff0a"/>
<rect x="1453" y="301" width="8.5" fill="#32ff08"/>
<rect x="1461" y="301" width="8.5" fill="#3fff06"/>
<rect x="1469" y="301" width="8.5" fill="#4cff04"/>
<rect x="1477" y="301" width="8.5" fill="#5aff02"/>
<rect x="1485" y="301" width="8.5" fill="#68ff00"/>
<rect x="1493" y="301" width="8.5" fill="#78ff00"/>
<rect x="1501" y="301" width="8.5" fill="#8f0"/>
<rect x="1509" y="301" width="8.5" fill="#9f0"/>
<rect x="1517" y="301" width="8.5" fill="#abff00"/>
<rect x="1525" y="301" width="8.5" fill="#beff00"/>
<rect x="1325" y="309" width="8.5" fill="#00ff2e"/>
<rect x="1333" y="309" width="8.5" fill="#00ff2c"/>
<rect x="1341" y="309" width="8.5" fill="#00ff2a"/>
<rect x="1349" y="309" width="8.5" fill="#00ff28"/>
<rect x="1357" y="309" width="8.5" fill="#00ff26"/>
<rect x="1365" y="309" width="8.5" fill="#00ff24"/>
<rect x="1373" y="309" width="8.5" fill="#0f2"/>
<rect x="1381" y="309" width="8.5" fill="#00ff20"/>
<rect x="1389" y="309" width="8.5" fill="#00ff1e"/>
<rect x="1397" y="309" width="8.5" fill="#00ff1c"/>
<rect x="1405" y="309" width="8.5" fill="#00ff1a"/>
<rect x="1413" y="309" width="8.5" fill="#05ff18"/>
<rect x="1421" y="309" width="8.5" fill="#0dff15"/>
<rect x="1429" y="309" width="8.5" fill="#17ff13"/>
<rect x="1437" y="309" width="8.5" fill="#21ff11"/>
<rect x="1445" y="309" width="8.5" fill="#2dff0f"/>
<rect x="1453" y="309" width="8.5" fill="#39ff0c"/>
<rect x="1461" y="309" width="8.5" fill="#46ff0a"/>
<rect x="1469" y="309" width="8.5" fill="#54ff08"/>
<rect x="1477" y="309" width="8.5" fill="#63ff06"/>
<rect x="1485" y="309" width="8.5" fill="#73ff04"/>
<rect x="1493" y="309" width="8.5" fill="#83ff02"/>
<rect x="1501" y="309" width="8.5" fill="#94ff00"/>
<rect x="1509" y="309" width="8.5" fill="#a6ff00"/>
<rect x="1517" y="309" width="8.5" fill="#baff00"/>
<rect x="1525" y="309" width="8.5" fill="#cdff00"/>
<rect x="1533" y="309" width="8.5" fill="#e2ff00"/>
<rect x="1541" y="309" width="8.5" fill="#f8ff00"/>
<rect x="1325" y="317" width="8.5" fill="#00ff35"/>
<rect x="1333" y="317" width="8.5" fill="#0f3"/>
<rect x="1341" y="317" width="8.5" fill="#00ff31"/>
<rect x="1349" y="317" width="8.5" fill="#00ff2f"/>
<rect x="1357" y="317" width="8.5" fill="#00ff2d"/>
<rect x="1365" y="317" width="8.5" fill="#00ff2b"/>
<rect x="1373" y="317" width="8.5" fill="#00ff28"/>
<rect x="1381" y="317" width="8.5" fill="#00ff26"/>
<rect x="1389" y="317" width="8.5" fill="#00ff24"/>
<rect x="1397" y="317" width="8.5" fill="#0f2"/>
<rect x="1405" y="317" width="8.5" fill="#01ff20"/>
<rect x="1413" y="317" width="8.5" fill="#08ff1d"/>
<rect x="1421" y="317" width="8.5" fill="#11ff1b"/>
<rect x="1429" y="317" width="8.5" fill="#1cff19"/>
<rect x="1437" y="317" width="8.5" fill="#27ff16"/>
<rect x="1445" y="317" width="8.5" fill="#33ff14"/>
<rect x="1453" y="317" width="8.5" fill="#40ff12"/>
<rect x="1461" y="317" width="8.5" fill="#4fff0f"/>
<rect x="1469" y="317" width="8.5" fill="#5dff0d"/>
<rect x="1477" y="317" width="8.5" fill="#6dff0a"/>
<rect x="1485" y="317" width="8.5" fill="#7eff08"/>
<rect x="1493" y="317" width="8.5" fill="#8fff06"/>
<rect x="1501" y="317" width="8.5" fill="#a2ff03"/>
<rect x="1509" y="317" width="8.5" fill="#b5ff01"/>
<rect x="1517" y="317" width="8.5" fill="#c9ff00"/>
<rect x="1525" y="317" width="8.5" fill="#dfff00"/>
<rect x="1533" y="317" width="8.5" fill="#f5ff00"/>
<rect x="1541" y="317" width="8.5" fill="#fff200"/>
<rect x="1549" y="317" width="8.5" fill="#ffde00"/>
<rect x="1325" y="325" width="8.5" fill="#00ff3c"/>
<rect x="1333" y="325" width="8.5" fill="#00ff3a"/>
<rect x="1341" y="325" width="8.5" fill="#00ff38"/>
<rect x="1349" y="325" width="8.5" fill="#00ff36"/>
<rect x="1357" y="325" width="8.5" fill="#0f3"/>
<rect x="1365" y="325" width="8.5" fill="#00ff31"/>
<rect x="1373" y="325" width="8.5" fill="#00ff2f"/>
<rect x="1381" y="325" width="8.5" fill="#00ff2d"/>
<rect x="1389" y="325" width="8.5" fill="#00ff2b"/>
<rect x="1397" y="325" width="8.5" fill="#00ff28"/>
<rect x="1405" y="325" width="8.5" fill="#04ff26"/>
<rect x="1413" y="325" width="8.5" fill="#0cff24"/>
<rect x="1421" y="325" width="8.5" fill="#16ff21"/>
<rect x="1429" y="325" width="8.5" fill="#21ff1f"/>
<rect x="1437" y="325" width="8.5" fill="#2dff1d"/>
<rect x="1445" y="325" width="8.5" fill="#3bff1a"/>
<rect x="1453" y="325" width="8.5" fill="#49ff18"/>
<rect x="1461" y="325" width="8.5" fill="#58ff15"/>
<rect x="1469" y="325" width="8.5" fill="#67ff12"/>
<rect x="1477" y="325" width="8.5" fill="#78ff10"/>
<rect x="1485" y="325" width="8.5" fill="#8aff0d"/>
<rect x="1493" y="325" width="8.5" fill="#9dff0b"/>
<rect x="1501" y="325" width="8.5" fill="#b0ff08"/>
<rect x="1509" y="325" width="8.5" fill="#c5ff06"/>
<rect x="1517" y="325" width="8.5" fill="#dbff03"/>
<rect x="1525" y="325" width="8.5" fill="#f2ff01"/>
<rect x="1533" y="325" width="8.5" fill="#fff500"/>
<rect x="1541" y="325" width="8.5" fill="#ffe000"/>
<rect x="1549" y="325" width="8.5" fill="#ffcd00"/>
<rect x="1557" y="325" width="8.5" fill="#ffbc00"/>
<rect x="1565" y="325" width="8.5" fill="#ffae00"/>
<rect x="1317" y="333" width="8.5" fill="#00ff45"/>
<rect x="1325" y="333" width="8.5" fill="#00ff43"/>
<rect x="1333" y="333" width="8.5" fill="#00ff41"/>
<rect x="1341" y="333" width="8.5" fill="#00ff3f"/>
<rect x="1349" y="333" width="8.5" fill="#00ff3d"/>
<rect x="1357" y="333" width="8.5" fill="#00ff3b"/>
<rect x="1365" y="333" width="8.5" fill="#00ff39"/>
<rect x="1373" y="333" width="8.5" fill="#00ff37"/>
<rect x="1381" y="333" width="8.5" fill="#00ff34"/>
<rect x="1389" y="333" width="8.5" fill="#00ff32"/>
<rect x="1397" y="333" width="8.5" fill="#00ff30"/>
<rect x="1405" y="333" width="8.5" fill="#07ff2d"/>
<rect x="1413" y="333" width="8.5" fill="#10ff2b"/>
<rect x="1421" y="333" width="8.5" fill="#1bff29"/>
<rect x="1429" y="333" width="8.5" fill="#27ff26"/>
<rect x="1437" y="333" width="8.5" fill="#34ff24"/>
<rect x="1445" y="333" width="8.5" fill="#43ff21"/>
<rect x="1453" y="333" width="8.5" fill="#52ff1e"/>
<rect x="1461" y="333" width="8.5" fill="#62ff1c"/>
<rect x="1469" y="333" width="8.5" fill="#73ff19"/>
<rect x="1477" y="333" width="8.5" fill="#84ff16"/>
<rect x="1485" y="333" width="8.5" fill="#97ff13"/>
<rect x="1493" y="333" width="8.5" fill="#abff11"/>
<rect x="1501" y="333" width="8.5" fill="#c0ff0e"/>
<rect x="1509" y="333" width="8.5" fill="#d7ff0b"/>
<rect x="1517" y="333" width="8.5" fill="#eeff08"/>
<rect x="1525" y="333" width="8.5" fill="#fff805"/>
<rect x="1533" y="333" width="8.5" fill="#ffe203"/>
<rect x="1541" y="333" width="8.5" fill="#ffce01"/>
<rect x="1549" y="333" width="8.5" fill="#ffbd00"/>
<rect x="1557" y="333" width="8.5" fill="#ffae00"/>
<rect x="1565" y="333" width="8.5" fill="#ffa000"/>
<rect x="1573" y="333" width="8.5" fill="#ff9400"/>
<rect x="1581" y="333" width="8.5" fill="#ff8900"/>
<rect x="1317" y="341" width="8.5" fill="#00ff4d"/>
<rect x="1325" y="341" width="8.5" fill="#00ff4b"/>
<rect x="1333" y="341" width="8.5" fill="#00ff49"/>
<rect x="1341" y="341" width="8.5" fill="#00ff47"/>
<rect x="1349" y="341" width="8.5" fill="#00ff45"/>
<rect x="1357" y="341" width="8.5" fill="#00ff43"/>
<rect x="1365" y="341" width="8.5" fill="#00ff41"/>
<rect x="1373" y="341" width="8.5" fill="#00ff3f"/>
<rect x="1381" y="341" width="8.5" fill="#00ff3c"/>
<rect x="1389" y="341" width="8.5" fill="#00ff3a"/>
<rect x="1397" y="341" width="8.5" fill="#02ff38"/>
<rect x="1405" y="341" width="8.5" fill="#0bff35"/>
<rect x="1413" y="341" width="8.5" fill="#15ff33"/>
<rect x="1421" y="341" width="8.5" fill="#21ff30"/>
<rect x="1429" y="341" width="8.5" fill="#2eff2e"/>
<rect x="1437" y="341" width="8.5" fill="#3cff2b"/>
<rect x="1445" y="341" width="8.5" fill="#4bff29"/>
<rect x="1453" y="341" width="8.5" fill="#5bff26"/>
<rect x="1461" y="341" width="8.5" fill="#6dff23"/>
<rect x="1469" y="341" width="8.5" fill="#7fff20"/>
<rect x="1477" y="341" width="8.5" fill="#92ff1d"/>
<rect x="1485" y="341" width="8.5" fill="#a6ff1b"/>
<rect x="1493" y="341" width="8.5" fill="#bcff18"/>
<rect x="1501" y="341" width="8.5" fill="#d2ff15"/>
<rect x="1509" y="341" width="8.5" fill="#eaff12"/>
<rect x="1517" y="341" width="8.5" fill="#fffb0e"/>
<rect x="1525" y="341" width="8.5" fill="#ffe40a"/>
<rect x="1533" y="341" width="8.5" fill="#ffcf07"/>
<rect x="1541" y="341" width="8.5" fill="#ffbe04"/>
<rect x="1549" y="341" width="8.5" fill="#ffae02"/>
<rect x="1557" y="341" width="8.5" fill="#ffa000"/>
<rect x="1565" y="341" width="8.5" fill="#ff9300"/>
<rect x="1573" y="341" width="8.5" fill="#f80"/>
<rect x="1581" y="341" width="8.5" fill="#ff7e00"/>
<rect x="1589" y="341" width="8.5" fill="#ff7500"/>
<rect x="1317" y="349" width="8.5" fill="#00ff56"/>
<rect x="1325" y="349" width="8.5" fill="#00ff54"/>
<rect x="1333" y="349" width="8.5" fill="#00ff52"/>
<rect x="1341" y="349" width="8.5" fill="#00ff50"/>
<rect x="1349" y="349" width="8.5" fill="#00ff4e"/>
<rect x="1357" y="349" width="8.5" fill="#00ff4c"/>
<rect x="1365" y="349" width="8.5" fill="#00ff4a"/>
<rect x="1373" y="349" width="8.5" fill="#00ff48"/>
<rect x="1381" y="349" width="8.5" fill="#00ff45"/>
<rect x="1389" y="349" width="8.5" fill="#00ff43"/>
<rect x="1397" y="349" width="8.5" fill="#06ff41"/>
<rect x="1405" y="349" width="8.5" fill="#0fff3e"/>
<rect x="1413" y="349" width="8.5" fill="#1bff3c"/>
<rect x="1421" y="349" width="8.5" fill="#28ff39"/>
<rect x="1429" y="349" width="8.5" fill="#36ff37"/>
<rect x="1437" y="349" width="8.5" fill="#45ff34"/>
<rect x="1445" y="349" width="8.5" fill="#55ff31"/>
<rect x="1453" y="349" width="8.5" fill="#66ff2e"/>
<rect x="1461" y="349" width="8.5" fill="#79ff2c"/>
<rect x="1469" y="349" width="8.5" fill="#8cff29"/>
<rect x="1477" y="349" width="8.5" fill="#a1ff26"/>
<rect x="1485" y="349" width="8.5" fill="#b7ff23"/>
<rect x="1493" y="349" width="8.5" fill="#ceff20"/>
<rect x="1501" y="349" width="8.5" fill="#e6ff1c"/>
<rect x="1509" y="349" width="8.5" fill="#fffe19"/>
<rect x="1517" y="349" width="8.5" fill="#ffe614"/>
<rect x="1525" y="349" width="8.5" fill="#ffd10f"/>
<rect x="1533" y="349" width="8.5" fill="#ffbe0b"/>
<rect x="1541" y="349" width="8.5" fill="#ffae08"/>
<rect x="1549" y="349" width="8.5" fill="#ffa005"/>
<rect x="1557" y="349" width="8.5" fill="#ff9303"/>
<rect x="1565" y="349" width="8.5" fill="#ff8701"/>
<rect x="1573" y="349" width="8.5" fill="#ff7d00"/>
<rect x="1581" y="349" width="8.5" fill="#ff7400"/>
<rect x="1589" y="349" width="8.5" fill="#ff6b00"/>
<rect x="1597" y="349" width="8.5" fill="#ff6300"/>
<rect x="1605" y="349" width="8.5" fill="#ff5c00"/>
<rect x="1317" y="357" width="8.5" fill="#00ff60"/>
<rect x="1325" y="357" width="8.5" fill="#00ff5e"/>
<rect x="1333" y="357" width="8.5" fill="#00ff5c"/>
<rect x="1341" y="357" width="8.5" fill="#00ff5a"/>
<rect x="1349" y="357" width="8.5" fill="#00ff58"/>
<rect x="1357" y="357" width="8.5" fill="#00ff56"/>
<rect x="1365" y="357" width="8.5" fill="#00ff53"/>
<rect x="1373" y="357" width="8.5" fill="#00ff51"/>
<rect x="1381" y="357" width="8.5" fill="#00ff4f"/>
<rect x="1389" y="357" width="8.5" fill="#01ff4d"/>
<rect x="1397" y="357" width="8.5" fill="#0aff4a"/>
<rect x="1405" y="357" width="8.5" fill="#15ff48"/>
<rect x="1413" y="357" width="8.5" fill="#21ff45"/>
<rect x="1421" y="357" width="8.5" fill="#2fff43"/>
<rect x="1429" y="357" width="8.5" fill="#3eff40"/>
<rect x="1437" y="357" width="8.5" fill="#4eff3e"/>
<rect x="1445" y="357" width="8.5" fill="#60ff3b"/>
<rect x="1453" y="357" width="8.5" fill="#72ff38"/>
<rect x="1461" y="357" width="8.5" fill="#86ff35"/>
<rect x="1469" y="357" width="8.5" fill="#9bff32"/>
<rect x="1477" y="357" width="8.5" fill="#b1ff2f"/>
<rect x="1485" y="357" width="8.5" fill="#c9ff2c"/>
<rect x="1493" y="357" width="8.5" fill="#e2ff29"/>
<rect x="1501" y="357" width="8.5" fill="#fcff26"/>
<rect x="1509" y="357" width="8.5" fill="#ffe81f"/>
<rect x="1517" y="357" width="8.5" fill="#ffd219"/>
<rect x="1525" y="357" width="8.5" fill="#ffbf14"/>
<rect x="1533" y="357" width="8.5" fill="#ffae10"/>
<rect x="1541" y="357" width="8.5" fill="#ff9f0d"/>
<rect x="1549" y="357" width="8.5" fill="#ff9209"/>
<rect x="1557" y="357" width="8.5" fill="#ff8607"/>
<rect x="1565" y="357" width="8.5" fill="#ff7c04"/>
<rect x="1573" y="357" width="8.5" fill="#ff7202"/>
<rect x="1581" y="357" width="8.5" fill="#ff6a01"/>
<rect x="1589" y="357" width="8.5" fill="#ff6200"/>
<rect x="1597" y="357" width="8.5" fill="#ff5b00"/>
<rect x="1605" y="357" width="8.5" fill="#ff5400"/>
<rect x="1613" y="357" width="8.5" fill="#ff4e00"/>
<rect x="1317" y="365" width="8.5" fill="#00ff6a"/>
<rect x="1325" y="365" width="8.5" fill="#00ff68"/>
<rect x="1333" y="365" width="8.5" fill="#0f6"/>
<rect x="1341" y="365" width="8.5" fill="#00ff64"/>
<rect x="1349" y="365" width="8.5" fill="#00ff62"/>
<rect x="1357" y="365" width="8.5" fill="#00ff60"/>
<rect x="1365" y="365" width="8.5" fill="#00ff5e"/>
<rect x="1373" y="365" width="8.5" fill="#00ff5c"/>
<rect x="1381" y="365" width="8.5" fill="#00ff5a"/>
<rect x="1389" y="365" width="8.5" fill="#04ff57"/>
<rect x="1397" y="365" width="8.5" fill="#0eff55"/>
<rect x="1405" y="365" width="8.5" fill="#1bff53"/>
<rect x="1413" y="365" width="8.5" fill="#28ff50"/>
<rect x="1421" y="365" width="8.5" fill="#37ff4e"/>
<rect x="1429" y="365" width="8.5" fill="#48ff4b"/>
<rect x="1437" y="365" width="8.5" fill="#59ff48"/>
<rect x="1445" y="365" width="8.5" fill="#6cff46"/>
<rect x="1453" y="365" width="8.5" fill="#80ff43"/>
<rect x="1461" y="365" width="8.5" fill="#95ff40"/>
<rect x="1469" y="365" width="8.5" fill="#acff3d"/>
<rect x="1477" y="365" width="8.5" fill="#c4ff3a"/>
<rect x="1485" y="365" width="8.5" fill="#ddff37"/>
<rect x="1493" y="365" width="8.5" fill="#f8ff33"/>
<rect x="1501" y="365" width="8.5" fill="#ffeb2c"/>
<rect x="1509" y="365" width="8.5" fill="#ffd425"/>
<rect x="1517" y="365" width="8.5" fill="#ffc01f"/>
<rect x="1525" y="365" width="8.5" fill="#ffae19"/>
<rect x="1533" y="365" width="8.5" fill="#ff9f15"/>
<rect x="1541" y="365" width="8.5" fill="#ff9111"/>
<rect x="1549" y="365" width="8.5" fill="#ff850d"/>
<rect x="1557" y="365" width="8.5" fill="#ff7b0a"/>
<rect x="1565" y="365" width="8.5" fill="#ff7108"/>
<rect x="1573" y="365" width="8.5" fill="#ff6806"/>
<rect x="1581" y="365" width="8.5" fill="#ff6004"/>
<rect x="1589" y="365" width="8.5" fill="#ff5902"/>
<rect x="1597" y="365" width="8.5" fill="#ff5201"/>
<rect x="1605" y="365" width="8.5" fill="#ff4c00"/>
<rect x="1613" y="365" width="8.5" fill="#ff4700"/>
<rect x="1621" y="365" width="8.5" fill="#ff4200"/>
<rect x="1629" y="365" width="8.5" fill="#ff3d00"/>
<rect x="1317" y="373" width="8.5" fill="#00ff75"/>
<rect x="1325" y="373" width="8.5" fill="#00ff74"/>
<rect x="1333" y="373" width="8.5" fill="#00ff72"/>
<rect x="1341" y="373" width="8.5" fill="#00ff70"/>
<rect x="1349" y="373" width="8.5" fill="#00ff6e"/>
<rect x="1357" y="373" width="8.5" fill="#00ff6c"/>
<rect x="1365" y="373" width="8.5" fill="#00ff6a"/>
<rect x="1373" y="373" width="8.5" fill="#00ff68"/>
<rect x="1381" y="373" width="8.5" fill="#0f6"/>
<rect x="1389" y="373" width="8.5" fill="#08ff63"/>
<rect x="1397" y="373" width="8.5" fill="#14ff61"/>
<rect x="1405" y="373" width="8.5" fill="#21ff5f"/>
<rect x="1413" y="373" width="8.5" fill="#30ff5c"/>
<rect x="1421" y="373" width="8.5" fill="#40ff5a"/>
<rect x="1429" y="373" width="8.5" fill="#52ff57"/>
<rect x="1437" y="373" width="8.5" fill="#65ff55"/>
<rect x="1445" y="373" width="8.5" fill="#79ff52"/>
<rect x="1453" y="373" width="8.5" fill="#8fff4f"/>
<rect x="1461" y="373" width="8.5" fill="#a6ff4c"/>
<rect x="1469" y="373" width="8.5" fill="#beff49"/>
<rect x="1477" y="373" width="8.5" fill="#d8ff46"/>
<rect x="1485" y="373" width="8.5" fill="#f4ff43"/>
<rect x="1493" y="373" width="8.5" fill="#ffee3b"/>
<rect x="1501" y="373" width="8.5" fill="#ffd532"/>
<rect x="1509" y="373" width="8.5" fill="#ffc12b"/>
<rect x="1517" y="373" width="8.5" fill="#ffae24"/>
<rect x="1525" y="373" width="8.5" fill="#ff9f1e"/>
<rect x="1533" y="373" width="8.5" fill="#ff911a"/>
<rect x="1541" y="373" width="8.5" fill="#ff8415"/>
<rect x="1549" y="373" width="8.5" fill="#ff7912"/>
<rect x="1557" y="373" width="8.5" fill="#ff6f0e"/>
<rect x="1565" y="373" width="8.5" fill="#ff660b"/>
<rect x="1573" y="373" width="8.5" fill="#ff5e09"/>
<rect x="1581" y="373" width="8.5" fill="#ff5707"/>
<rect x="1589" y="373" width="8.5" fill="#ff5005"/>
<rect x="1597" y="373" width="8.5" fill="#ff4a03"/>
<rect x="1605" y="373" width="8.5" fill="#ff4501"/>
<rect x="1613" y="373" width="8.5" fill="#ff4000"/>
<rect x="1621" y="373" width="8.5" fill="#ff3b00"/>
<rect x="1629" y="373" width="8.5" fill="#ff3700"/>
<rect x="1637" y="373" width="8.5" fill="#f30"/>
<rect x="1645" y="373" width="8.5" fill="#ff2f00"/>
<rect x="1317" y="381" width="8.5" fill="#00ff82"/>
<rect x="1325" y="381" width="8.5" fill="#00ff80"/>
<rect x="1333" y="381" width="8.5" fill="#00ff7f"/>
<rect x="1341" y="381" width="8.5" fill="#00ff7d"/>
<rect x="1349" y="381" width="8.5" fill="#00ff7b"/>
<rect x="1357" y="381" width="8.5" fill="#00ff79"/>
<rect x="1365" y="381" width="8.5" fill="#0f7"/>
<rect x="1373" y="381" width="8.5" fill="#00ff75"/>
<rect x="1381" y="381" width="8.5" fill="#03ff73"/>
<rect x="1389" y="381" width="8.5" fill="#0dff71"/>
<rect x="1397" y="381" width="8.5" fill="#1aff6e"/>
<rect x="1405" y="381" width="8.5" fill="#29ff6c"/>
<rect x="1413" y="381" width="8.5" fill="#39ff6a"/>
<rect x="1421" y="381" width="8.5" fill="#4bff67"/>
<rect x="1429" y="381" width="8.5" fill="#5eff65"/>
<rect x="1437" y="381" width="8.5" fill="#72ff62"/>
<rect x="1445" y="381" width="8.5" fill="#88ff60"/>
<rect x="1453" y="381" width="8.5" fill="#a0ff5d"/>
<rect x="1461" y="381" width="8.5" fill="#b9ff5a"/>
<rect x="1469" y="381" width="8.5" fill="#d3ff57"/>
<rect x="1477" y="381" width="8.5" fill="#f0ff54"/>
<rect x="1485" y="381" width="8.5" fill="#fff14c"/>
<rect x="1493" y="381" width="8.5" fill="#ffd741"/>
<rect x="1501" y="381" width="8.5" fill="#ffc138"/>
<rect x="1509" y="381" width="8.5" fill="#ffaf30"/>
<rect x="1517" y="381" width="8.5" fill="#ff9e29"/>
<rect x="1525" y="381" width="8.5" fill="#ff9023"/>
<rect x="1533" y="381" width="8.5" fill="#ff831e"/>
<rect x="1541" y="381" width="8.5" fill="#ff781a"/>
<rect x="1549" y="381" width="8.5" fill="#ff6e16"/>
<rect x="1557" y="381" width="8.5" fill="#ff6512"/>
<rect x="1565" y="381" width="8.5" fill="#ff5c0f"/>
<rect x="1573" y="381" width="8.5" fill="#ff550c"/>
<rect x="1581" y="381" width="8.5" fill="#ff4e0a"/>
<rect x="1589" y="381" width="8.5" fill="#ff4807"/>
<rect x="1597" y="381" width="8.5" fill="#ff4306"/>
<rect x="1605" y="381" width="8.5" fill="#ff3e04"/>
<rect x="1613" y="381" width="8.5" fill="#ff3902"/>
<rect x="1621" y="381" width="8.5" fill="#ff3501"/>
<rect x="1629" y="381" width="8.5" fill="#ff3100"/>
<rect x="1637" y="381" width="8.5" fill="#ff2d00"/>
<rect x="1645" y="381" width="8.5" fill="#ff2900"/>
<rect x="1653" y="381" width="8.5" fill="#ff2600"/>
<rect x="1309" y="389" width="8.5" fill="#00ff91"/>
<rect x="1317" y="389" width="8.5" fill="#00ff90"/>
<rect x="1325" y="389" width="8.5" fill="#00ff8e"/>
<rect x="1333" y="389" width="8.5" fill="#00ff8d"/>
<rect x="1341" y="389" width="8.5" fill="#00ff8b"/>
<rect x="1349" y="389" width="8.5" fill="#00ff89"/>
<rect x="1357" y="389" width="8.5" fill="#00ff87"/>
<rect x="1365" y="389" width="8.5" fill="#00ff85"/>
<rect x="1373" y="389" width="8.5" fill="#00ff83"/>
<rect x="1381" y="389" width="8.5" fill="#07ff82"/>
<rect x="1389" y="389" width="8.5" fill="#13ff7f"/>
<rect x="1397" y="389" width="8.5" fill="#21ff7d"/>
<rect x="1405" y="389" width="8.5" fill="#31ff7b"/>
<rect x="1413" y="389" width="8.5" fill="#43ff79"/>
<rect x="1421" y="389" width="8.5" fill="#56ff77"/>
<rect x="1429" y="389" width="8.5" fill="#6bff74"/>
<rect x="1437" y="389" width="8.5" fill="#81ff72"/>
<rect x="1445" y="389" width="8.5" fill="#99ff6f"/>
<rect x="1453" y="389" width="8.5" fill="#b3ff6c"/>
<rect x="1461" y="389" width="8.5" fill="#ceff6a"/>
<rect x="1469" y="389" width="8.5" fill="#ebff67"/>
<rect x="1477" y="389" width="8.5" fill="#fff460"/>
<rect x="1485" y="389" width="8.5" fill="#ffd952"/>
<rect x="1493" y="389" width="8.5" fill="#ffc247"/>
<rect x="1501" y="389" width="8.5" fill="#ffaf3e"/>
<rect x="1509" y="389" width="8.5" fill="#ff9e35"/>
<rect x="1517" y="389" width="8.5" fill="#ff8f2e"/>
<rect x="1525" y="389" width="8.5" fill="#ff8228"/>
<rect x="1533" y="389" width="8.5" fill="#ff7623"/>
<rect x="1541" y="389" width="8.5" fill="#ff6c1e"/>
<rect x="1549" y="389" width="8.5" fill="#ff631a"/>
<rect x="1557" y="389" width="8.5" fill="#ff5b16"/>
<rect x="1565" y="389" width="8.5" fill="#ff5313"/>
<rect x="1573" y="389" width="8.5" fill="#ff4c10"/>
<rect x="1581" y="389" width="8.5" fill="#ff460d"/>
<rect x="1589" y="389" width="8.5" fill="#ff410b"/>
<rect x="1597" y="389" width="8.5" fill="#ff3b08"/>
<rect x="1605" y="389" width="8.5" fill="#ff3706"/>
<rect x="1613" y="389" width="8.5" fill="#ff3205"/>
<rect x="1621" y="389" width="8.5" fill="#ff2e03"/>
<rect x="1629" y="389" width="8.5" fill="#ff2b02"/>
<rect x="1637" y="389" width="8.5" fill="#ff2701"/>
<rect x="1645" y="389" width="8.5" fill="#ff2400"/>
<rect x="1653" y="389" width="8.5" fill="#ff2100"/>
<rect x="1661" y="389" width="8.5" fill="#ff1e00"/>
<rect x="1669" y="389" width="8.5" fill="#ff1c00"/>
<rect x="1309" y="397" width="8.5" fill="#00ffa0"/>
<rect x="1317" y="397" width="8.5" fill="#00ff9f"/>
<rect x="1325" y="397" width="8.5" fill="#00ff9d"/>
<rect x="1333" y="397" width="8.5" fill="#00ff9c"/>
<rect x="1341" y="397" width="8.5" fill="#00ff9a"/>
<rect x="1349" y="397" width="8.5" fill="#0f9"/>
<rect x="1357" y="397" width="8.5" fill="#00ff97"/>
<rect x="1365" y="397" width="8.5" fill="#00ff95"/>
<rect x="1373" y="397" width="8.5" fill="#01ff94"/>
<rect x="1381" y="397" width="8.5" fill="#0cff92"/>
<rect x="1389" y="397" width="8.5" fill="#1aff90"/>
<rect x="1397" y="397" width="8.5" fill="#29ff8e"/>
<rect x="1405" y="397" width="8.5" fill="#3bff8c"/>
<rect x="1413" y="397" width="8.5" fill="#4eff8a"/>
<rect x="1421" y="397" width="8.5" fill="#63ff88"/>
<rect x="1429" y="397" width="8.5" fill="#7aff86"/>
<rect x="1437" y="397" width="8.5" fill="#92ff83"/>
<rect x="1445" y="397" width="8.5" fill="#acff81"/>
<rect x="1453" y="397" width="8.5" fill="#c8ff7e"/>
<rect x="1461" y="397" width="8.5" fill="#e6ff7c"/>
<rect x="1469" y="397" width="8.5" fill="#fff876"/>
<rect x="1477" y="397" width="8.5" fill="#ffdb66"/>
<rect x="1485" y="397" width="8.5" fill="#ffc358"/>
<rect x="1493" y="397" width="8.5" fill="#ffaf4d"/>
<rect x="1501" y="397" width="8.5" fill="#ff9d43"/>
<rect x="1509" y="397" width="8.5" fill="#ff8e3b"/>
<rect x="1517" y="397" width="8.5" fill="#ff8033"/>
<rect x="1525" y="397" width="8.5" fill="#ff752d"/>
<rect x="1533" y="397" width="8.5" fill="#ff6a27"/>
<rect x="1541" y="397" width="8.5" fill="#ff6122"/>
<rect x="1549" y="397" width="8.5" fill="#ff591e"/>
<rect x="1557" y="397" width="8.5" fill="#ff511a"/>
<rect x="1565" y="397" width="8.5" fill="#ff4a16"/>
<rect x="1573" y="397" width="8.5" fill="#ff4413"/>
<rect x="1581" y="397" width="8.5" fill="#ff3e10"/>
<rect x="1589" y="397" width="8.5" fill="#ff390e"/>
<rect x="1597" y="397" width="8.5" fill="#ff350b"/>
<rect x="1605" y="397" width="8.5" fill="#ff3009"/>
<rect x="1613" y="397" width="8.5" fill="#ff2c07"/>
<rect x="1621" y="397" width="8.5" fill="#ff2906"/>
<rect x="1629" y="397" width="8.5" fill="#ff2504"/>
<rect x="1637" y="397" width="8.5" fill="#ff2203"/>
<rect x="1645" y="397" width="8.5" fill="#ff1f02"/>
<rect x="1653" y="397" width="8.5" fill="#ff1c01"/>
<rect x="1661" y="397" width="8.5" fill="#ff1a00"/>
<rect x="1669" y="397" width="8.5" fill="#ff1800"/>
<rect x="1677" y="397" width="8.5" fill="#ff1500"/>
<rect x="1685" y="397" width="8.5" fill="#ff1300"/>
<rect x="1309" y="405" width="8.5" fill="#00ffb1"/>
<rect x="1317" y="405" width="8.5" fill="#00ffb0"/>
<rect x="1325" y="405" width="8.5" fill="#00ffae"/>
<rect x="1333" y="405" width="8.5" fill="#00ffad"/>
<rect x="1341" y="405" width="8.5" fill="#00ffac"/>
<rect x="1349" y="405" width="8.5" fill="#0fa"/>
<rect x="1357" y="405" width="8.5" fill="#00ffa9"/>
<rect x="1365" y="405" width="8.5" fill="#00ffa7"/>
<rect x="1373" y="405" width="8.5" fill="#05ffa6"/>
<rect x="1381" y="405" width="8.5" fill="#12ffa4"/>
<rect x="1389" y="405" width="8.5" fill="#21ffa3"/>
<rect x="1397" y="405" width="8.5" fill="#33ffa1"/>
<rect x="1405" y="405" width="8.5" fill="#46ff9f"/>
<rect x="1413" y="405" width="8.5" fill="#5bff9d"/>
<rect x="1421" y="405" width="8.5" fill="#72ff9b"/>
<rect x="1429" y="405" width="8.5" fill="#8bff99"/>
<rect x="1437" y="405" width="8.5" fill="#a5ff97"/>
<rect x="1445" y="405" width="8.5" fill="#c2ff95"/>
<rect x="1453" y="405" width="8.5" fill="#e1ff93"/>
<rect x="1461" y="405" width="8.5" fill="#fffc8f"/>
<rect x="1469" y="405" width="8.5" fill="#ffde7c"/>
<rect x="1477" y="405" width="8.5" fill="#ffc56b"/>
<rect x="1485" y="405" width="8.5" fill="#ffaf5e"/>
<rect x="1493" y="405" width="8.5" fill="#ff9d52"/>
<rect x="1501" y="405" width="8.5" fill="#ff8d48"/>
<rect x="1509" y="405" width="8.5" fill="#ff7f40"/>
<rect x="1517" y="405" width="8.5" fill="#ff7338"/>
<rect x="1525" y="405" width="8.5" fill="#ff6831"/>
<rect x="1533" y="405" width="8.5" fill="#ff5f2c"/>
<rect x="1541" y="405" width="8.5" fill="#ff5626"/>
<rect x="1549" y="405" width="8.5" fill="#ff4f22"/>
<rect x="1557" y="405" width="8.5" fill="#ff481e"/>
<rect x="1565" y="405" width="8.5" fill="#ff421a"/>
<rect x="1573" y="405" width="8.5" fill="#ff3c16"/>
<rect x="1581" y="405" width="8.5" fill="#ff3713"/>
<rect x="1589" y="405" width="8.5" fill="#ff3211"/>
<rect x="1597" y="405" width="8.5" fill="#ff2e0e"/>
<rect x="1605" y="405" width="8.5" fill="#ff2a0c"/>
<rect x="1613" y="405" width="8.5" fill="#ff260a"/>
<rect x="1621" y="405" width="8.5" fill="#ff2308"/>
<rect x="1629" y="405" width="8.5" fill="#ff2006"/>
<rect x="1637" y="405" width="8.5" fill="#ff1d05"/>
<rect x="1645" y="405" width="8.5" fill="#ff1a03"/>
<rect x="1653" y="405" width="8.5" fill="#ff1802"/>
<rect x="1661" y="405" width="8.5" fill="#ff1601"/>
<rect x="1669" y="405" width="8.5" fill="#ff1400"/>
<rect x="1677" y="405" width="8.5" fill="#ff1200"/>
<rect x="1685" y="405" width="8.5" fill="#ff1000"/>
<rect x="1693" y="405" width="8.5" fill="#ff0e00"/>
<rect x="1309" y="413" width="8.5" fill="#00ffc3"/>
<rect x="1317" y="413" width="8.5" fill="#00ffc2"/>
<rect x="1325" y="413" width="8.5" fill="#00ffc1"/>
<rect x="1333" y="413" width="8.5" fill="#00ffc0"/>
<rect x="1341" y="413" width="8.5" fill="#00ffbf"/>
<rect x="1349" y="413" width="8.5" fill="#00ffbe"/>
<rect x="1357" y="413" width="8.5" fill="#00ffbd"/>
<rect x="1365" y="413" width="8.5" fill="#0fb"/>
<rect x="1373" y="413" width="8.5" fill="#0affba"/>
<rect x="1381" y="413" width="8.5" fill="#19ffb9"/>
<rect x="1389" y="413" width="8.5" fill="#2affb8"/>
<rect x="1397" y="413" width="8.5" fill="#3dffb6"/>
<rect x="1405" y="413" width="8.5" fill="#53ffb5"/>
<rect x="1413" y="413" width="8.5" fill="#6affb3"/>
<rect x="1421" y="413" width="8.5" fill="#83ffb2"/>
<rect x="1429" y="413" width="8.5" fill="#9effb0"/>
<rect x="1437" y="413" width="8.5" fill="#bbffae"/>
<rect x="1445" y="413" width="8.5" fill="#dbffac"/>
<rect x="1453" y="413" width="8.5" fill="#fdffab"/>
<rect x="1461" y="413" width="8.5" fill="#ffe194"/>
<rect x="1469" y="413" width="8.5" fill="#ffc681"/>
<rect x="1477" y="413" width="8.5" fill="#ffaf71"/>
<rect x="1485" y="413" width="8.5" fill="#ff9c63"/>
<rect x="1493" y="413" width="8.5" fill="#ff8c57"/>
<rect x="1501" y="413" width="8.5" fill="#ff7e4d"/>
<rect x="1509" y="413" width="8.5" fill="#ff7145"/>
<rect x="1517" y="413" width="8.5" fill="#ff663d"/>
<rect x="1525" y="413" width="8.5" fill="#ff5d36"/>
<rect x="1533" y="413" width="8.5" fill="#ff5430"/>
<rect x="1541" y="413" width="8.5" fill="#ff4c2b"/>
<rect x="1549" y="413" width="8.5" fill="#ff4626"/>
<rect x="1557" y="413" width="8.5" fill="#ff3f21"/>
<rect x="1565" y="413" width="8.5" fill="#ff3a1d"/>
<rect x="1573" y="413" width="8.5" fill="#ff351a"/>
<rect x="1581" y="413" width="8.5" fill="#ff3017"/>
<rect x="1589" y="413" width="8.5" fill="#ff2c14"/>
<rect x="1597" y="413" width="8.5" fill="#ff2811"/>
<rect x="1605" y="413" width="8.5" fill="#ff240f"/>
<rect x="1613" y="413" width="8.5" fill="#ff210d"/>
<rect x="1621" y="413" width="8.5" fill="#ff1e0b"/>
<rect x="1629" y="413" width="8.5" fill="#ff1b09"/>
<rect x="1637" y="413" width="8.5" fill="#ff1807"/>
<rect x="1645" y="413" width="8.5" fill="#ff1606"/>
<rect x="1653" y="413" width="8.5" fill="#ff1404"/>
<rect x="1661" y="413" width="8.5" fill="#ff1203"/>
<rect x="1669" y="413" width="8.5" fill="#ff1002"/>
<rect x="1677" y="413" width="8.5" fill="#ff0e01"/>
<rect x="1685" y="413" width="8.5" fill="#ff0c00"/>
<rect x="1693" y="413" width="8.5" fill="#ff0b00"/>
<rect x="1701" y="413" width="8.5" fill="#ff0900"/>
<rect x="1709" y="413" width="8.5" fill="#ff0800"/>
<rect x="1309" y="421" width="16.5" fill="#00ffd7"/>
<rect x="1325" y="421" width="8.5" fill="#00ffd6"/>
<rect x="1333" y="421" width="16.5" fill="#00ffd5"/>
<rect x="1349" y="421" width="8.5" fill="#00ffd4"/>
<rect x="1357" y="421" width="8.5" fill="#00ffd3"/>
<rect x="1365" y="421" width="8.5" fill="#03ffd2"/>
<rect x="1373" y="421" width="8.5" fill="#11ffd1"/>
<rect x="1381" y="421" width="8.5" fill="#21ffd0"/>
<rect x="1389" y="421" width="8.5" fill="#34ffcf"/>
<rect x="1397" y="421" width="8.5" fill="#4affce"/>
<rect x="1405" y="421" width="8.5" fill="#61ffcd"/>
<rect x="1413" y="421" width="8.5" fill="#7bffcc"/>
<rect x="1421" y="421" width="8.5" fill="#96ffcb"/>
<rect x="1429" y="421" width="8.5" fill="#b4ffca"/>
<rect x="1437" y="421" width="8.5" fill="#d5ffc9"/>
<rect x="1445" y="421" width="8.5" fill="#f8ffc8"/>
<rect x="1453" y="421" width="8.5" fill="#ffe4b1"/>
<rect x="1461" y="421" width="8.5" fill="#ffc79a"/>
<rect x="1469" y="421" width="8.5" fill="#ffaf86"/>
<rect x="1477" y="421" width="8.5" fill="#ff9c76"/>
<rect x="1485" y="421" width="8.5" fill="#ff8b68"/>
<rect x="1493" y="421" width="8.5" fill="#ff7c5d"/>
<rect x="1501" y="421" width="8.5" fill="#ff6f52"/>
<rect x="1509" y="421" width="8.5" fill="#ff6449"/>
<rect x="1517" y="421" width="8.5" fill="#ff5a41"/>
<rect x="1525" y="421" width="8.5" fill="#ff523a"/>
<rect x="1533" y="421" width="8.5" fill="#ff4a34"/>
<rect x="1541" y="421" width="8.5" fill="#ff432f"/>
<rect x="1549" y="421" width="8.5" fill="#ff3d2a"/>
<rect x="1557" y="421" width="8.5" fill="#ff3725"/>
<rect x="1565" y="421" width="8.5" fill="#ff3221"/>
<rect x="1573" y="421" width="8.5" fill="#ff2d1d"/>
<rect x="1581" y="421" width="8.5" fill="#ff291a"/>
<rect x="1589" y="421" width="8.5" fill="#ff2517"/>
<rect x="1597" y="421" width="8.5" fill="#ff2214"/>
<rect x="1605" y="421" width="8.5" fill="#ff1f12"/>
<rect x="1613" y="421" width="8.5" fill="#ff1c0f"/>
<rect x="1621" y="421" width="8.5" fill="#ff190d"/>
<rect x="1629" y="421" width="8.5" fill="#ff160b"/>
<rect x="1637" y="421" width="8.5" fill="#ff1409"/>
<rect x="1645" y="421" width="8.5" fill="#ff1208"/>
<rect x="1653" y="421" width="8.5" fill="#ff1006"/>
<rect x="1661" y="421" width="8.5" fill="#ff0e05"/>
<rect x="1669" y="421" width="8.5" fill="#ff0c04"/>
<rect x="1677" y="421" width="8.5" fill="#ff0a03"/>
<rect x="1685" y="421" width="8.5" fill="#ff0902"/>
<rect x="1693" y="421" width="8.5" fill="#ff0801"/>
<rect x="1701" y="421" width="8.5" fill="#ff0600"/>
<rect x="1709" y="421" width="8.5" fill="#ff0500"/>
<rect x="1717" y="421" width="8.5" fill="#ff0400"/>
<rect x="1309" y="429" width="16.5" fill="#0fe"/>
<rect x="1325" y="429" width="24.5" fill="#00ffed"/>
<rect x="1349" y="429" width="16.5" fill="#00ffec"/>
<rect x="1365" y="429" width="8.5" fill="#08ffec"/>
<rect x="1373" y="429" width="8.5" fill="#18ffeb"/>
<rect x="1381" y="429" width="8.5" fill="#2bffeb"/>
<rect x="1389" y="429" width="8.5" fill="#40ffeb"/>
<rect x="1397" y="429" width="8.5" fill="#58ffea"/>
<rect x="1405" y="429" width="8.5" fill="#72ffea"/>
<rect x="1413" y="429" width="8.5" fill="#8effe9"/>
<rect x="1421" y="429" width="8.5" fill="#adffe9"/>
<rect x="1429" y="429" width="8.5" fill="#ceffe8"/>
<rect x="1437" y="429" width="8.5" fill="#f3ffe8"/>
<rect x="1445" y="429" width="8.5" fill="#ffe7d1"/>
<rect x="1453" y="429" width="8.5" fill="#ffc9b6"/>
<rect x="1461" y="429" width="8.5" fill="#ffb09f"/>
<rect x="1469" y="429" width="8.5" fill="#ff9b8b"/>
<rect x="1477" y="429" width="8.5" fill="#ff897b"/>
<rect x="1485" y="429" width="8.5" fill="#ff7a6d"/>
<rect x="1493" y="429" width="8.5" fill="#ff6d61"/>
<rect x="1501" y="429" width="8.5" fill="#ff6257"/>
<rect x="1509" y="429" width="8.5" fill="#ff584e"/>
<rect x="1517" y="429" width="8.5" fill="#ff4f46"/>
<rect x="1525" y="429" width="8.5" fill="#ff473f"/>
<rect x="1533" y="429" width="8.5" fill="#ff4038"/>
<rect x="1541" y="429" width="8.5" fill="#ff3a32"/>
<rect x="1549" y="429" width="8.5" fill="#ff352d"/>
<rect x="1557" y="429" width="8.5" fill="#ff2f29"/>
<rect x="1565" y="429" width="8.5" fill="#ff2b24"/>
<rect x="1573" y="429" width="8.5" fill="#ff2721"/>
<rect x="1581" y="429" width="8.5" fill="#ff231d"/>
<rect x="1589" y="429" width="8.5" fill="#ff1f1a"/>
<rect x="1597" y="429" width="8.5" fill="#ff1c17"/>
<rect x="1605" y="429" width="8.5" fill="#ff1914"/>
<rect x="1613" y="429" width="8.5" fill="#ff1712"/>
<rect x="1621" y="429" width="8.5" fill="#ff1410"/>
<rect x="1629" y="429" width="8.5" fill="#ff120e"/>
<rect x="1637" y="429" width="8.5" fill="#ff100c"/>
<rect x="1645" y="429" width="8.5" fill="#ff0e0a"/>
<rect x="1653" y="429" width="8.5" fill="#ff0c08"/>
<rect x="1661" y="429" width="8.5" fill="#ff0a07"/>
<rect x="1669" y="429" width="8.5" fill="#ff0906"/>
<rect x="1677" y="429" width="8.5" fill="#ff0704"/>
<rect x="1685" y="429" width="8.5" fill="#ff0603"/>
<rect x="1693" y="429" width="8.5" fill="#ff0502"/>
<rect x="1701" y="429" width="8.5" fill="#ff0401"/>
<rect x="1709" y="429" width="8.5" fill="#ff0301"/>
<rect x="1717" y="429" width="8.5" fill="#ff0200"/>
<rect x="1725" y="429" width="8.5" fill="#ff0100"/>
<rect x="1733" y="429" width="8.5" fill="#f00"/>
<rect x="1309" y="437" width="24.5" fill="#00f7ff"/>
<rect x="1333" y="437" width="24.5" fill="#00f6ff"/>
<rect x="1357" y="437" width="8.5" fill="#01f6ff"/>
<rect x="1365" y="437" width="8.5" fill="#0ff5ff"/>
<rect x="1373" y="437" width="8.5" fill="#20f5ff"/>
<rect x="1381" y="437" width="8.5" fill="#34f5ff"/>
<rect x="1389" y="437" width="8.5" fill="#4bf4ff"/>
<rect x="1397" y="437" width="8.5" fill="#64f4ff"/>
<rect x="1405" y="437" width="8.5" fill="#7ff4ff"/>
<rect x="1413" y="437" width="8.5" fill="#9df3ff"/>
<rect x="1421" y="437" width="8.5" fill="#bef3ff"/>
<rect x="1429" y="437" width="8.5" fill="#e1f3ff"/>
<rect x="1437" y="437" width="8.5" fill="#ffebf7"/>
<rect x="1445" y="437" width="8.5" fill="#ffcad5"/>
<rect x="1453" y="437" width="8.5" fill="#ffb0ba"/>
<rect x="1461" y="437" width="8.5" fill="#ff9aa3"/>
<rect x="1469" y="437" width="8.5" fill="#ff8890"/>
<rect x="1477" y="437" width="8.5" fill="#ff7880"/>
<rect x="1485" y="437" width="8.5" fill="#ff6b72"/>
<rect x="1493" y="437" width="8.5" fill="#ff5f66"/>
<rect x="1501" y="437" width="8.5" fill="#ff555b"/>
<rect x="1509" y="437" width="8.5" fill="#ff4c52"/>
<rect x="1517" y="437" width="8.5" fill="#ff454a"/>
<rect x="1525" y="437" width="8.5" fill="#ff3e43"/>
<rect x="1533" y="437" width="8.5" fill="#ff373c"/>
<rect x="1541" y="437" width="8.5" fill="#ff3236"/>
<rect x="1549" y="437" width="8.5" fill="#ff2d31"/>
<rect x="1557" y="437" width="8.5" fill="#ff282c"/>
<rect x="1565" y="437" width="8.5" fill="#ff2428"/>
<rect x="1573" y="437" width="8.5" fill="#ff2024"/>
<rect x="1581" y="437" width="8.5" fill="#ff1d20"/>
<rect x="1589" y="437" width="8.5" fill="#ff1a1d"/>
<rect x="1597" y="437" width="8.5" fill="#ff171a"/>
<rect x="1605" y="437" width="8.5" fill="#ff1417"/>
<rect x="1613" y="437" width="8.5" fill="#ff1215"/>
<rect x="1621" y="437" width="8.5" fill="#ff1012"/>
<rect x="1629" y="437" width="8.5" fill="#ff0e10"/>
<rect x="1637" y="437" width="8.5" fill="#ff0c0e"/>
<rect x="1645" y="437" width="8.5" fill="#ff0a0c"/>
<rect x="1653" y="437" width="8.5" fill="#ff080b"/>
<rect x="1661" y="437" width="8.5" fill="#ff0709"/>
<rect x="1669" y="437" width="8.5" fill="#ff0608"/>
<rect x="1677" y="437" width="8.5" fill="#ff0406"/>
<rect x="1685" y="437" width="8.5" fill="#ff0305"/>
<rect x="1693" y="437" width="8.5" fill="#ff0204"/>
<rect x="1701" y="437" width="8.5" fill="#ff0103"/>
<rect x="1709" y="437" width="8.5" fill="#ff0102"/>
<rect x="1717" y="437" width="8.5" fill="#ff0001"/>
<rect x="1725" y="437" width="24.5" fill="#f00"/>
<rect x="1309" y="445" width="8.5" fill="#00dfff"/>
<rect x="1317" y="445" width="16.5" fill="#00deff"/>
<rect x="1333" y="445" width="8.5" fill="#0df"/>
<rect x="1341" y="445" width="8.5" fill="#00dcff"/>
<rect x="1349" y="445" width="8.5" fill="#00dbff"/>
<rect x="1357" y="445" width="8.5" fill="#05dbff"/>
<rect x="1365" y="445" width="8.5" fill="#14daff"/>
<rect x="1373" y="445" width="8.5" fill="#25d9ff"/>
<rect x="1381" y="445" width="8.5" fill="#39d8ff"/>
<rect x="1389" y="445" width="8.5" fill="#50d7ff"/>
<rect x="1397" y="445" width="8.5" fill="#68d6ff"/>
<rect x="1405" y="445" width="8.5" fill="#82d5ff"/>
<rect x="1413" y="445" width="8.5" fill="#9fd4ff"/>
<rect x="1421" y="445" width="8.5" fill="#bed3ff"/>
<rect x="1429" y="445" width="8.5" fill="#e0d2ff"/>
<rect x="1437" y="445" width="8.5" fill="#ffccfa"/>
<rect x="1445" y="445" width="8.5" fill="#ffb0d9"/>
<rect x="1453" y="445" width="8.5" fill="#ff99be"/>
<rect x="1461" y="445" width="8.5" fill="#ff86a8"/>
<rect x="1469" y="445" width="8.5" fill="#ff7695"/>
<rect x="1477" y="445" width="8.5" fill="#ff6985"/>
<rect x="1485" y="445" width="8.5" fill="#ff5d77"/>
<rect x="1493" y="445" width="8.5" fill="#ff536a"/>
<rect x="1501" y="445" width="8.5" fill="#ff4a60"/>
<rect x="1509" y="445" width="8.5" fill="#ff4256"/>
<rect x="1517" y="445" width="8.5" fill="#ff3b4e"/>
<rect x="1525" y="445" width="8.5" fill="#ff3547"/>
<rect x="1533" y="445" width="8.5" fill="#ff2f40"/>
<rect x="1541" y="445" width="8.5" fill="#ff2a3a"/>
<rect x="1549" y="445" width="8.5" fill="#ff2535"/>
<rect x="1557" y="445" width="8.5" fill="#ff2130"/>
<rect x="1565" y="445" width="8.5" fill="#ff1e2b"/>
<rect x="1573" y="445" width="8.5" fill="#ff1a27"/>
<rect x="1581" y="445" width="8.5" fill="#ff1724"/>
<rect x="1589" y="445" width="8.5" fill="#ff1420"/>
<rect x="1597" y="445" width="8.5" fill="#ff121d"/>
<rect x="1605" y="445" width="8.5" fill="#ff101a"/>
<rect x="1613" y="445" width="8.5" fill="#ff0d17"/>
<rect x="1621" y="445" width="8.5" fill="#ff0b15"/>
<rect x="1629" y="445" width="8.5" fill="#ff0a13"/>
<rect x="1637" y="445" width="8.5" fill="#ff0811"/>
<rect x="1645" y="445" width="8.5" fill="#ff070f"/>
<rect x="1653" y="445" width="8.5" fill="#ff050d"/>
<rect x="1661" y="445" width="8.5" fill="#ff040b"/>
<rect x="1669" y="445" width="8.5" fill="#ff030a"/>
<rect x="1677" y="445" width="8.5" fill="#ff0208"/>
<rect x="1685" y="445" width="8.5" fill="#ff0107"/>
<rect x="1693" y="445" width="8.5" fill="#ff0006"/>
<rect x="1701" y="445" width="8.5" fill="#ff0004"/>
<rect x="1709" y="445" width="16.5" fill="#ff0003"/>
<rect x="1301" y="453" width="8.5" fill="#00caff"/>
<rect x="1309" y="453" width="8.5" fill="#00c9ff"/>
<rect x="1317" y="453" width="8.5" fill="#00c8ff"/>
<rect x="1325" y="453" width="8.5" fill="#00c7ff"/>
<rect x="1333" y="453" width="8.5" fill="#00c5ff"/>
<rect x="1341" y="453" width="8.5" fill="#00c4ff"/>
<rect x="1349" y="453" width="8.5" fill="#00c3ff"/>
<rect x="1357" y="453" width="8.5" fill="#0ac2ff"/>
<rect x="1365" y="453" width="8.5" fill="#19c1ff"/>
<rect x="1373" y="453" width="8.5" fill="#2bbfff"/>
<rect x="1381" y="453" width="8.5" fill="#3ebeff"/>
<rect x="1389" y="453" width="8.5" fill="#54bdff"/>
<rect x="1397" y="453" width="8.5" fill="#6cbbff"/>
<rect x="1405" y="453" width="8.5" fill="#85baff"/>
<rect x="1413" y="453" width="8.5" fill="#a1b8ff"/>
<rect x="1421" y="453" width="8.5" fill="#bfb6ff"/>
<rect x="1429" y="453" width="8.5" fill="#dfb5ff"/>
<rect x="1437" y="453" width="8.5" fill="#ffb1fc"/>
<rect x="1445" y="453" width="8.5" fill="#ff99dc"/>
<rect x="1453" y="453" width="8.5" fill="#ff85c2"/>
<rect x="1461" y="453" width="8.5" fill="#ff74ac"/>
<rect x="1469" y="453" width="8.5" fill="#f69"/>
<rect x="1477" y="453" width="8.5" fill="#ff5a89"/>
<rect x="1485" y="453" width="8.5" fill="#ff507b"/>
<rect x="1493" y="453" width="8.5" fill="#ff476f"/>
<rect x="1501" y="453" width="8.5" fill="#ff3f64"/>
<rect x="1509" y="453" width="8.5" fill="#ff385b"/>
<rect x="1517" y="453" width="8.5" fill="#ff3252"/>
<rect x="1525" y="453" width="8.5" fill="#ff2c4b"/>
<rect x="1533" y="453" width="8.5" fill="#ff2744"/>
<rect x="1541" y="453" width="8.5" fill="#ff233e"/>
<rect x="1549" y="453" width="8.5" fill="#ff1f38"/>
<rect x="1557" y="453" width="8.5" fill="#ff1b33"/>
<rect x="1565" y="453" width="8.5" fill="#ff182f"/>
<rect x="1573" y="453" width="8.5" fill="#ff152a"/>
<rect x="1581" y="453" width="8.5" fill="#ff1227"/>
<rect x="1589" y="453" width="8.5" fill="#ff1023"/>
<rect x="1597" y="453" width="8.5" fill="#ff0d20"/>
<rect x="1605" y="453" width="8.5" fill="#ff0b1d"/>
<rect x="1613" y="453" width="8.5" fill="#ff091a"/>
<rect x="1621" y="453" width="8.5" fill="#ff0818"/>
<rect x="1629" y="453" width="8.5" fill="#ff0615"/>
<rect x="1637" y="453" width="8.5" fill="#ff0513"/>
<rect x="1645" y="453" width="8.5" fill="#ff0311"/>
<rect x="1653" y="453" width="8.5" fill="#ff020f"/>
<rect x="1661" y="453" width="8.5" fill="#ff010d"/>
<rect x="1669" y="453" width="8.5" fill="#ff000c"/>
<rect x="1677" y="453" width="8.5" fill="#ff000a"/>
<rect x="1685" y="453" width="8.5" fill="#ff0009"/>
<rect x="1693" y="453" width="8.5" fill="#ff0007"/>
<rect x="1701" y="453" width="8.5" fill="#ff0006"/>
<rect x="1301" y="461" width="8.5" fill="#00b5ff"/>
<rect x="1309" y="461" width="8.5" fill="#00b4ff"/>
<rect x="1317" y="461" width="8.5" fill="#00b3ff"/>
<rect x="1325" y="461" width="8.5" fill="#00b1ff"/>
<rect x="1333" y="461" width="8.5" fill="#00b0ff"/>
<rect x="1341" y="461" width="8.5" fill="#00afff"/>
<rect x="1349" y="461" width="8.5" fill="#03adff"/>
<rect x="1357" y="461" width="8.5" fill="#0facff"/>
<rect x="1365" y="461" width="8.5" fill="#1eaaff"/>
<rect x="1373" y="461" width="8.5" fill="#30a8ff"/>
<rect x="1381" y="461" width="8.5" fill="#43a6ff"/>
<rect x="1389" y="461" width="8.5" fill="#58a5ff"/>
<rect x="1397" y="461" width="8.5" fill="#6fa3ff"/>
<rect x="1405" y="461" width="8.5" fill="#88a1ff"/>
<rect x="1413" y="461" width="8.5" fill="#a39fff"/>
<rect x="1421" y="461" width="8.5" fill="#bf9dff"/>
<rect x="1429" y="461" width="8.5" fill="#de9aff"/>
<rect x="1437" y="461" width="8.5" fill="#ff98ff"/>
<rect x="1445" y="461" width="8.5" fill="#ff83df"/>
<rect x="1453" y="461" width="8.5" fill="#ff72c6"/>
<rect x="1461" y="461" width="8.5" fill="#ff63b0"/>
<rect x="1469" y="461" width="8.5" fill="#ff579d"/>
<rect x="1477" y="461" width="8.5" fill="#ff4d8d"/>
<rect x="1485" y="461" width="8.5" fill="#ff437f"/>
<rect x="1493" y="461" width="8.5" fill="#ff3c73"/>
<rect x="1501" y="461" width="8.5" fill="#ff3568"/>
<rect x="1509" y="461" width="8.5" fill="#ff2e5f"/>
<rect x="1517" y="461" width="8.5" fill="#ff2956"/>
<rect x="1525" y="461" width="8.5" fill="#ff244e"/>
<rect x="1533" y="461" width="8.5" fill="#ff2048"/>
<rect x="1541" y="461" width="8.5" fill="#ff1c41"/>
<rect x="1549" y="461" width="8.5" fill="#ff183c"/>
<rect x="1557" y="461" width="8.5" fill="#ff1537"/>
<rect x="1565" y="461" width="8.5" fill="#ff1232"/>
<rect x="1573" y="461" width="8.5" fill="#ff102e"/>
<rect x="1581" y="461" width="8.5" fill="#ff0d2a"/>
<rect x="1589" y="461" width="8.5" fill="#ff0b26"/>
<rect x="1597" y="461" width="8.5" fill="#ff0923"/>
<rect x="1605" y="461" width="8.5" fill="#ff0720"/>
<rect x="1613" y="461" width="8.5" fill="#ff061d"/>
<rect x="1621" y="461" width="8.5" fill="#ff041a"/>
<rect x="1629" y="461" width="8.5" fill="#ff0318"/>
<rect x="1637" y="461" width="8.5" fill="#ff0215"/>
<rect x="1645" y="461" width="8.5" fill="#ff0113"/>
<rect x="1653" y="461" width="8.5" fill="#f01"/>
<rect x="1661" y="461" width="8.5" fill="#ff000f"/>
<rect x="1669" y="461" width="8.5" fill="#ff000e"/>
<rect x="1677" y="461" width="8.5" fill="#ff000c"/>
<rect x="1301" y="469" width="8.5" fill="#00a3ff"/>
<rect x="1309" y="469" width="8.5" fill="#00a1ff"/>
<rect x="1317" y="469" width="8.5" fill="#00a0ff"/>
<rect x="1325" y="469" width="8.5" fill="#009eff"/>
<rect x="1333" y="469" width="8.5" fill="#009cff"/>
<rect x="1341" y="469" width="8.5" fill="#009bff"/>
<rect x="1349" y="469" width="8.5" fill="#0799ff"/>
<rect x="1357" y="469" width="8.5" fill="#1497ff"/>
<rect x="1365" y="469" width="8.5" fill="#2395ff"/>
<rect x="1373" y="469" width="8.5" fill="#3493ff"/>
<rect x="1381" y="469" width="8.5" fill="#4791ff"/>
<rect x="1389" y="469" width="8.5" fill="#5c8fff"/>
<rect x="1397" y="469" width="8.5" fill="#728dff"/>
<rect x="1405" y="469" width="8.5" fill="#8a8aff"/>
<rect x="1413" y="469" width="8.5" fill="#a488ff"/>
<rect x="1421" y="469" width="8.5" fill="#c085ff"/>
<rect x="1429" y="469" width="8.5" fill="#dd83ff"/>
<rect x="1437" y="469" width="8.5" fill="#fd80ff"/>
<rect x="1445" y="469" width="8.5" fill="#ff6fe2"/>
<rect x="1453" y="469" width="8.5" fill="#ff60c9"/>
<rect x="1461" y="469" width="8.5" fill="#ff54b3"/>
<rect x="1469" y="469" width="8.5" fill="#ff49a1"/>
<rect x="1477" y="469" width="8.5" fill="#ff4091"/>
<rect x="1485" y="469" width="8.5" fill="#ff3883"/>
<rect x="1493" y="469" width="8.5" fill="#ff3177"/>
<rect x="1501" y="469" width="8.5" fill="#ff2b6c"/>
<rect x="1509" y="469" width="8.5" fill="#ff2662"/>
<rect x="1517" y="469" width="8.5" fill="#ff215a"/>
<rect x="1525" y="469" width="8.5" fill="#ff1d52"/>
<rect x="1533" y="469" width="8.5" fill="#ff194b"/>
<rect x="1541" y="469" width="8.5" fill="#ff1545"/>
<rect x="1549" y="469" width="8.5" fill="#ff123f"/>
<rect x="1557" y="469" width="8.5" fill="#ff0f3a"/>
<rect x="1565" y="469" width="8.5" fill="#ff0d35"/>
<rect x="1573" y="469" width="8.5" fill="#ff0b31"/>
<rect x="1581" y="469" width="8.5" fill="#ff092d"/>
<rect x="1589" y="469" width="8.5" fill="#ff0729"/>
<rect x="1597" y="469" width="8.5" fill="#ff0526"/>
<rect x="1605" y="469" width="8.5" fill="#ff0422"/>
<rect x="1613" y="469" width="8.5" fill="#ff021f"/>
<rect x="1621" y="469" width="8.5" fill="#ff011d"/>
<rect x="1629" y="469" width="8.5" fill="#ff001a"/>
<rect x="1637" y="469" width="8.5" fill="#ff0018"/>
<rect x="1645" y="469" width="8.5" fill="#ff0016"/>
<rect x="1653" y="469" width="8.5" fill="#ff0014"/>
<rect x="1661" y="469" width="8.5" fill="#ff0012"/>
<rect x="1301" y="477" width="8.5" fill="#0091ff"/>
<rect x="1309" y="477" width="8.5" fill="#0090ff"/>
<rect x="1317" y="477" width="8.5" fill="#008eff"/>
<rect x="1325" y="477" width="8.5" fill="#008cff"/>
<rect x="1333" y="477" width="8.5" fill="#008aff"/>
<rect x="1341" y="477" width="8.5" fill="#0188ff"/>
<rect x="1349" y="477" width="8.5" fill="#0b86ff"/>
<rect x="1357" y="477" width="8.5" fill="#1884ff"/>
<rect x="1365" y="477" width="8.5" fill="#2882ff"/>
<rect x="1373" y="477" width="8.5" fill="#3980ff"/>
<rect x="1381" y="477" width="8.5" fill="#4b7eff"/>
<rect x="1389" y="477" width="8.5" fill="#5f7bff"/>
<rect x="1397" y="477" width="8.5" fill="#7579ff"/>
<rect x="1405" y="477" width="8.5" fill="#8c76ff"/>
<rect x="1413" y="477" width="8.5" fill="#a573ff"/>
<rect x="1421" y="477" width="8.5" fill="#c071ff"/>
<rect x="1429" y="477" width="8.5" fill="#dd6eff"/>
<rect x="1437" y="477" width="8.5" fill="#fb6bff"/>
<rect x="1445" y="477" width="8.5" fill="#ff5de5"/>
<rect x="1453" y="477" width="8.5" fill="#ff51cc"/>
<rect x="1461" y="477" width="8.5" fill="#ff46b7"/>
<rect x="1469" y="477" width="8.5" fill="#ff3da5"/>
<rect x="1477" y="477" width="8.5" fill="#ff3595"/>
<rect x="1485" y="477" width="8.5" fill="#ff2e87"/>
<rect x="1493" y="477" width="8.5" fill="#ff287b"/>
<rect x="1501" y="477" width="8.5" fill="#ff2270"/>
<rect x="1509" y="477" width="8.5" fill="#ff1e66"/>
<rect x="1517" y="477" width="8.5" fill="#ff195e"/>
<rect x="1525" y="477" width="8.5" fill="#ff1656"/>
<rect x="1533" y="477" width="8.5" fill="#ff124f"/>
<rect x="1541" y="477" width="8.5" fill="#ff0f48"/>
<rect x="1549" y="477" width="8.5" fill="#ff0d42"/>
<rect x="1557" y="477" width="8.5" fill="#ff0a3d"/>
<rect x="1565" y="477" width="8.5" fill="#ff0838"/>
<rect x="1573" y="477" width="8.5" fill="#ff0634"/>
<rect x="1581" y="477" width="8.5" fill="#ff0530"/>
<rect x="1589" y="477" width="8.5" fill="#ff032c"/>
<rect x="1597" y="477" width="8.5" fill="#ff0228"/>
<rect x="1605" y="477" width="8.5" fill="#ff0125"/>
<rect x="1613" y="477" width="8.5" fill="#f02"/>
<rect x="1621" y="477" width="8.5" fill="#ff001f"/>
<rect x="1629" y="477" width="8.5" fill="#ff001d"/>
<rect x="1637" y="477" width="8.5" fill="#ff001a"/>
<rect x="1301" y="485" width="8.5" fill="#0081ff"/>
<rect x="1309" y="485" width="8.5" fill="#0080ff"/>
<rect x="1317" y="485" width="8.5" fill="#007eff"/>
<rect x="1325" y="485" width="8.5" fill="#007cff"/>
<rect x="1333" y="485" width="8.5" fill="#007aff"/>
<rect x="1341" y="485" width="8.5" fill="#0477ff"/>
<rect x="1349" y="485" width="8.5" fill="#0f75ff"/>
<rect x="1357" y="485" width="8.5" fill="#1d73ff"/>
<rect x="1365" y="485" width="8.5" fill="#2c71ff"/>
<rect x="1373" y="485" width="8.5" fill="#3d6eff"/>
<rect x="1381" y="485" width="8.5" fill="#4f6cff"/>
<rect x="1389" y="485" width="8.5" fill="#6369ff"/>
<rect x="1397" y="485" width="8.5" fill="#7866ff"/>
<rect x="1405" y="485" width="8.5" fill="#8f64ff"/>
<rect x="1413" y="485" width="8.5" fill="#a761ff"/>
<rect x="1421" y="485" width="8.5" fill="#c15eff"/>
<rect x="1429" y="485" width="8.5" fill="#dc5bff"/>
<rect x="1437" y="485" width="8.5" fill="#f958ff"/>
<rect x="1445" y="485" width="8.5" fill="#ff4de8"/>
<rect x="1453" y="485" width="8.5" fill="#ff42cf"/>
<rect x="1461" y="485" width="8.5" fill="#ff39ba"/>
<rect x="1469" y="485" width="8.5" fill="#ff31a8"/>
<rect x="1477" y="485" width="8.5" fill="#ff2a99"/>
<rect x="1485" y="485" width="8.5" fill="#ff248b"/>
<rect x="1493" y="485" width="8.5" fill="#ff1f7e"/>
<rect x="1501" y="485" width="8.5" fill="#ff1a74"/>
<rect x="1509" y="485" width="8.5" fill="#ff166a"/>
<rect x="1517" y="485" width="8.5" fill="#ff1361"/>
<rect x="1525" y="485" width="8.5" fill="#ff0f59"/>
<rect x="1533" y="485" width="8.5" fill="#ff0d52"/>
<rect x="1541" y="485" width="8.5" fill="#ff0a4c"/>
<rect x="1549" y="485" width="8.5" fill="#ff0846"/>
<rect x="1557" y="485" width="8.5" fill="#ff0640"/>
<rect x="1565" y="485" width="8.5" fill="#ff043b"/>
<rect x="1573" y="485" width="8.5" fill="#ff0337"/>
<rect x="1581" y="485" width="8.5" fill="#ff0133"/>
<rect x="1589" y="485" width="8.5" fill="#ff002f"/>
<rect x="1597" y="485" width="8.5" fill="#ff002b"/>
<rect x="1605" y="485" width="8.5" fill="#ff0028"/>
<rect x="1613" y="485" width="8.5" fill="#ff0025"/>
<rect x="1301" y="493" width="8.5" fill="#0073ff"/>
<rect x="1309" y="493" width="8.5" fill="#0071ff"/>
<rect x="1317" y="493" width="8.5" fill="#006fff"/>
<rect x="1325" y="493" width="8.5" fill="#006cff"/>
<rect x="1333" y="493" width="8.5" fill="#006aff"/>
<rect x="1341" y="493" width="8.5" fill="#0868ff"/>
<rect x="1349" y="493" width="8.5" fill="#1466ff"/>
<rect x="1357" y="493" width="8.5" fill="#2163ff"/>
<rect x="1365" y="493" width="8.5" fill="#3061ff"/>
<rect x="1373" y="493" width="8.5" fill="#415eff"/>
<rect x="1381" y="493" width="8.5" fill="#535cff"/>
<rect x="1389" y="493" width="8.5" fill="#6659ff"/>
<rect x="1397" y="493" width="8.5" fill="#7a56ff"/>
<rect x="1405" y="493" width="8.5" fill="#9053ff"/>
<rect x="1413" y="493" width="8.5" fill="#a850ff"/>
<rect x="1421" y="493" width="8.5" fill="#c14dff"/>
<rect x="1429" y="493" width="8.5" fill="#db4aff"/>
<rect x="1437" y="493" width="8.5" fill="#f847ff"/>
<rect x="1445" y="493" width="8.5" fill="#ff3eea"/>
<rect x="1453" y="493" width="8.5" fill="#ff35d2"/>
<rect x="1461" y="493" width="8.5" fill="#ff2dbe"/>
<rect x="1469" y="493" width="8.5" fill="#ff26ac"/>
<rect x="1477" y="493" width="8.5" fill="#ff209c"/>
<rect x="1485" y="493" width="8.5" fill="#ff1b8e"/>
<rect x="1493" y="493" width="8.5" fill="#ff1782"/>
<rect x="1501" y="493" width="8.5" fill="#ff1377"/>
<rect x="1509" y="493" width="8.5" fill="#ff0f6d"/>
<rect x="1517" y="493" width="8.5" fill="#ff0c65"/>
<rect x="1525" y="493" width="8.5" fill="#ff0a5d"/>
<rect x="1533" y="493" width="8.5" fill="#ff0755"/>
<rect x="1541" y="493" width="8.5" fill="#ff054f"/>
<rect x="1549" y="493" width="8.5" fill="#ff0449"/>
<rect x="1557" y="493" width="8.5" fill="#ff0243"/>
<rect x="1565" y="493" width="8.5" fill="#ff013e"/>
<rect x="1573" y="493" width="8.5" fill="#ff003a"/>
<rect x="1581" y="493" width="8.5" fill="#ff0035"/>
<rect x="1589" y="493" width="8.5" fill="#ff0032"/>
<rect x="1597" y="493" width="8.5" fill="#ff002e"/>
<rect x="1301" y="501" width="8.5" fill="#0065ff"/>
<rect x="1309" y="501" width="8.5" fill="#0063ff"/>
<rect x="1317" y="501" width="8.5" fill="#0061ff"/>
<rect x="1325" y="501" width="8.5" fill="#005eff"/>
<rect x="1333" y="501" width="8.5" fill="#025cff"/>
<rect x="1341" y="501" width="8.5" fill="#0c5aff"/>
<rect x="1349" y="501" width="8.5" fill="#1857ff"/>
<rect x="1357" y="501" width="8.5" fill="#2555ff"/>
<rect x="1365" y="501" width="8.5" fill="#3452ff"/>
<rect x="1373" y="501" width="8.5" fill="#454fff"/>
<rect x="1381" y="501" width="8.5" fill="#564dff"/>
<rect x="1389" y="501" width="8.5" fill="#694aff"/>
<rect x="1397" y="501" width="8.5" fill="#7d47ff"/>
<rect x="1405" y="501" width="8.5" fill="#9244ff"/>
<rect x="1413" y="501" width="8.5" fill="#a941ff"/>
<rect x="1421" y="501" width="8.5" fill="#c13eff"/>
<rect x="1429" y="501" width="8.5" fill="#db3bff"/>
<rect x="1437" y="501" width="8.5" fill="#f637ff"/>
<rect x="1445" y="501" width="8.5" fill="#ff30ed"/>
<rect x="1453" y="501" width="8.5" fill="#ff28d5"/>
<rect x="1461" y="501" width="8.5" fill="#ff22c1"/>
<rect x="1469" y="501" width="8.5" fill="#ff1caf"/>
<rect x="1477" y="501" width="8.5" fill="#ff179f"/>
<rect x="1485" y="501" width="8.5" fill="#ff1392"/>
<rect x="1493" y="501" width="8.5" fill="#ff0f85"/>
<rect x="1501" y="501" width="8.5" fill="#ff0c7b"/>
<rect x="1509" y="501" width="8.5" fill="#ff0971"/>
<rect x="1517" y="501" width="8.5" fill="#ff0768"/>
<rect x="1525" y="501" width="8.5" fill="#ff0560"/>
<rect x="1533" y="501" width="8.5" fill="#ff0359"/>
<rect x="1541" y="501" width="8.5" fill="#ff0152"/>
<rect x="1549" y="501" width="8.5" fill="#ff004c"/>
<rect x="1557" y="501" width="8.5" fill="#ff0046"/>
<rect x="1565" y="501" width="8.5" fill="#ff0041"/>
<rect x="1573" y="501" width="8.5" fill="#ff003d"/>
<rect x="1293" y="509" width="8.5" fill="#005aff"/>
<rect x="1301" y="509" width="8.5" fill="#0058ff"/>
<rect x="1309" y="509" width="8.5" fill="#0056ff"/>
<rect x="1317" y="509" width="8.5" fill="#0054ff"/>
<rect x="1325" y="509" width="8.5" fill="#0051ff"/>
<rect x="1333" y="509" width="8.5" fill="#054fff"/>
<rect x="1341" y="509" width="8.5" fill="#104cff"/>
<rect x="1349" y="509" width="8.5" fill="#1c4aff"/>
<rect x="1357" y="509" width="8.5" fill="#2947ff"/>
<rect x="1365" y="509" width="8.5" fill="#3845ff"/>
<rect x="1373" y="509" width="8.5" fill="#4842ff"/>
<rect x="1381" y="509" width="8.5" fill="#593fff"/>
<rect x="1389" y="509" width="8.5" fill="#6c3cff"/>
<rect x="1397" y="509" width="8.5" fill="#7f39ff"/>
<rect x="1405" y="509" width="8.5" fill="#9436ff"/>
<rect x="1413" y="509" width="8.5" fill="#a3f"/>
<rect x="1421" y="509" width="8.5" fill="#c130ff"/>
<rect x="1429" y="509" width="8.5" fill="#da2dff"/>
<rect x="1437" y="509" width="8.5" fill="#f42aff"/>
<rect x="1445" y="509" width="8.5" fill="#ff24ef"/>
<rect x="1453" y="509" width="8.5" fill="#ff1dd8"/>
<rect x="1461" y="509" width="8.5" fill="#ff18c4"/>
<rect x="1469" y="509" width="8.5" fill="#ff13b2"/>
<rect x="1477" y="509" width="8.5" fill="#ff0fa3"/>
<rect x="1485" y="509" width="8.5" fill="#ff0c95"/>
<rect x="1493" y="509" width="8.5" fill="#ff0989"/>
<rect x="1501" y="509" width="8.5" fill="#ff067e"/>
<rect x="1509" y="509" width="8.5" fill="#ff0474"/>
<rect x="1517" y="509" width="8.5" fill="#ff026b"/>
<rect x="1525" y="509" width="8.5" fill="#ff0163"/>
<rect x="1533" y="509" width="8.5" fill="#ff005c"/>
<rect x="1541" y="509" width="8.5" fill="#f05"/>
<rect x="1549" y="509" width="8.5" fill="#ff004f"/>
<rect x="1557" y="509" width="8.5" fill="#ff0049"/>
<rect x="1293" y="517" width="8.5" fill="#004eff"/>
<rect x="1301" y="517" width="8.5" fill="#004cff"/>
<rect x="1309" y="517" width="8.5" fill="#004aff"/>
<rect x="1317" y="517" width="8.5" fill="#0048ff"/>
<rect x="1325" y="517" width="8.5" fill="#0045ff"/>
<rect x="1333" y="517" width="8.5" fill="#0943ff"/>
<rect x="1341" y="517" width="8.5" fill="#1340ff"/>
<rect x="1349" y="517" width="8.5" fill="#203eff"/>
<rect x="1357" y="517" width="8.5" fill="#2d3bff"/>
<rect x="1365" y="517" width="8.5" fill="#3c39ff"/>
<rect x="1373" y="517" width="8.5" fill="#4b36ff"/>
<rect x="1381" y="517" width="8.5" fill="#5c33ff"/>
<rect x="1389" y="517" width="8.5" fill="#6e30ff"/>
<rect x="1397" y="517" width="8.5" fill="#812dff"/>
<rect x="1405" y="517" width="8.5" fill="#962aff"/>
<rect x="1413" y="517" width="8.5" fill="#ab27ff"/>
<rect x="1421" y="517" width="8.5" fill="#c224ff"/>
<rect x="1429" y="517" width="8.5" fill="#da21ff"/>
<rect x="1437" y="517" width="8.5" fill="#f31eff"/>
<rect x="1445" y="517" width="8.5" fill="#ff19f1"/>
<rect x="1453" y="517" width="8.5" fill="#ff14da"/>
<rect x="1461" y="517" width="8.5" fill="#ff0fc6"/>
<rect x="1469" y="517" width="8.5" fill="#ff0bb5"/>
<rect x="1477" y="517" width="8.5" fill="#ff08a6"/>
<rect x="1485" y="517" width="8.5" fill="#ff0598"/>
<rect x="1493" y="517" width="8.5" fill="#ff038c"/>
<rect x="1501" y="517" width="8.5" fill="#ff0181"/>
<rect x="1509" y="517" width="8.5" fill="#f07"/>
<rect x="1517" y="517" width="8.5" fill="#ff006e"/>
<rect x="1525" y="517" width="8.5" fill="#f06"/>
<rect x="1533" y="517" width="8.5" fill="#ff005f"/>
<rect x="1293" y="525" width="8.5" fill="#0043ff"/>
<rect x="1301" y="525" width="8.5" fill="#0041ff"/>
<rect x="1309" y="525" width="8.5" fill="#003fff"/>
<rect x="1317" y="525" width="8.5" fill="#003dff"/>
<rect x="1325" y="525" width="8.5" fill="#033aff"/>
<rect x="1333" y="525" width="8.5" fill="#0c38ff"/>
<rect x="1341" y="525" width="8.5" fill="#1735ff"/>
<rect x="1349" y="525" width="8.5" fill="#2333ff"/>
<rect x="1357" y="525" width="8.5" fill="#3130ff"/>
<rect x="1365" y="525" width="8.5" fill="#3f2dff"/>
<rect x="1373" y="525" width="8.5" fill="#4f2bff"/>
<rect x="1381" y="525" width="8.5" fill="#5f28ff"/>
<rect x="1389" y="525" width="8.5" fill="#7125ff"/>
<rect x="1397" y="525" width="8.5" fill="#8322ff"/>
<rect x="1405" y="525" width="8.5" fill="#971fff"/>
<rect x="1413" y="525" width="8.5" fill="#ac1cff"/>
<rect x="1421" y="525" width="8.5" fill="#c219ff"/>
<rect x="1429" y="525" width="8.5" fill="#d916ff"/>
<rect x="1437" y="525" width="8.5" fill="#f213ff"/>
<rect x="1445" y="525" width="8.5" fill="#ff0ff3"/>
<rect x="1453" y="525" width="8.5" fill="#ff0bdd"/>
<rect x="1461" y="525" width="8.5" fill="#ff07c9"/>
<rect x="1469" y="525" width="8.5" fill="#ff05b8"/>
<rect x="1477" y="525" width="8.5" fill="#ff02a9"/>
<rect x="1485" y="525" width="8.5" fill="#ff009b"/>
<rect x="1493" y="525" width="8.5" fill="#ff008f"/>
<rect x="1501" y="525" width="8.5" fill="#ff0084"/>
<rect x="1509" y="525" width="8.5" fill="#ff007a"/>
<rect x="1293" y="533" width="8.5" fill="#0039ff"/>
<rect x="1301" y="533" width="8.5" fill="#0037ff"/>
<rect x="1309" y="533" width="8.5" fill="#0035ff"/>
<rect x="1317" y="533" width="8.5" fill="#0032ff"/>
<rect x="1325" y="533" width="8.5" fill="#0630ff"/>
<rect x="1333" y="533" width="8.5" fill="#102dff"/>
<rect x="1341" y="533" width="8.5" fill="#1b2bff"/>
<rect x="1349" y="533" width="8.5" fill="#2728ff"/>
<rect x="1357" y="533" width="8.5" fill="#3426ff"/>
<rect x="1365" y="533" width="8.5" fill="#4323ff"/>
<rect x="1373" y="533" width="8.5" fill="#5221ff"/>
<rect x="1381" y="533" width="8.5" fill="#621eff"/>
<rect x="1389" y="533" width="8.5" fill="#731bff"/>
<rect x="1397" y="533" width="8.5" fill="#8518ff"/>
<rect x="1405" y="533" width="8.5" fill="#9915ff"/>
<rect x="1413" y="533" width="8.5" fill="#ad12ff"/>
<rect x="1421" y="533" width="8.5" fill="#c210ff"/>
<rect x="1429" y="533" width="8.5" fill="#d90dff"/>
<rect x="1437" y="533" width="8.5" fill="#f00aff"/>
<rect x="1445" y="533" width="8.5" fill="#ff07f5"/>
<rect x="1453" y="533" width="8.5" fill="#ff04df"/>
<rect x="1461" y="533" width="8.5" fill="#ff01cc"/>
<rect x="1469" y="533" width="8.5" fill="#f0b"/>
<rect x="1477" y="533" width="8.5" fill="#ff00ac"/>
<rect x="1485" y="533" width="8.5" fill="#ff009e"/>
<rect x="1493" y="533" width="8.5" fill="#ff0092"/>
<rect x="1293" y="541" width="8.5" fill="#0030ff"/>
<rect x="1301" y="541" width="8.5" fill="#002eff"/>
<rect x="1309" y="541" width="8.5" fill="#002bff"/>
<rect x="1317" y="541" width="8.5" fill="#0229ff"/>
<rect x="1325" y="541" width="8.5" fill="#0a27ff"/>
<rect x="1333" y="541" width="8.5" fill="#1324ff"/>
<rect x="1341" y="541" width="8.5" fill="#1e22ff"/>
<rect x="1349" y="541" width="8.5" fill="#2b1fff"/>
<rect x="1357" y="541" width="8.5" fill="#381dff"/>
<rect x="1365" y="541" width="8.5" fill="#461aff"/>
<rect x="1373" y="541" width="8.5" fill="#5517ff"/>
<rect x="1381" y="541" width="8.5" fill="#6515ff"/>
<rect x="1389" y="541" width="8.5" fill="#7512ff"/>
<rect x="1397" y="541" width="8.5" fill="#870fff"/>
<rect x="1405" y="541" width="8.5" fill="#9a0dff"/>
<rect x="1413" y="541" width="8.5" fill="#ae0aff"/>
<rect x="1421" y="541" width="8.5" fill="#c207ff"/>
<rect x="1429" y="541" width="8.5" fill="#d805ff"/>
<rect x="1437" y="541" width="8.5" fill="#ef02ff"/>
<rect x="1445" y="541" width="8.5" fill="#ff00f7"/>
<rect x="1453" y="541" width="8.5" fill="#ff00e1"/>
<rect x="1461" y="541" width="8.5" fill="#ff00ce"/>
<rect x="1469" y="541" width="8.5" fill="#ff00bd"/>
<rect x="1293" y="549" width="8.5" fill="#0027ff"/>
<rect x="1301" y="549" width="8.5" fill="#0025ff"/>
<rect x="1309" y="549" width="8.5" fill="#0023ff"/>
<rect x="1317" y="549" width="8.5" fill="#0420ff"/>
<rect x="1325" y="549" width="8.5" fill="#0d1eff"/>
<rect x="1333" y="549" width="8.5" fill="#171cff"/>
<rect x="1341" y="549" width="8.5" fill="#2219ff"/>
<rect x="1349" y="549" width="8.5" fill="#2e17ff"/>
<rect x="1357" y="549" width="8.5" fill="#3b14ff"/>
<rect x="1365" y="549" width="8.5" fill="#4912ff"/>
<rect x="1373" y="549" width="8.5" fill="#570fff"/>
<rect x="1381" y="549" width="8.5" fill="#670dff"/>
<rect x="1389" y="549" width="8.5" fill="#780aff"/>
<rect x="1397" y="549" width="8.5" fill="#8908ff"/>
<rect x="1405" y="549" width="8.5" fill="#9b05ff"/>
<rect x="1413" y="549" width="8.5" fill="#ae03ff"/>
<rect x="1421" y="549" width="8.5" fill="#c301ff"/>
<rect x="1429" y="549" width="8.5" fill="#d800ff"/>
<rect x="1437" y="549" width="8.5" fill="#e0f"/>
<rect x="1445" y="549" width="8.5" fill="#ff00f9"/>
<rect x="1453" y="549" width="8.5" fill="#ff00e3"/>
<rect x="1293" y="557" width="8.5" fill="#001fff"/>
<rect x="1301" y="557" width="8.5" fill="#001dff"/>
<rect x="1309" y="557" width="8.5" fill="#001bff"/>
<rect x="1317" y="557" width="8.5" fill="#0718ff"/>
<rect x="1325" y="557" width="8.5" fill="#1016ff"/>
<rect x="1333" y="557" width="8.5" fill="#1a14ff"/>
<rect x="1341" y="557" width="8.5" fill="#2511ff"/>
<rect x="1349" y="557" width="8.5" fill="#310fff"/>
<rect x="1357" y="557" width="8.5" fill="#3e0dff"/>
<rect x="1365" y="557" width="8.5" fill="#4c0aff"/>
<rect x="1373" y="557" width="8.5" fill="#5a08ff"/>
<rect x="1381" y="557" width="8.5" fill="#6906ff"/>
<rect x="1389" y="557" width="8.5" fill="#7a04ff"/>
<rect x="1397" y="557" width="8.5" fill="#8b02ff"/>
<rect x="1405" y="557" width="8.5" fill="#9c00ff"/>
<rect x="1413" y="557" width="8.5" fill="#af00ff"/>
<rect x="1421" y="557" width="8.5" fill="#c300ff"/>
<rect x="1429" y="557" width="8.5" fill="#d800ff"/>
<rect x="1293" y="565" width="8.5" fill="#0018ff"/>
<rect x="1301" y="565" width="8.5" fill="#0016ff"/>
<rect x="1309" y="565" width="8.5" fill="#0313ff"/>
<rect x="1317" y="565" width="8.5" fill="#0a11ff"/>
<rect x="1325" y="565" width="8.5" fill="#130fff"/>
<rect x="1333" y="565" width="8.5" fill="#1d0dff"/>
<rect x="1341" y="565" width="8.5" fill="#280bff"/>
<rect x="1349" y="565" width="8.5" fill="#3408ff"/>
<rect x="1357" y="565" width="8.5" fill="#4106ff"/>
<rect x="1365" y="565" width="8.5" fill="#4e04ff"/>
<rect x="1373" y="565" width="8.5" fill="#5d02ff"/>
<rect x="1381" y="565" width="8.5" fill="#6c01ff"/>
<rect x="1389" y="565" width="8.5" fill="#7c00ff"/>
<rect x="1397" y="565" width="8.5" fill="#8c00ff"/>
<rect x="1405" y="565" width="8.5" fill="#9e00ff"/>
<rect x="1285" y="573" width="8.5" fill="#0013ff"/>
<rect x="1293" y="573" width="8.5" fill="#01f"/>
<rect x="1301" y="573" width="8.5" fill="#000fff"/>
<rect x="1309" y="573" width="8.5" fill="#050dff"/>
<rect x="1317" y="573" width="8.5" fill="#0d0bff"/>
<rect x="1325" y="573" width="8.5" fill="#1609ff"/>
<rect x="1333" y="573" width="8.5" fill="#2107ff"/>
<rect x="1341" y="573" width="8.5" fill="#2c05ff"/>
<rect x="1349" y="573" width="8.5" fill="#3703ff"/>
<rect x="1357" y="573" width="8.5" fill="#4401ff"/>
<rect x="1365" y="573" width="8.5" fill="#5100ff"/>
<rect x="1373" y="573" width="8.5" fill="#5f00ff"/>
<rect x="1381" y="573" width="8.5" fill="#6e00ff"/>
<rect x="1389" y="573" width="8.5" fill="#7d00ff"/>
<rect x="1285" y="581" width="8.5" fill="#000dff"/>
<rect x="1293" y="581" width="8.5" fill="#000bff"/>
<rect x="1301" y="581" width="8.5" fill="#0109ff"/>
<rect x="1309" y="581" width="8.5" fill="#0807ff"/>
<rect x="1317" y="581" width="8.5" fill="#1005ff"/>
<rect x="1325" y="581" width="8.5" fill="#1a03ff"/>
<rect x="1333" y="581" width="8.5" fill="#2402ff"/>
<rect x="1341" y="581" width="8.5" fill="#2f00ff"/>
<rect x="1349" y="581" width="8.5" fill="#3a00ff"/>
<rect x="1357" y="581" width="8.5" fill="#4700ff"/>
<rect x="1365" y="581" width="8.5" fill="#5400ff"/>
<rect x="1285" y="589" width="8.5" fill="#0007ff"/>
<rect x="1293" y="589" width="8.5" fill="#0006ff"/>
<rect x="1301" y="589" width="8.5" fill="#0404ff"/>
<rect x="1309" y="589" width="8.5" fill="#0b02ff"/>
<rect x="1317" y="589" width="8.5" fill="#1301ff"/>
<rect x="1325" y="589" width="8.5" fill="#1d00ff"/>
<rect x="1333" y="589" width="8.5" fill="#2700ff"/>
<rect x="1341" y="589" width="8.5" fill="#3200ff"/>
<rect x="1349" y="589" width="8.5" fill="#3d00ff"/>
<rect x="1285" y="597" width="8.5" fill="#0003ff"/>
<rect x="1293" y="597" width="8.5" fill="#0001ff"/>
<rect x="1301" y="597" width="8.5" fill="#0600ff"/>
<rect x="1309" y="597" width="8.5" fill="#0e00ff"/>
<rect x="1317" y="597" width="8.5" fill="#1600ff"/>
<rect x="1325" y="597" width="8.5" fill="#1f00ff"/>
<rect x="1285" y="605" width="8.5" fill="#00f"/>
<rect x="1293" y="605" width="8.5" fill="#0200ff"/>
<rect x="1301" y="605" width="8.5" fill="#0900ff"/>
<rect x="1285" y="613" width="8.5" fill="#00f"/>
</g></g>
<path d="M1162.7 649.2V122H1908.3V643.2M1155.7 643.2H1908.3" fill="none" stroke="#8e8e8e" stroke-width="2"/>
<line x1="1250.18" y1="643.20" x2="1250.18" y2="649.70" stroke="#8e8e8e" stroke-width="2" />
<line x1="1155.70" y1="581.22" x2="1162.70" y2="581.22" stroke="#8e8e8e" stroke-width="2" />
<text transform="translate(1250.18 666.20) scale(1.0400 1)" font-size="16" fill="#dcdcdc" text-anchor="middle" stroke="#dcdcdc" stroke-width="0.5">0.1</text>
<text transform="translate(1154.70 587.72) scale(1.0400 1)" font-size="16" fill="#dcdcdc" text-anchor="end" stroke="#dcdcdc" stroke-width="0.5">0.1</text>
<line x1="1338.86" y1="643.20" x2="1338.86" y2="649.70" stroke="#8e8e8e" stroke-width="2" />
<line x1="1155.70" y1="519.24" x2="1162.70" y2="519.24" stroke="#8e8e8e" stroke-width="2" />
<text transform="translate(1338.86 666.20) scale(1.0400 1)" font-size="16" fill="#dcdcdc" text-anchor="middle" stroke="#dcdcdc" stroke-width="0.5">0.2</text>
<text transform="translate(1154.70 525.74) scale(1.0400 1)" font-size="16" fill="#dcdcdc" text-anchor="end" stroke="#dcdcdc" stroke-width="0.5">0.2</text>
<line x1="1427.54" y1="643.20" x2="1427.54" y2="649.70" stroke="#8e8e8e" stroke-width="2" />
<line x1="1155.70" y1="457.26" x2="1162.70" y2="457.26" stroke="#8e8e8e" stroke-width="2" />
<text transform="translate(1427.54 666.20) scale(1.0400 1)" font-size="16" fill="#dcdcdc" text-anchor="middle" stroke="#dcdcdc" stroke-width="0.5">0.3</text>
<text transform="translate(1154.70 463.76) scale(1.0400 1)" font-size="16" fill="#dcdcdc" text-anchor="end" stroke="#dcdcdc" stroke-width="0.5">0.3</text>
<line x1="1516.22" y1="643.20" x2="1516.22" y2="649.70" stroke="#8e8e8e" stroke-width="2" />
<line x1="1155.70" y1="395.28" x2="1162.70" y2="395.28" stroke="#8e8e8e" stroke-width="2" />
<text transform="translate(1516.22 666.20) scale(1.0400 1)" font-size="16" fill="#dcdcdc" text-anchor="middle" stroke="#dcdcdc" stroke-width="0.5">0.4</text>
<text transform="translate(1154.70 401.78) scale(1.0400 1)" font-size="16" fill="#dcdcdc" text-anchor="end" stroke="#dcdcdc" stroke-width="0.5">0.4</text>
<line x1="1604.90" y1="643.20" x2="1604.90" y2="649.70" stroke="#8e8e8e" stroke-width="2" />
<line x1="1155.70" y1="333.30" x2="1162.70" y2="333.30" stroke="#8e8e8e" stroke-width="2" />
<text transform="translate(1604.90 666.20) scale(1.0400 1)" font-size="16" fill="#dcdcdc" text-anchor="middle" stroke="#dcdcdc" stroke-width="0.5">0.5</text>
<text transform="translate(1154.70 339.80) scale(1.0400 1)" font-size="16" fill="#dcdcdc" text-anchor="end" stroke="#dcdcdc" stroke-width="0.5">0.5</text>
<line x1="1693.58" y1="643.20" x2="1693.58" y2="649.70" stroke="#8e8e8e" stroke-width="2" />
<line x1="1155.70" y1="271.32" x2="1162.70" y2="271.32" stroke="#8e8e8e" stroke-width="2" />
<text transform="translate(1693.58 666.20) scale(1.0400 1)" font-size="16" fill="#dcdcdc" text-anchor="middle" stroke="#dcdcdc" stroke-width="0.5">0.6</text>
<text transform="translate(1154.70 277.82) scale(1.0400 1)" font-size="16" fill="#dcdcdc" text-anchor="end" stroke="#dcdcdc" stroke-width="0.5">0.6</text>
<line x1="1782.26" y1="643.20" x2="1782.26" y2="649.70" stroke="#8e8e8e" stroke-width="2" />
<line x1="1155.70" y1="209.34" x2="1162.70" y2="209.34" stroke="#8e8e8e" stroke-width="2" />
<text transform="translate(1782.26 666.20) scale(1.0400 1)" font-size="16" fill="#dcdcdc" text-anchor="middle" stroke="#dcdcdc" stroke-width="0.5">0.7</text>
<text transform="translate(1154.70 215.84) scale(1.0400 1)" font-size="16" fill="#dcdcdc" text-anchor="end" stroke="#dcdcdc" stroke-width="0.5">0.7</text>
<line x1="1870.94" y1="643.20" x2="1870.94" y2="649.70" stroke="#8e8e8e" stroke-width="2" />
<line x1="1155.70" y1="147.36" x2="1162.70" y2="147.36" stroke="#8e8e8e" stroke-width="2" />
<text transform="translate(1870.94 666.20) scale(1.0400 1)" font-size="16" fill="#dcdcdc" text-anchor="middle" stroke="#dcdcdc" stroke-width="0.5">0.8</text>
<text transform="translate(1154.70 153.86) scale(1.0400 1)" font-size="16" fill="#dcdcdc" text-anchor="end" stroke="#dcdcdc" stroke-width="0.5">0.8</text>
<text transform="translate(1162.00 666.20) scale(1.0400 1)" font-size="16" fill="#dcdcdc" text-anchor="middle" stroke="#dcdcdc" stroke-width="0.5">0</text>
<text transform="translate(1155.20 651.50) scale(1.0400 1)" font-size="16" fill="#dcdcdc" text-anchor="end" stroke="#dcdcdc" stroke-width="0.5">0</text>
<text transform="translate(1519.50 115.70) scale(1.0300 1)" font-size="15.5" fill="#dcdcdc" text-anchor="middle" stroke="#dcdcdc" stroke-width="0.5">CIE 1931 xy</text>
<rect x="1431.3" y="431.0" width="15" height="15" fill="none" stroke="#0a0a0a" stroke-width="2.2" opacity="0.92"/>
<rect x="1721.6" y="430.3" width="15" height="15" fill="none" stroke="#f4f4f4" stroke-width="2.2" opacity="0.92"/>
<rect x="1340.2" y="194.5" width="15" height="15" fill="none" stroke="#f4f4f4" stroke-width="2.2" opacity="0.92"/>
<rect x="1287.0" y="597.9" width="15" height="15" fill="none" stroke="#f4f4f4" stroke-width="2.2" opacity="0.92"/>
<rect x="1309.0" y="431.2" width="15" height="15" fill="none" stroke="#f4f4f4" stroke-width="2.2" opacity="0.92"/>
<rect x="1468.6" y="527.9" width="15" height="15" fill="none" stroke="#f4f4f4" stroke-width="2.2" opacity="0.92"/>
<rect x="1532.8" y="313.6" width="15" height="15" fill="none" stroke="#f4f4f4" stroke-width="2.2" opacity="0.92"/>
<circle cx="1436.3" cy="441.1" r="4.6" fill="#e8e8e8" stroke="#0c0c0c" stroke-width="1.7"/>
<circle cx="1734.9" cy="436.1" r="4.6" fill="#e00000" stroke="#0c0c0c" stroke-width="1.7"/>
<circle cx="1372.4" cy="214.9" r="4.6" fill="#00a800" stroke="#0c0c0c" stroke-width="1.7"/>
<circle cx="1292.1" cy="610.1" r="4.6" fill="#1400c8" stroke="#0c0c0c" stroke-width="1.7"/>
<circle cx="1324.3" cy="443.2" r="4.6" fill="#00b8b0" stroke="#0c0c0c" stroke-width="1.7"/>
<circle cx="1468.6" cy="537.9" r="4.6" fill="#b000b0" stroke="#0c0c0c" stroke-width="1.7"/>
<circle cx="1536.1" cy="323.7" r="4.6" fill="#a8a800" stroke="#0c0c0c" stroke-width="1.7"/>
<circle cx="1437.4" cy="440.4" r="4.6" fill="#ffffff" stroke="#0c0c0c" stroke-width="1.7"/>
<rect x="1647.50" y="128.00" width="253.50" height="197.00" fill="#1e1e1e" />
<g clip-path="url(#ci)"><g filter="url(#bl2)"><rect x="1620.5" y="101.0" width="14.5" height="14.5" fill="#66ffb8"/><rect x="1634.5" y="101.0" width="14.5" height="14.5" fill="#6dffb8"/><rect x="1648.5" y="101.0" width="14.5" height="14.5" fill="#74ffb7"/><rect x="1662.5" y="101.0" width="14.5" height="14.5" fill="#7bffb7"/><rect x="1676.5" y="101.0" width="14.5" height="14.5" fill="#83ffb6"/><rect x="1690.5" y="101.0" width="14.5" height="14.5" fill="#8bffb6"/><rect x="1704.5" y="101.0" width="14.5" height="14.5" fill="#93ffb5"/><rect x="1718.5" y="101.0" width="14.5" height="14.5" fill="#9bffb5"/><rect x="1732.5" y="101.0" width="14.5" height="14.5" fill="#a3ffb5"/><rect x="1746.5" y="101.0" width="14.5" height="14.5" fill="#acffb4"/><rect x="1760.5" y="101.0" width="14.5" height="14.5" fill="#b4ffb4"/><rect x="1774.5" y="101.0" width="14.5" height="14.5" fill="#bdffb3"/><rect x="1788.5" y="101.0" width="14.5" height="14.5" fill="#c6ffb3"/><rect x="1802.5" y="101.0" width="14.5" height="14.5" fill="#d0ffb2"/><rect x="1816.5" y="101.0" width="14.5" height="14.5" fill="#d9ffb2"/><rect x="1830.5" y="101.0" width="14.5" height="14.5" fill="#e3ffb1"/><rect x="1844.5" y="101.0" width="14.5" height="14.5" fill="#edffb1"/><rect x="1858.5" y="101.0" width="14.5" height="14.5" fill="#f7ffb0"/><rect x="1872.5" y="101.0" width="14.5" height="14.5" fill="#fffdae"/><rect x="1886.5" y="101.0" width="14.5" height="14.5" fill="#fff3a7"/><rect x="1900.5" y="101.0" width="14.5" height="14.5" fill="#ffeaa0"/><rect x="1914.5" y="101.0" width="14.5" height="14.5" fill="#ffe199"/><rect x="1620.5" y="115.0" width="14.5" height="14.5" fill="#6affbf"/><rect x="1634.5" y="115.0" width="14.5" height="14.5" fill="#71ffbf"/><rect x="1648.5" y="115.0" width="14.5" height="14.5" fill="#79ffbe"/><rect x="1662.5" y="115.0" width="14.5" height="14.5" fill="#80ffbe"/><rect x="1676.5" y="115.0" width="14.5" height="14.5" fill="#88ffbe"/><rect x="1690.5" y="115.0" width="14.5" height="14.5" fill="#90ffbd"/><rect x="1704.5" y="115.0" width="14.5" height="14.5" fill="#99ffbd"/><rect x="1718.5" y="115.0" width="14.5" height="14.5" fill="#a1ffbc"/><rect x="1732.5" y="115.0" width="14.5" height="14.5" fill="#a9ffbc"/><rect x="1746.5" y="115.0" width="14.5" height="14.5" fill="#b2ffbb"/><rect x="1760.5" y="115.0" width="14.5" height="14.5" fill="#bbffbb"/><rect x="1774.5" y="115.0" width="14.5" height="14.5" fill="#c4ffbb"/><rect x="1788.5" y="115.0" width="14.5" height="14.5" fill="#ceffba"/><rect x="1802.5" y="115.0" width="14.5" height="14.5" fill="#d7ffba"/><rect x="1816.5" y="115.0" width="14.5" height="14.5" fill="#e1ffb9"/><rect x="1830.5" y="115.0" width="14.5" height="14.5" fill="#ebffb9"/><rect x="1844.5" y="115.0" width="14.5" height="14.5" fill="#f5ffb8"/><rect x="1858.5" y="115.0" width="14.5" height="14.5" fill="#fffeb7"/><rect x="1872.5" y="115.0" width="14.5" height="14.5" fill="#fff4b0"/><rect x="1886.5" y="115.0" width="14.5" height="14.5" fill="#ffeba8"/><rect x="1900.5" y="115.0" width="14.5" height="14.5" fill="#ffe2a1"/><rect x="1914.5" y="115.0" width="14.5" height="14.5" fill="#ffd99b"/><rect x="1620.5" y="129.0" width="14.5" height="14.5" fill="#6fffc7"/><rect x="1634.5" y="129.0" width="14.5" height="14.5" fill="#76ffc6"/><rect x="1648.5" y="129.0" width="14.5" height="14.5" fill="#7effc6"/><rect x="1662.5" y="129.0" width="14.5" height="14.5" fill="#86ffc6"/><rect x="1676.5" y="129.0" width="14.5" height="14.5" fill="#8effc5"/><rect x="1690.5" y="129.0" width="14.5" height="14.5" fill="#96ffc5"/><rect x="1704.5" y="129.0" width="14.5" height="14.5" fill="#9fffc4"/><rect x="1718.5" y="129.0" width="14.5" height="14.5" fill="#a7ffc4"/><rect x="1732.5" y="129.0" width="14.5" height="14.5" fill="#b0ffc4"/><rect x="1746.5" y="129.0" width="14.5" height="14.5" fill="#b9ffc3"/><rect x="1760.5" y="129.0" width="14.5" height="14.5" fill="#c2ffc3"/><rect x="1774.5" y="129.0" width="14.5" height="14.5" fill="#ccffc2"/><rect x="1788.5" y="129.0" width="14.5" height="14.5" fill="#d5ffc2"/><rect x="1802.5" y="129.0" width="14.5" height="14.5" fill="#dfffc2"/><rect x="1816.5" y="129.0" width="14.5" height="14.5" fill="#e9ffc1"/><rect x="1830.5" y="129.0" width="14.5" height="14.5" fill="#f4ffc1"/><rect x="1844.5" y="129.0" width="14.5" height="14.5" fill="#feffc0"/><rect x="1858.5" y="129.0" width="14.5" height="14.5" fill="#fff5b9"/><rect x="1872.5" y="129.0" width="14.5" height="14.5" fill="#ffecb1"/><rect x="1886.5" y="129.0" width="14.5" height="14.5" fill="#ffe2aa"/><rect x="1900.5" y="129.0" width="14.5" height="14.5" fill="#ffdaa3"/><rect x="1914.5" y="129.0" width="14.5" height="14.5" fill="#ffd19c"/><rect x="1620.5" y="143.0" width="14.5" height="14.5" fill="#74ffce"/><rect x="1634.5" y="143.0" width="14.5" height="14.5" fill="#7cffce"/><rect x="1648.5" y="143.0" width="14.5" height="14.5" fill="#83ffce"/><rect x="1662.5" y="143.0" width="14.5" height="14.5" fill="#8cffcd"/><rect x="1676.5" y="143.0" width="14.5" height="14.5" fill="#94ffcd"/><rect x="1690.5" y="143.0" width="14.5" height="14.5" fill="#9cffcd"/><rect x="1704.5" y="143.0" width="14.5" height="14.5" fill="#a5ffcc"/><rect x="1718.5" y="143.0" width="14.5" height="14.5" fill="#aeffcc"/><rect x="1732.5" y="143.0" width="14.5" height="14.5" fill="#b7ffcc"/><rect x="1746.5" y="143.0" width="14.5" height="14.5" fill="#c0ffcb"/><rect x="1760.5" y="143.0" width="14.5" height="14.5" fill="#caffcb"/><rect x="1774.5" y="143.0" width="14.5" height="14.5" fill="#d4ffcb"/><rect x="1788.5" y="143.0" width="14.5" height="14.5" fill="#deffca"/><rect x="1802.5" y="143.0" width="14.5" height="14.5" fill="#e8ffca"/><rect x="1816.5" y="143.0" width="14.5" height="14.5" fill="#f2ffca"/><rect x="1830.5" y="143.0" width="14.5" height="14.5" fill="#fdffc9"/><rect x="1844.5" y="143.0" width="14.5" height="14.5" fill="#fff7c2"/><rect x="1858.5" y="143.0" width="14.5" height="14.5" fill="#ffedba"/><rect x="1872.5" y="143.0" width="14.5" height="14.5" fill="#ffe3b2"/><rect x="1886.5" y="143.0" width="14.5" height="14.5" fill="#ffdaab"/><rect x="1900.5" y="143.0" width="14.5" height="14.5" fill="#ffd2a4"/><rect x="1914.5" y="143.0" width="14.5" height="14.5" fill="#ffca9e"/><rect x="1620.5" y="157.0" width="14.5" height="14.5" fill="#79ffd6"/><rect x="1634.5" y="157.0" width="14.5" height="14.5" fill="#81ffd6"/><rect x="1648.5" y="157.0" width="14.5" height="14.5" fill="#89ffd6"/><rect x="1662.5" y="157.0" width="14.5" height="14.5" fill="#92ffd6"/><rect x="1676.5" y="157.0" width="14.5" height="14.5" fill="#9affd5"/><rect x="1690.5" y="157.0" width="14.5" height="14.5" fill="#a3ffd5"/><rect x="1704.5" y="157.0" width="14.5" height="14.5" fill="#acffd5"/><rect x="1718.5" y="157.0" width="14.5" height="14.5" fill="#b5ffd4"/><rect x="1732.5" y="157.0" width="14.5" height="14.5" fill="#beffd4"/><rect x="1746.5" y="157.0" width="14.5" height="14.5" fill="#c8ffd4"/><rect x="1760.5" y="157.0" width="14.5" height="14.5" fill="#d2ffd4"/><rect x="1774.5" y="157.0" width="14.5" height="14.5" fill="#dcffd3"/><rect x="1788.5" y="157.0" width="14.5" height="14.5" fill="#e6ffd3"/><rect x="1802.5" y="157.0" width="14.5" height="14.5" fill="#f0ffd3"/><rect x="1816.5" y="157.0" width="14.5" height="14.5" fill="#fbffd2"/><rect x="1830.5" y="157.0" width="14.5" height="14.5" fill="#fff8cc"/><rect x="1844.5" y="157.0" width="14.5" height="14.5" fill="#ffeec4"/><rect x="1858.5" y="157.0" width="14.5" height="14.5" fill="#ffe4bb"/><rect x="1872.5" y="157.0" width="14.5" height="14.5" fill="#ffdbb4"/><rect x="1886.5" y="157.0" width="14.5" height="14.5" fill="#ffd3ac"/><rect x="1900.5" y="157.0" width="14.5" height="14.5" fill="#ffcba6"/><rect x="1914.5" y="157.0" width="14.5" height="14.5" fill="#ffc39f"/><rect x="1620.5" y="171.0" width="14.5" height="14.5" fill="#7effdf"/><rect x="1634.5" y="171.0" width="14.5" height="14.5" fill="#87ffdf"/><rect x="1648.5" y="171.0" width="14.5" height="14.5" fill="#8fffde"/><rect x="1662.5" y="171.0" width="14.5" height="14.5" fill="#98ffde"/><rect x="1676.5" y="171.0" width="14.5" height="14.5" fill="#a0ffde"/><rect x="1690.5" y="171.0" width="14.5" height="14.5" fill="#aaffde"/><rect x="1704.5" y="171.0" width="14.5" height="14.5" fill="#b3ffdd"/><rect x="1718.5" y="171.0" width="14.5" height="14.5" fill="#bcffdd"/><rect x="1732.5" y="171.0" width="14.5" height="14.5" fill="#c6ffdd"/><rect x="1746.5" y="171.0" width="14.5" height="14.5" fill="#d0ffdd"/><rect x="1760.5" y="171.0" width="14.5" height="14.5" fill="#daffdd"/><rect x="1774.5" y="171.0" width="14.5" height="14.5" fill="#e4ffdc"/><rect x="1788.5" y="171.0" width="14.5" height="14.5" fill="#efffdc"/><rect x="1802.5" y="171.0" width="14.5" height="14.5" fill="#faffdc"/><rect x="1816.5" y="171.0" width="14.5" height="14.5" fill="#fff9d7"/><rect x="1830.5" y="171.0" width="14.5" height="14.5" fill="#ffefce"/><rect x="1844.5" y="171.0" width="14.5" height="14.5" fill="#ffe5c5"/><rect x="1858.5" y="171.0" width="14.5" height="14.5" fill="#ffdcbd"/><rect x="1872.5" y="171.0" width="14.5" height="14.5" fill="#ffd3b5"/><rect x="1886.5" y="171.0" width="14.5" height="14.5" fill="#ffcbae"/><rect x="1900.5" y="171.0" width="14.5" height="14.5" fill="#ffc3a7"/><rect x="1914.5" y="171.0" width="14.5" height="14.5" fill="#ffbca1"/><rect x="1620.5" y="185.0" width="14.5" height="14.5" fill="#84ffe8"/><rect x="1634.5" y="185.0" width="14.5" height="14.5" fill="#8dffe7"/><rect x="1648.5" y="185.0" width="14.5" height="14.5" fill="#95ffe7"/><rect x="1662.5" y="185.0" width="14.5" height="14.5" fill="#9effe7"/><rect x="1676.5" y="185.0" width="14.5" height="14.5" fill="#a7ffe7"/><rect x="1690.5" y="185.0" width="14.5" height="14.5" fill="#b1ffe7"/><rect x="1704.5" y="185.0" width="14.5" height="14.5" fill="#baffe7"/><rect x="1718.5" y="185.0" width="14.5" height="14.5" fill="#c4ffe6"/><rect x="1732.5" y="185.0" width="14.5" height="14.5" fill="#ceffe6"/><rect x="1746.5" y="185.0" width="14.5" height="14.5" fill="#d8ffe6"/><rect x="1760.5" y="185.0" width="14.5" height="14.5" fill="#e2ffe6"/><rect x="1774.5" y="185.0" width="14.5" height="14.5" fill="#edffe6"/><rect x="1788.5" y="185.0" width="14.5" height="14.5" fill="#f8ffe6"/><rect x="1802.5" y="185.0" width="14.5" height="14.5" fill="#fffbe2"/><rect x="1816.5" y="185.0" width="14.5" height="14.5" fill="#fff0d8"/><rect x="1830.5" y="185.0" width="14.5" height="14.5" fill="#ffe6cf"/><rect x="1844.5" y="185.0" width="14.5" height="14.5" fill="#ffddc6"/><rect x="1858.5" y="185.0" width="14.5" height="14.5" fill="#ffd4be"/><rect x="1872.5" y="185.0" width="14.5" height="14.5" fill="#ffccb6"/><rect x="1886.5" y="185.0" width="14.5" height="14.5" fill="#ffc4af"/><rect x="1900.5" y="185.0" width="14.5" height="14.5" fill="#ffbca8"/><rect x="1914.5" y="185.0" width="14.5" height="14.5" fill="#ffb5a2"/><rect x="1620.5" y="199.0" width="14.5" height="14.5" fill="#8afff1"/><rect x="1634.5" y="199.0" width="14.5" height="14.5" fill="#93fff1"/><rect x="1648.5" y="199.0" width="14.5" height="14.5" fill="#9cfff0"/><rect x="1662.5" y="199.0" width="14.5" height="14.5" fill="#a5fff0"/><rect x="1676.5" y="199.0" width="14.5" height="14.5" fill="#aefff0"/><rect x="1690.5" y="199.0" width="14.5" height="14.5" fill="#b8fff0"/><rect x="1704.5" y="199.0" width="14.5" height="14.5" fill="#c2fff0"/><rect x="1718.5" y="199.0" width="14.5" height="14.5" fill="#ccfff0"/><rect x="1732.5" y="199.0" width="14.5" height="14.5" fill="#d6fff0"/><rect x="1746.5" y="199.0" width="14.5" height="14.5" fill="#e1fff0"/><rect x="1760.5" y="199.0" width="14.5" height="14.5" fill="#ebfff0"/><rect x="1774.5" y="199.0" width="14.5" height="14.5" fill="#f6fff0"/><rect x="1788.5" y="199.0" width="14.5" height="14.5" fill="#fffced"/><rect x="1802.5" y="199.0" width="14.5" height="14.5" fill="#fff1e3"/><rect x="1816.5" y="199.0" width="14.5" height="14.5" fill="#ffe7d9"/><rect x="1830.5" y="199.0" width="14.5" height="14.5" fill="#ffded0"/><rect x="1844.5" y="199.0" width="14.5" height="14.5" fill="#ffd5c7"/><rect x="1858.5" y="199.0" width="14.5" height="14.5" fill="#ffccbf"/><rect x="1872.5" y="199.0" width="14.5" height="14.5" fill="#ffc4b8"/><rect x="1886.5" y="199.0" width="14.5" height="14.5" fill="#ffbdb1"/><rect x="1900.5" y="199.0" width="14.5" height="14.5" fill="#ffb5aa"/><rect x="1914.5" y="199.0" width="14.5" height="14.5" fill="#ffafa3"/><rect x="1620.5" y="213.0" width="14.5" height="14.5" fill="#90fffa"/><rect x="1634.5" y="213.0" width="14.5" height="14.5" fill="#99fffa"/><rect x="1648.5" y="213.0" width="14.5" height="14.5" fill="#a2fffa"/><rect x="1662.5" y="213.0" width="14.5" height="14.5" fill="#acfffa"/><rect x="1676.5" y="213.0" width="14.5" height="14.5" fill="#b6fffa"/><rect x="1690.5" y="213.0" width="14.5" height="14.5" fill="#c0fffa"/><rect x="1704.5" y="213.0" width="14.5" height="14.5" fill="#cafffa"/><rect x="1718.5" y="213.0" width="14.5" height="14.5" fill="#d4fffa"/><rect x="1732.5" y="213.0" width="14.5" height="14.5" fill="#dffffa"/><rect x="1746.5" y="213.0" width="14.5" height="14.5" fill="#eafffa"/><rect x="1760.5" y="213.0" width="14.5" height="14.5" fill="#f5fffa"/><rect x="1774.5" y="213.0" width="14.5" height="14.5" fill="#fffef9"/><rect x="1788.5" y="213.0" width="14.5" height="14.5" fill="#fff3ee"/><rect x="1802.5" y="213.0" width="14.5" height="14.5" fill="#ffe8e4"/><rect x="1816.5" y="213.0" width="14.5" height="14.5" fill="#ffdeda"/><rect x="1830.5" y="213.0" width="14.5" height="14.5" fill="#ffd5d1"/><rect x="1844.5" y="213.0" width="14.5" height="14.5" fill="#ffcdc9"/><rect x="1858.5" y="213.0" width="14.5" height="14.5" fill="#ffc5c1"/><rect x="1872.5" y="213.0" width="14.5" height="14.5" fill="#ffbdb9"/><rect x="1886.5" y="213.0" width="14.5" height="14.5" fill="#ffb6b2"/><rect x="1900.5" y="213.0" width="14.5" height="14.5" fill="#ffafab"/><rect x="1914.5" y="213.0" width="14.5" height="14.5" fill="#ffa8a5"/><rect x="1620.5" y="227.0" width="14.5" height="14.5" fill="#94faff"/><rect x="1634.5" y="227.0" width="14.5" height="14.5" fill="#9dfaff"/><rect x="1648.5" y="227.0" width="14.5" height="14.5" fill="#a6faff"/><rect x="1662.5" y="227.0" width="14.5" height="14.5" fill="#b0faff"/><rect x="1676.5" y="227.0" width="14.5" height="14.5" fill="#b9faff"/><rect x="1690.5" y="227.0" width="14.5" height="14.5" fill="#c3faff"/><rect x="1704.5" y="227.0" width="14.5" height="14.5" fill="#cefaff"/><rect x="1718.5" y="227.0" width="14.5" height="14.5" fill="#d8f9ff"/><rect x="1732.5" y="227.0" width="14.5" height="14.5" fill="#e3f9ff"/><rect x="1746.5" y="227.0" width="14.5" height="14.5" fill="#eef9ff"/><rect x="1760.5" y="227.0" width="14.5" height="14.5" fill="#f9f9ff"/><rect x="1774.5" y="227.0" width="14.5" height="14.5" fill="#fff4fa"/><rect x="1788.5" y="227.0" width="14.5" height="14.5" fill="#ffe9ef"/><rect x="1802.5" y="227.0" width="14.5" height="14.5" fill="#ffdfe5"/><rect x="1816.5" y="227.0" width="14.5" height="14.5" fill="#ffd6db"/><rect x="1830.5" y="227.0" width="14.5" height="14.5" fill="#ffcdd2"/><rect x="1844.5" y="227.0" width="14.5" height="14.5" fill="#ffc5ca"/><rect x="1858.5" y="227.0" width="14.5" height="14.5" fill="#ffbdc2"/><rect x="1872.5" y="227.0" width="14.5" height="14.5" fill="#ffb6ba"/><rect x="1886.5" y="227.0" width="14.5" height="14.5" fill="#ffafb3"/><rect x="1900.5" y="227.0" width="14.5" height="14.5" fill="#ffa8ac"/><rect x="1914.5" y="227.0" width="14.5" height="14.5" fill="#ffa2a6"/><rect x="1620.5" y="241.0" width="14.5" height="14.5" fill="#94f0ff"/><rect x="1634.5" y="241.0" width="14.5" height="14.5" fill="#9df0ff"/><rect x="1648.5" y="241.0" width="14.5" height="14.5" fill="#a7f0ff"/><rect x="1662.5" y="241.0" width="14.5" height="14.5" fill="#b0f0ff"/><rect x="1676.5" y="241.0" width="14.5" height="14.5" fill="#baf0ff"/><rect x="1690.5" y="241.0" width="14.5" height="14.5" fill="#c3f0ff"/><rect x="1704.5" y="241.0" width="14.5" height="14.5" fill="#ceefff"/><rect x="1718.5" y="241.0" width="14.5" height="14.5" fill="#d8efff"/><rect x="1732.5" y="241.0" width="14.5" height="14.5" fill="#e2efff"/><rect x="1746.5" y="241.0" width="14.5" height="14.5" fill="#edefff"/><rect x="1760.5" y="241.0" width="14.5" height="14.5" fill="#f8efff"/><rect x="1774.5" y="241.0" width="14.5" height="14.5" fill="#ffeafa"/><rect x="1788.5" y="241.0" width="14.5" height="14.5" fill="#ffe0f0"/><rect x="1802.5" y="241.0" width="14.5" height="14.5" fill="#ffd7e6"/><rect x="1816.5" y="241.0" width="14.5" height="14.5" fill="#ffcedc"/><rect x="1830.5" y="241.0" width="14.5" height="14.5" fill="#ffc5d3"/><rect x="1844.5" y="241.0" width="14.5" height="14.5" fill="#ffbdcb"/><rect x="1858.5" y="241.0" width="14.5" height="14.5" fill="#ffb6c3"/><rect x="1872.5" y="241.0" width="14.5" height="14.5" fill="#ffafbc"/><rect x="1886.5" y="241.0" width="14.5" height="14.5" fill="#ffa8b4"/><rect x="1900.5" y="241.0" width="14.5" height="14.5" fill="#ffa2ae"/><rect x="1914.5" y="241.0" width="14.5" height="14.5" fill="#ff9ca7"/><rect x="1620.5" y="255.0" width="14.5" height="14.5" fill="#95e7ff"/><rect x="1634.5" y="255.0" width="14.5" height="14.5" fill="#9ee7ff"/><rect x="1648.5" y="255.0" width="14.5" height="14.5" fill="#a7e7ff"/><rect x="1662.5" y="255.0" width="14.5" height="14.5" fill="#b0e6ff"/><rect x="1676.5" y="255.0" width="14.5" height="14.5" fill="#bae6ff"/><rect x="1690.5" y="255.0" width="14.5" height="14.5" fill="#c4e6ff"/><rect x="1704.5" y="255.0" width="14.5" height="14.5" fill="#cde6ff"/><rect x="1718.5" y="255.0" width="14.5" height="14.5" fill="#d8e6ff"/><rect x="1732.5" y="255.0" width="14.5" height="14.5" fill="#e2e5ff"/><rect x="1746.5" y="255.0" width="14.5" height="14.5" fill="#ede5ff"/><rect x="1760.5" y="255.0" width="14.5" height="14.5" fill="#f8e5ff"/><rect x="1774.5" y="255.0" width="14.5" height="14.5" fill="#ffe1fb"/><rect x="1788.5" y="255.0" width="14.5" height="14.5" fill="#ffd8f1"/><rect x="1802.5" y="255.0" width="14.5" height="14.5" fill="#ffcee7"/><rect x="1816.5" y="255.0" width="14.5" height="14.5" fill="#ffc6dd"/><rect x="1830.5" y="255.0" width="14.5" height="14.5" fill="#ffbed4"/><rect x="1844.5" y="255.0" width="14.5" height="14.5" fill="#ffb6cc"/><rect x="1858.5" y="255.0" width="14.5" height="14.5" fill="#ffafc4"/><rect x="1872.5" y="255.0" width="14.5" height="14.5" fill="#ffa8bd"/><rect x="1886.5" y="255.0" width="14.5" height="14.5" fill="#ffa2b6"/><rect x="1900.5" y="255.0" width="14.5" height="14.5" fill="#ff9baf"/><rect x="1914.5" y="255.0" width="14.5" height="14.5" fill="#ff96a9"/><rect x="1620.5" y="269.0" width="14.5" height="14.5" fill="#96deff"/><rect x="1634.5" y="269.0" width="14.5" height="14.5" fill="#9edeff"/><rect x="1648.5" y="269.0" width="14.5" height="14.5" fill="#a7ddff"/><rect x="1662.5" y="269.0" width="14.5" height="14.5" fill="#b1ddff"/><rect x="1676.5" y="269.0" width="14.5" height="14.5" fill="#baddff"/><rect x="1690.5" y="269.0" width="14.5" height="14.5" fill="#c4ddff"/><rect x="1704.5" y="269.0" width="14.5" height="14.5" fill="#cddcff"/><rect x="1718.5" y="269.0" width="14.5" height="14.5" fill="#d7dcff"/><rect x="1732.5" y="269.0" width="14.5" height="14.5" fill="#e2dcff"/><rect x="1746.5" y="269.0" width="14.5" height="14.5" fill="#ecdbff"/><rect x="1760.5" y="269.0" width="14.5" height="14.5" fill="#f7dbff"/><rect x="1774.5" y="269.0" width="14.5" height="14.5" fill="#ffd8fc"/><rect x="1788.5" y="269.0" width="14.5" height="14.5" fill="#ffcff1"/><rect x="1802.5" y="269.0" width="14.5" height="14.5" fill="#ffc6e8"/><rect x="1816.5" y="269.0" width="14.5" height="14.5" fill="#ffbede"/><rect x="1830.5" y="269.0" width="14.5" height="14.5" fill="#ffb6d5"/><rect x="1844.5" y="269.0" width="14.5" height="14.5" fill="#ffafcd"/><rect x="1858.5" y="269.0" width="14.5" height="14.5" fill="#ffa8c5"/><rect x="1872.5" y="269.0" width="14.5" height="14.5" fill="#ffa1be"/><rect x="1886.5" y="269.0" width="14.5" height="14.5" fill="#ff9bb7"/><rect x="1900.5" y="269.0" width="14.5" height="14.5" fill="#ff95b0"/><rect x="1914.5" y="269.0" width="14.5" height="14.5" fill="#ff90aa"/><rect x="1620.5" y="283.0" width="14.5" height="14.5" fill="#96d5ff"/><rect x="1634.5" y="283.0" width="14.5" height="14.5" fill="#9fd5ff"/><rect x="1648.5" y="283.0" width="14.5" height="14.5" fill="#a8d4ff"/><rect x="1662.5" y="283.0" width="14.5" height="14.5" fill="#b1d4ff"/><rect x="1676.5" y="283.0" width="14.5" height="14.5" fill="#bad4ff"/><rect x="1690.5" y="283.0" width="14.5" height="14.5" fill="#c4d4ff"/><rect x="1704.5" y="283.0" width="14.5" height="14.5" fill="#cdd3ff"/><rect x="1718.5" y="283.0" width="14.5" height="14.5" fill="#d7d3ff"/><rect x="1732.5" y="283.0" width="14.5" height="14.5" fill="#e1d3ff"/><rect x="1746.5" y="283.0" width="14.5" height="14.5" fill="#ecd2ff"/><rect x="1760.5" y="283.0" width="14.5" height="14.5" fill="#f6d2ff"/><rect x="1774.5" y="283.0" width="14.5" height="14.5" fill="#ffd0fd"/><rect x="1788.5" y="283.0" width="14.5" height="14.5" fill="#ffc7f2"/><rect x="1802.5" y="283.0" width="14.5" height="14.5" fill="#ffbee8"/><rect x="1816.5" y="283.0" width="14.5" height="14.5" fill="#ffb6df"/><rect x="1830.5" y="283.0" width="14.5" height="14.5" fill="#ffafd7"/><rect x="1844.5" y="283.0" width="14.5" height="14.5" fill="#ffa8ce"/><rect x="1858.5" y="283.0" width="14.5" height="14.5" fill="#ffa1c6"/><rect x="1872.5" y="283.0" width="14.5" height="14.5" fill="#ff9bbf"/><rect x="1886.5" y="283.0" width="14.5" height="14.5" fill="#ff95b8"/><rect x="1900.5" y="283.0" width="14.5" height="14.5" fill="#ff8fb1"/><rect x="1914.5" y="283.0" width="14.5" height="14.5" fill="#ff8aab"/><rect x="1620.5" y="297.0" width="14.5" height="14.5" fill="#97cdff"/><rect x="1634.5" y="297.0" width="14.5" height="14.5" fill="#a0ccff"/><rect x="1648.5" y="297.0" width="14.5" height="14.5" fill="#a8ccff"/><rect x="1662.5" y="297.0" width="14.5" height="14.5" fill="#b1ccff"/><rect x="1676.5" y="297.0" width="14.5" height="14.5" fill="#bacbff"/><rect x="1690.5" y="297.0" width="14.5" height="14.5" fill="#c4cbff"/><rect x="1704.5" y="297.0" width="14.5" height="14.5" fill="#cdcaff"/><rect x="1718.5" y="297.0" width="14.5" height="14.5" fill="#d7caff"/><rect x="1732.5" y="297.0" width="14.5" height="14.5" fill="#e1caff"/><rect x="1746.5" y="297.0" width="14.5" height="14.5" fill="#ebc9ff"/><rect x="1760.5" y="297.0" width="14.5" height="14.5" fill="#f6c9ff"/><rect x="1774.5" y="297.0" width="14.5" height="14.5" fill="#ffc7fd"/><rect x="1788.5" y="297.0" width="14.5" height="14.5" fill="#ffbff3"/><rect x="1802.5" y="297.0" width="14.5" height="14.5" fill="#ffb7e9"/><rect x="1816.5" y="297.0" width="14.5" height="14.5" fill="#ffafe0"/><rect x="1830.5" y="297.0" width="14.5" height="14.5" fill="#ffa8d8"/><rect x="1844.5" y="297.0" width="14.5" height="14.5" fill="#ffa1cf"/><rect x="1858.5" y="297.0" width="14.5" height="14.5" fill="#ff9bc8"/><rect x="1872.5" y="297.0" width="14.5" height="14.5" fill="#ff95c0"/><rect x="1886.5" y="297.0" width="14.5" height="14.5" fill="#ff8fb9"/><rect x="1900.5" y="297.0" width="14.5" height="14.5" fill="#ff8ab3"/><rect x="1914.5" y="297.0" width="14.5" height="14.5" fill="#ff84ac"/><rect x="1620.5" y="311.0" width="14.5" height="14.5" fill="#98c4ff"/><rect x="1634.5" y="311.0" width="14.5" height="14.5" fill="#a0c4ff"/><rect x="1648.5" y="311.0" width="14.5" height="14.5" fill="#a9c4ff"/><rect x="1662.5" y="311.0" width="14.5" height="14.5" fill="#b2c3ff"/><rect x="1676.5" y="311.0" width="14.5" height="14.5" fill="#bbc3ff"/><rect x="1690.5" y="311.0" width="14.5" height="14.5" fill="#c4c2ff"/><rect x="1704.5" y="311.0" width="14.5" height="14.5" fill="#cdc2ff"/><rect x="1718.5" y="311.0" width="14.5" height="14.5" fill="#d7c1ff"/><rect x="1732.5" y="311.0" width="14.5" height="14.5" fill="#e1c1ff"/><rect x="1746.5" y="311.0" width="14.5" height="14.5" fill="#ebc0ff"/><rect x="1760.5" y="311.0" width="14.5" height="14.5" fill="#f5c0ff"/><rect x="1774.5" y="311.0" width="14.5" height="14.5" fill="#ffbffe"/><rect x="1788.5" y="311.0" width="14.5" height="14.5" fill="#ffb7f4"/><rect x="1802.5" y="311.0" width="14.5" height="14.5" fill="#ffafea"/><rect x="1816.5" y="311.0" width="14.5" height="14.5" fill="#ffa8e1"/><rect x="1830.5" y="311.0" width="14.5" height="14.5" fill="#ffa1d9"/><rect x="1844.5" y="311.0" width="14.5" height="14.5" fill="#ff9bd0"/><rect x="1858.5" y="311.0" width="14.5" height="14.5" fill="#ff94c9"/><rect x="1872.5" y="311.0" width="14.5" height="14.5" fill="#ff8fc1"/><rect x="1886.5" y="311.0" width="14.5" height="14.5" fill="#ff89ba"/><rect x="1900.5" y="311.0" width="14.5" height="14.5" fill="#ff84b4"/><rect x="1914.5" y="311.0" width="14.5" height="14.5" fill="#ff7fae"/><rect x="1620.5" y="325.0" width="14.5" height="14.5" fill="#98bcff"/><rect x="1634.5" y="325.0" width="14.5" height="14.5" fill="#a1bcff"/><rect x="1648.5" y="325.0" width="14.5" height="14.5" fill="#a9bbff"/><rect x="1662.5" y="325.0" width="14.5" height="14.5" fill="#b2bbff"/><rect x="1676.5" y="325.0" width="14.5" height="14.5" fill="#bbbbff"/><rect x="1690.5" y="325.0" width="14.5" height="14.5" fill="#c4baff"/><rect x="1704.5" y="325.0" width="14.5" height="14.5" fill="#cdbaff"/><rect x="1718.5" y="325.0" width="14.5" height="14.5" fill="#d7b9ff"/><rect x="1732.5" y="325.0" width="14.5" height="14.5" fill="#e1b9ff"/><rect x="1746.5" y="325.0" width="14.5" height="14.5" fill="#ebb8ff"/><rect x="1760.5" y="325.0" width="14.5" height="14.5" fill="#f5b8ff"/><rect x="1774.5" y="325.0" width="14.5" height="14.5" fill="#ffb7ff"/><rect x="1788.5" y="325.0" width="14.5" height="14.5" fill="#ffaff5"/><rect x="1802.5" y="325.0" width="14.5" height="14.5" fill="#ffa8eb"/><rect x="1816.5" y="325.0" width="14.5" height="14.5" fill="#ffa1e2"/><rect x="1830.5" y="325.0" width="14.5" height="14.5" fill="#ff9ada"/><rect x="1844.5" y="325.0" width="14.5" height="14.5" fill="#ff94d1"/><rect x="1858.5" y="325.0" width="14.5" height="14.5" fill="#ff8eca"/><rect x="1872.5" y="325.0" width="14.5" height="14.5" fill="#ff89c2"/><rect x="1886.5" y="325.0" width="14.5" height="14.5" fill="#ff83bc"/><rect x="1900.5" y="325.0" width="14.5" height="14.5" fill="#ff7eb5"/><rect x="1914.5" y="325.0" width="14.5" height="14.5" fill="#ff7aaf"/><rect x="1620.5" y="339.0" width="14.5" height="14.5" fill="#99b5ff"/><rect x="1634.5" y="339.0" width="14.5" height="14.5" fill="#a1b4ff"/><rect x="1648.5" y="339.0" width="14.5" height="14.5" fill="#aab4ff"/><rect x="1662.5" y="339.0" width="14.5" height="14.5" fill="#b2b3ff"/><rect x="1676.5" y="339.0" width="14.5" height="14.5" fill="#bbb3ff"/><rect x="1690.5" y="339.0" width="14.5" height="14.5" fill="#c4b2ff"/><rect x="1704.5" y="339.0" width="14.5" height="14.5" fill="#cdb2ff"/><rect x="1718.5" y="339.0" width="14.5" height="14.5" fill="#d7b1ff"/><rect x="1732.5" y="339.0" width="14.5" height="14.5" fill="#e0b1ff"/><rect x="1746.5" y="339.0" width="14.5" height="14.5" fill="#eab0ff"/><rect x="1760.5" y="339.0" width="14.5" height="14.5" fill="#f4afff"/><rect x="1774.5" y="339.0" width="14.5" height="14.5" fill="#feafff"/><rect x="1788.5" y="339.0" width="14.5" height="14.5" fill="#ffa8f6"/><rect x="1802.5" y="339.0" width="14.5" height="14.5" fill="#ffa1ec"/><rect x="1816.5" y="339.0" width="14.5" height="14.5" fill="#ff9ae3"/><rect x="1830.5" y="339.0" width="14.5" height="14.5" fill="#ff94da"/><rect x="1844.5" y="339.0" width="14.5" height="14.5" fill="#ff8ed2"/><rect x="1858.5" y="339.0" width="14.5" height="14.5" fill="#ff88cb"/><rect x="1872.5" y="339.0" width="14.5" height="14.5" fill="#ff83c4"/><rect x="1886.5" y="339.0" width="14.5" height="14.5" fill="#ff7ebd"/><rect x="1900.5" y="339.0" width="14.5" height="14.5" fill="#ff79b6"/><rect x="1914.5" y="339.0" width="14.5" height="14.5" fill="#ff74b0"/></g></g>
<rect x="1765.4" y="217.9" width="16" height="16" fill="#fff" fill-opacity="0.85" stroke="#141414" stroke-width="1.6"/>
<circle cx="1759.7" cy="241.8" r="4.8" fill="#c4c4c4" stroke="#1a1a1a" stroke-width="1.5"/>
<circle cx="1764.4" cy="237.6" r="4.6" fill="#fdfdfd" stroke="#1a1a1a" stroke-width="1.5"/>
<rect x="1613.50" y="609.50" width="290.00" height="30.00" fill="#393939" />
<text transform="translate(1615.00 631.50) scale(1.0731 1)" font-size="21" fill="#f0f0f0" style="white-space:pre" stroke="#f0f0f0" stroke-width="0.35">Gamut Coverage:  83.1%</text>
<rect x="0.00" y="941.00" width="1920.00" height="69.00" fill="url(#gbar)" />
<path d="M1.5 1012V945Q1.5 941.5 5.0 941.5H166.5Q170.0 941.5 170.0 945V1012Z" fill="url(#gsb)" stroke="#4a4a4a" stroke-width="1"/>
<rect x="8.0" y="947.5" width="157" height="39" rx="3" fill="#c6c6c6" stroke="#00000040" stroke-width="1"/>
<text transform="translate(86.00 1004.00) scale(1.0500 1)" font-size="10.5" fill="#303030" text-anchor="middle" stroke="#303030" stroke-width="0.3">White</text>
<path d="M172.6 1012V945Q172.6 941.5 176.1 941.5H337.6Q341.1 941.5 341.1 945V1012Z" fill="url(#gsb)" stroke="#4a4a4a" stroke-width="1"/>
<rect x="179.1" y="947.5" width="157" height="39" rx="3" fill="#c40000" stroke="#00000040" stroke-width="1"/>
<text transform="translate(257.10 1004.00) scale(1.0500 1)" font-size="10.5" fill="#303030" text-anchor="middle" stroke="#303030" stroke-width="0.3">Red</text>
<path d="M343.7 1012V945Q343.7 941.5 347.2 941.5H508.7Q512.2 941.5 512.2 945V1012Z" fill="url(#gsb)" stroke="#4a4a4a" stroke-width="1"/>
<rect x="350.2" y="947.5" width="157" height="39" rx="3" fill="#00c400" stroke="#00000040" stroke-width="1"/>
<text transform="translate(428.20 1004.00) scale(1.0500 1)" font-size="10.5" fill="#303030" text-anchor="middle" stroke="#303030" stroke-width="0.3">Green</text>
<path d="M514.8 1012V945Q514.8 941.5 518.3 941.5H679.8Q683.3 941.5 683.3 945V1012Z" fill="url(#gsb)" stroke="#4a4a4a" stroke-width="1"/>
<rect x="521.3" y="947.5" width="157" height="39" rx="3" fill="#0000c0" stroke="#00000040" stroke-width="1"/>
<text transform="translate(599.30 1004.00) scale(1.0500 1)" font-size="10.5" fill="#303030" text-anchor="middle" stroke="#303030" stroke-width="0.3">Blue</text>
<path d="M685.9 1012V945Q685.9 941.5 689.4 941.5H850.9Q854.4 941.5 854.4 945V1012Z" fill="url(#gsb)" stroke="#4a4a4a" stroke-width="1"/>
<rect x="692.4" y="947.5" width="157" height="39" rx="3" fill="#00c4c4" stroke="#00000040" stroke-width="1"/>
<text transform="translate(770.40 1004.00) scale(1.0500 1)" font-size="10.5" fill="#303030" text-anchor="middle" stroke="#303030" stroke-width="0.3">Cyan</text>
<path d="M857.0 1012V945Q857.0 941.5 860.5 941.5H1022.0Q1025.5 941.5 1025.5 945V1012Z" fill="url(#gsb)" stroke="#4a4a4a" stroke-width="1"/>
<rect x="863.5" y="947.5" width="157" height="39" rx="3" fill="#c400c4" stroke="#00000040" stroke-width="1"/>
<text transform="translate(941.50 1004.00) scale(1.0500 1)" font-size="10.5" fill="#303030" text-anchor="middle" stroke="#303030" stroke-width="0.3">Magenta</text>
<path d="M1028.1 1012V945Q1028.1 941.5 1031.6 941.5H1193.1Q1196.6 941.5 1196.6 945V1012Z" fill="url(#gsb)" stroke="#4a4a4a" stroke-width="1"/>
<rect x="1034.6" y="947.5" width="157" height="39" rx="3" fill="#c8c800" stroke="#00000040" stroke-width="1"/>
<text transform="translate(1112.60 1004.00) scale(1.0500 1)" font-size="10.5" fill="#303030" text-anchor="middle" stroke="#303030" stroke-width="0.3">Yellow</text>
<path d="M1199.2 1012V945Q1199.2 941.5 1202.7 941.5H1364.2Q1367.7 941.5 1367.7 945V1012Z" fill="#1e1e1e" stroke="#2c2c2c" stroke-width="1"/>
<rect x="1205.7" y="947.5" width="157" height="39" rx="3" fill="#ffffff" stroke="#00000040" stroke-width="1"/>
<text transform="translate(1283.70 1004.00) scale(1.0500 1)" font-size="10.5" fill="#f4f4f4" font-weight="bold" text-anchor="middle">100W</text>
<path d="M1557 1012V945Q1557 941 1561 941H1607Q1611 941 1611 945V1012Z" fill="url(#gct2)"/>
<rect x="1557.00" y="961.00" width="54.00" height="51.00" fill="url(#gct)" />
<line x1="1557.00" y1="960.70" x2="1611.00" y2="960.70" stroke="#555" stroke-width="1.2" />
<path d="M1574.5 953a9.2 8 0 0 1 18.4 0z" fill="#b8b8b8" opacity="0.7"/>
<path d="M1579 952.5l4.7-4.3l4.7 4.3z" fill="#262626"/>
<rect x="1568.2" y="969.6" width="31.5" height="31.8" rx="4" fill="url(#gsq)" stroke="#141414" stroke-width="2.8"/>
<rect x="1576.50" y="978.00" width="15.50" height="15.00" fill="#050505" />
<path d="M1613 973V944Q1613 941 1616 941H1863Q1866 941 1866 944V973Z" fill="url(#gct)"/>
<line x1="1664.80" y1="941.00" x2="1664.80" y2="973.00" stroke="#555" stroke-width="1.3" />
<line x1="1714.80" y1="941.00" x2="1714.80" y2="973.00" stroke="#555" stroke-width="1.3" />
<line x1="1765.10" y1="941.00" x2="1765.10" y2="973.00" stroke="#555" stroke-width="1.3" />
<line x1="1816.10" y1="941.00" x2="1816.10" y2="973.00" stroke="#555" stroke-width="1.3" />
<rect x="1866.50" y="941.00" width="54.00" height="33.00" fill="#383838" />
<circle cx="1892.5" cy="958.5" r="11.5" fill="#484848"/><circle cx="1892.5" cy="957.8" r="11.2" fill="#2c2c2c"/>
<circle cx="1638" cy="957.3" r="11.5" fill="url(#grc)"/>
<circle cx="1689.5" cy="957.3" r="11.5" fill="url(#grc)"/>
<circle cx="1740" cy="957.3" r="11.5" fill="url(#grc)"/>
<circle cx="1790.4" cy="957.3" r="11.5" fill="url(#grc)"/>
<circle cx="1841.7" cy="957.3" r="11.5" fill="url(#grc)"/>
<rect x="1633.70" y="953.20" width="8.80" height="8.60" fill="#2c2c2c" />
<path d="M1686.5 952.5v11l9.2-5.500z" fill="#2c2c2c"/>
<path d="M1736.3 951.5h-2.6v11.6h2.6M1743.700 951.5h2.6v11.6h-2.6M1737.600 957.3h4.800" fill="none" stroke="#2c2c2c" stroke-width="2.1"/>
<path d="M1790.4 957.3C1788.4 953.0999999999999 1783.6000000000001 953.0999999999999 1783.6000000000001 957.3C1783.6000000000001 961.5 1788.4 961.5 1790.4 957.3C1792.4 953.0999999999999 1797.2 953.0999999999999 1797.2 957.3C1797.2 961.5 1792.4 961.5 1790.4 957.3Z" fill="none" stroke="#2c2c2c" stroke-width="2.1"/>
<path d="M1836.9 955.8a5.2 5.2 0 0 1 9.2-2.2M1846.500 958.8a5.2 5.2 0 0 1-9.2 2.2" fill="none" stroke="#2c2c2c" stroke-width="2.8"/>
<path d="M1843.6 951.8l4.800-1.400v5.600zM1839.800 962.800l-4.800 1.400v-5.600z" fill="#2c2c2c"/>
<path d="M1613 1012V979Q1613 975 1617 975H1914Q1918 975 1918 979V1012Z" fill="url(#gbn)"/>
<line x1="1765.00" y1="976.00" x2="1765.00" y2="1010.00" stroke="#5a5a5a" stroke-width="1.3" />
<circle cx="1647" cy="992.3" r="11" fill="url(#grc)"/>
<circle cx="1887.5" cy="992.3" r="11" fill="url(#grc)"/>
<path d="M1646.3 987.2l-4.6 5.200l4.600 5.200M1651.8 987.2l-4.600 5.200l4.600 5.200" fill="none" stroke="#2e2e2e" stroke-width="2.3"/>
<path d="M1888.2 987.2l4.600 5.200l-4.600 5.200M1882.7 987.2l4.600 5.200l-4.600 5.200" fill="none" stroke="#2e2e2e" stroke-width="2.3"/>
<text transform="translate(1677.30 1001.00) scale(1.0496 1)" font-size="24" fill="#333" stroke="#333" stroke-width="0.5" style="filter:drop-shadow(0.5px 1px 0 rgba(200,200,200,.5))">Back</text>
<text transform="translate(1797.20 1001.00) scale(1.1753 1)" font-size="24" fill="#333" stroke="#333" stroke-width="0.5" style="filter:drop-shadow(0.5px 1px 0 rgba(200,200,200,.5))">Next</text>
</g>
</svg>
</body></html>
